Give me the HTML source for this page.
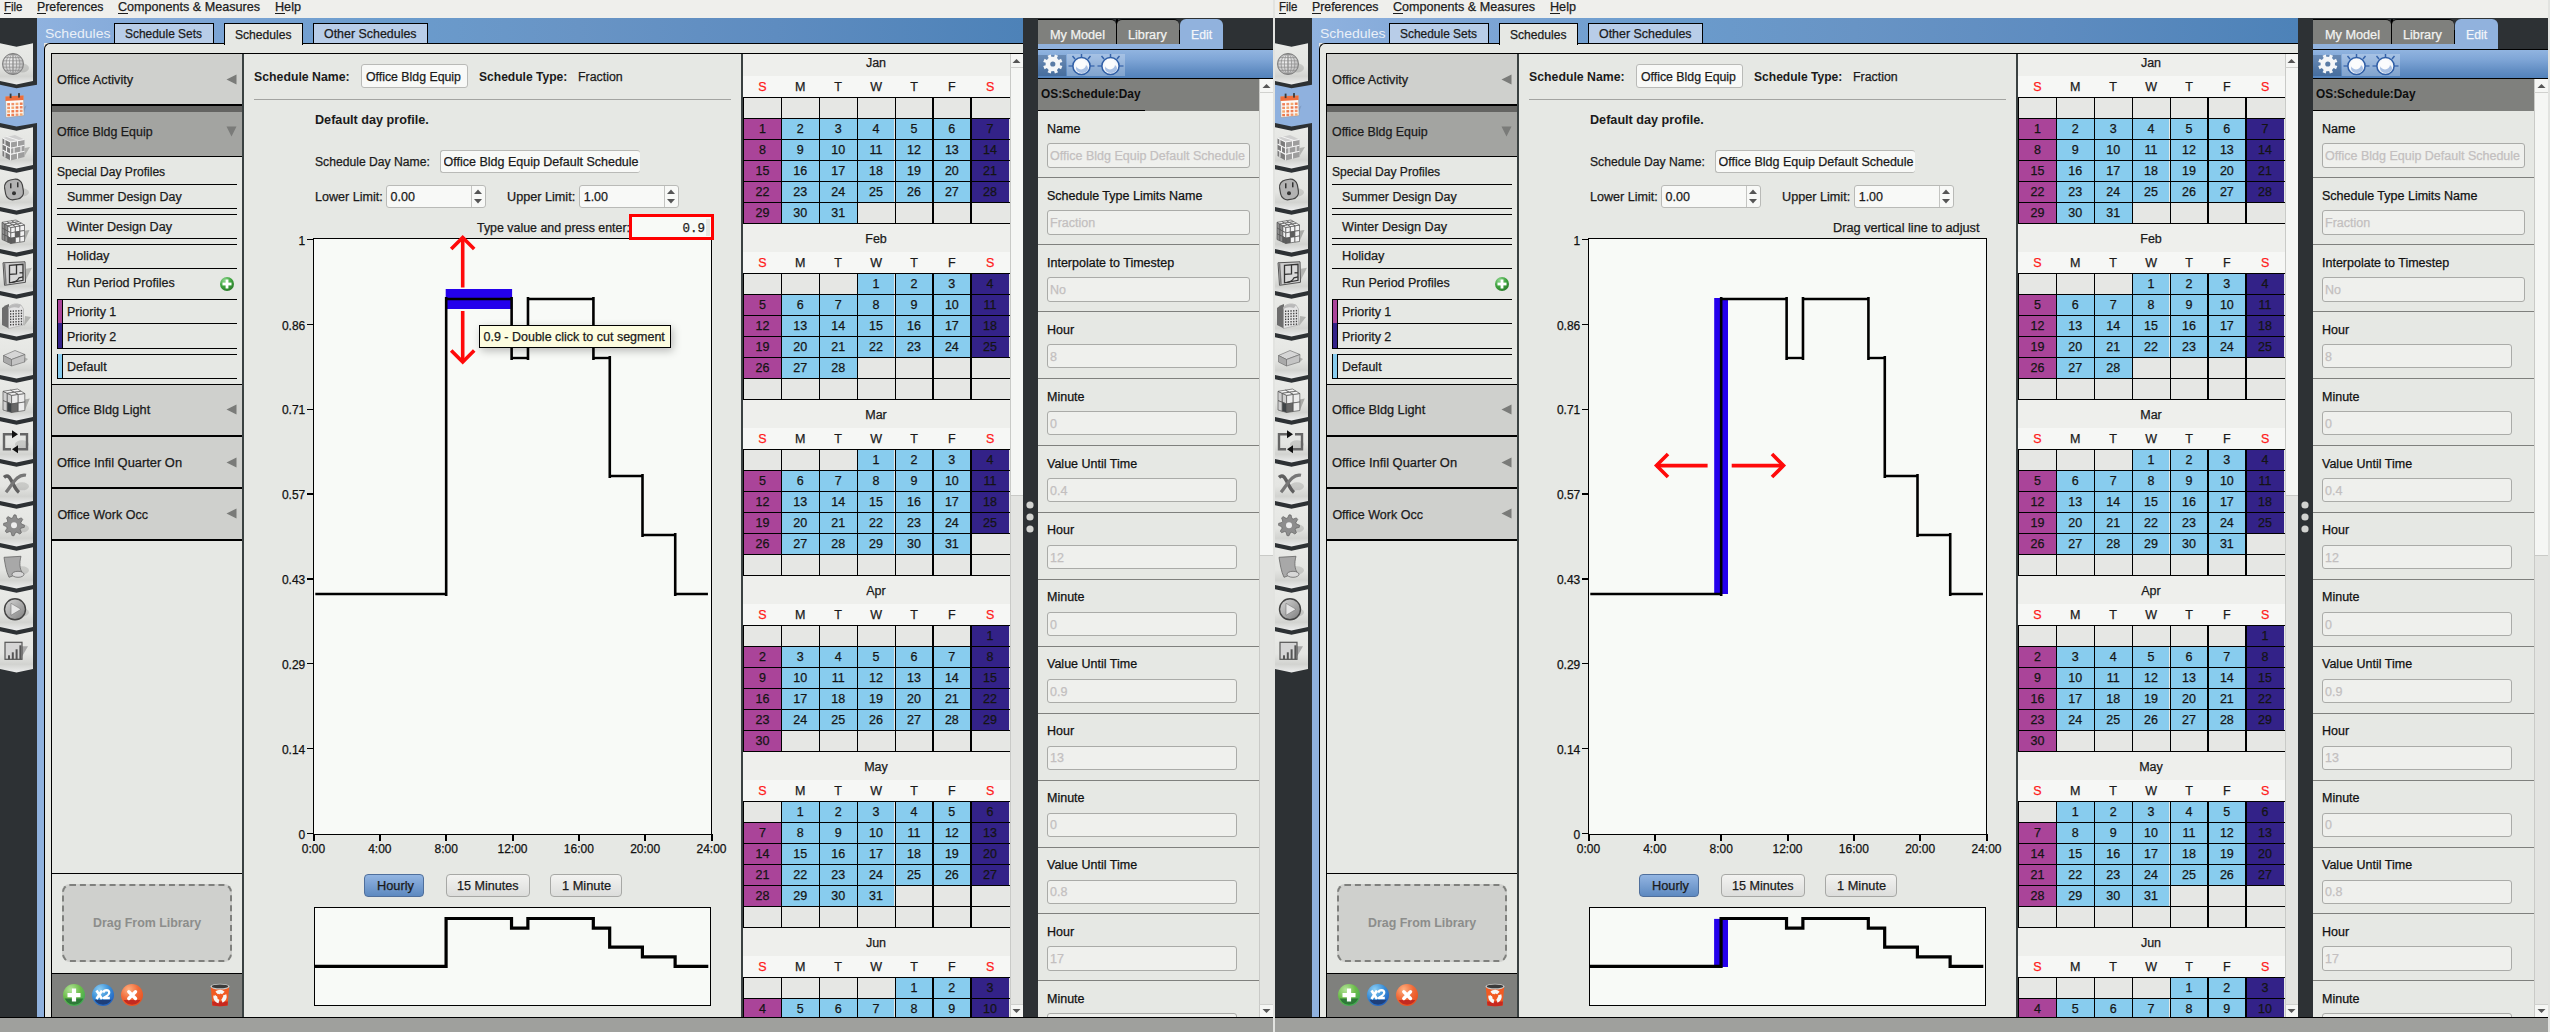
<!DOCTYPE html><html><head><meta charset="utf-8"><style>

html,body{margin:0;padding:0;width:2550px;height:1032px;overflow:hidden;background:#e6e7e4}
.shot{position:absolute;top:0;width:1275px;height:1032px;overflow:hidden}
.shot>div,.shot>svg{position:absolute}

</style></head><body>
<div class="shot" style="left:0px">
<div style="left:0px;top:0px;width:1273px;height:18px;background:#efefec;"></div>
<div style="left:3.50px;top:1.43px;font-family:'Liberation Sans', sans-serif;font-size:12.2px;line-height:12.2px;font-weight:normal;color:#1c1c1c;white-space:nowrap;-webkit-text-stroke:0.25px #1c1c1c;transform:scaleX(0.9391);transform-origin:0 0;">File</div>
<div style="left:3.5px;top:13px;width:7.543147208121827px;height:1px;background:#1c1c1c;"></div>
<div style="left:37.00px;top:1.43px;font-family:'Liberation Sans', sans-serif;font-size:12.2px;line-height:12.2px;font-weight:normal;color:#1c1c1c;white-space:nowrap;-webkit-text-stroke:0.25px #1c1c1c;transform:scaleX(1.0106);transform-origin:0 0;">Preferences</div>
<div style="left:37px;top:13px;width:8.686170212765958px;height:1px;background:#1c1c1c;"></div>
<div style="left:118.00px;top:1.43px;font-family:'Liberation Sans', sans-serif;font-size:12.2px;line-height:12.2px;font-weight:normal;color:#1c1c1c;white-space:nowrap;-webkit-text-stroke:0.25px #1c1c1c;transform:scaleX(1.0320);transform-origin:0 0;">Components &amp; Measures</div>
<div style="left:118px;top:13px;width:9.581395348837205px;height:1px;background:#1c1c1c;"></div>
<div style="left:275.00px;top:1.43px;font-family:'Liberation Sans', sans-serif;font-size:12.2px;line-height:12.2px;font-weight:normal;color:#1c1c1c;white-space:nowrap;-webkit-text-stroke:0.25px #1c1c1c;transform:scaleX(1.0359);transform-origin:0 0;">Help</div>
<div style="left:275px;top:13px;width:9.615537848605584px;height:1px;background:#1c1c1c;"></div>
<div style="left:0px;top:18px;width:37px;height:999px;background:#2d3134;"></div>
<svg style="position:absolute;left:0px;top:18px;" width="37" height="999" viewBox="0 0 37 999"><defs><linearGradient id="bn" x1="0" y1="0" x2="0" y2="1"><stop offset="0" stop-color="#e9eae7"/><stop offset="0.55" stop-color="#e4e5e2"/><stop offset="0.8" stop-color="#d2d3d0"/><stop offset="1" stop-color="#eceded"/></linearGradient><linearGradient id="gr" x1="0" y1="0" x2="1" y2="1"><stop offset="0" stop-color="#d9d9d9"/><stop offset="1" stop-color="#7d7d7d"/></linearGradient></defs><polygon points="0,25.30 16.50,28.80 33,25.30 33,63.00 16.50,66.50 0,63.00" fill="url(#bn)"/><ellipse cx="22" cy="50.0" rx="7" ry="4.5" fill="#000" opacity="0.13"/><defs><radialGradient id="gl" cx="0.4" cy="0.35" r="0.7"><stop offset="0" stop-color="#f2f2f2"/><stop offset="1" stop-color="#b9b9b9"/></radialGradient><clipPath id="gc"><circle cx="13" cy="46.0" r="10.6"/></clipPath></defs><circle cx="13" cy="46.0" r="10.6" fill="url(#gl)"/><g clip-path="url(#gc)" stroke="#8f8f8f" stroke-width="0.75" fill="none"><line x1="2" y1="36.4" x2="24" y2="36.4"/><line x1="2" y1="39.6" x2="24" y2="39.6"/><line x1="2" y1="42.8" x2="24" y2="42.8"/><line x1="2" y1="46.0" x2="24" y2="46.0"/><line x1="2" y1="49.2" x2="24" y2="49.2"/><line x1="2" y1="52.4" x2="24" y2="52.4"/><line x1="2" y1="55.6" x2="24" y2="55.6"/><ellipse cx="13" cy="46.0" rx="0.3" ry="10.6"/><ellipse cx="13" cy="46.0" rx="3.6" ry="10.6"/><ellipse cx="13" cy="46.0" rx="6.9" ry="10.6"/><ellipse cx="13" cy="46.0" rx="10.2" ry="10.6"/></g><circle cx="13" cy="46.0" r="10.6" fill="none" stroke="#7a7a7a" stroke-width="0.8"/><polygon points="0,66.80 16.5,70.30 37,66.80 37,105.00 16.5,108.50 0,105.00" fill="#8fb1de"/><polygon points="21.5,90.6 26.5,87.6 23.5,95.6" fill="#7f9cc4"/><polygon points="5.5,78.6 23.5,77.6 24.0,97.6 6.0,99.6" fill="#fbfbf8" stroke="#9a9a9a" stroke-width="0.6"/><polygon points="5.5,78.6 23.5,77.6 23.5,82.1 5.5,83.1" fill="#ee6d3c"/><rect x="7.2" y="85.1" width="2.8" height="2.4" fill="#ef7f55"/><rect x="11.4" y="84.9" width="2.8" height="2.4" fill="#f0936a"/><rect x="15.6" y="84.7" width="2.8" height="2.4" fill="#f4a870"/><rect x="19.8" y="84.5" width="2.8" height="2.4" fill="#eb7a4d"/><rect x="7.2" y="88.7" width="2.8" height="2.4" fill="#f0936a"/><rect x="11.4" y="88.5" width="2.8" height="2.4" fill="#f4a870"/><rect x="15.6" y="88.3" width="2.8" height="2.4" fill="#eb7a4d"/><rect x="19.8" y="88.1" width="2.8" height="2.4" fill="#ef7f55"/><rect x="7.2" y="92.3" width="2.8" height="2.4" fill="#f4a870"/><rect x="11.4" y="92.1" width="2.8" height="2.4" fill="#eb7a4d"/><rect x="15.6" y="91.9" width="2.8" height="2.4" fill="#ef7f55"/><rect x="19.8" y="91.7" width="2.8" height="2.4" fill="#f0936a"/><rect x="7.2" y="95.9" width="2.8" height="2.4" fill="#eb7a4d"/><rect x="11.4" y="95.7" width="2.8" height="2.4" fill="#ef7f55"/><rect x="15.6" y="95.5" width="2.8" height="2.4" fill="#f0936a"/><rect x="19.8" y="95.3" width="2.8" height="2.4" fill="#f4a870"/><rect x="9.7" y="75.6" width="1.8" height="4.5" fill="#3a3a3a"/><rect x="18.1" y="75.1" width="1.8" height="4.5" fill="#3a3a3a"/><polygon points="0,109.30 16.50,112.80 33,109.30 33,147.00 16.50,150.50 0,147.00" fill="url(#bn)"/><polygon points="24.5,130.0 30,129.0 24.5,138.0" fill="#b1b2af"/><polygon points="2.5,120.0 10.5,124.0 10.5,142.5 2.5,138.0" fill="#7b7b7b"/><polygon points="10.5,124.0 24.5,121.5 24.5,139.0 10.5,142.5" fill="#9d9d9d"/><polygon points="2.5,120.0 15,117.0 24.5,121.5 10.5,124.0" fill="#cfcfcf"/><polyline points="2.5,126.0 10.5,130.2 24.5,127.3" fill="none" stroke="#f4f4f4" stroke-width="1.1"/><polyline points="2.5,132.0 10.5,136.3 24.5,133.2" fill="none" stroke="#f4f4f4" stroke-width="1.1"/><line x1="17.5" y1="122.8" x2="17.5" y2="128.8" stroke="#f4f4f4" stroke-width="1.1"/><line x1="4.9" y1="121.2" x2="4.9" y2="127.2" stroke="#f4f4f4" stroke-width="1.1"/><line x1="14.0" y1="129.5" x2="14.0" y2="135.5" stroke="#f4f4f4" stroke-width="1.1"/><line x1="21.0" y1="128.0" x2="21.0" y2="134.0" stroke="#f4f4f4" stroke-width="1.1"/><line x1="6.5" y1="128.1" x2="6.5" y2="134.2" stroke="#f4f4f4" stroke-width="1.1"/><line x1="17.5" y1="134.8" x2="17.5" y2="140.8" stroke="#f4f4f4" stroke-width="1.1"/><line x1="4.9" y1="133.3" x2="4.9" y2="139.3" stroke="#f4f4f4" stroke-width="1.1"/><polyline points="2.5,120.0 10.5,124.0 24.5,121.5" fill="none" stroke="#f4f4f4" stroke-width="1.1"/><line x1="10.5" y1="124.0" x2="10.5" y2="142.5" stroke="#f4f4f4" stroke-width="1.1"/><line x1="6.5" y1="118.5" x2="19" y2="122.5" stroke="#f4f4f4" stroke-width="1"/><polygon points="0,151.30 16.50,154.80 33,151.30 33,189.00 16.50,192.50 0,189.00" fill="url(#bn)"/><ellipse cx="22" cy="174.3" rx="7" ry="4" fill="#000" opacity="0.12"/><rect x="5" y="161.3" width="18" height="20" rx="7" fill="#b3b3b3" stroke="#444" stroke-width="1.2" transform="rotate(-10 15 171.3)"/><rect x="10" y="165.3" width="1.5" height="5" fill="#333"/><rect x="17" y="164.3" width="1.5" height="5" fill="#333"/><circle cx="14" cy="175.3" r="2" fill="#333"/><polygon points="0,193.30 16.50,196.80 33,193.30 33,231.00 16.50,234.50 0,231.00" fill="url(#bn)"/><polygon points="24.5,212.8 29.5,211.9 24.5,223.5" fill="#a9aaa7"/><polygon points="2.00,204.30 4.93,206.03 4.93,211.63 2.00,210.03" fill="#8e8e8e" stroke="#555" stroke-width="0.7"/><polygon points="4.93,206.03 7.87,207.77 7.87,213.23 4.93,211.63" fill="#8e8e8e" stroke="#555" stroke-width="0.7"/><polygon points="7.87,207.77 10.80,209.50 10.80,214.83 7.87,213.23" fill="#f2f2f2" stroke="#555" stroke-width="0.7"/><polygon points="2.00,210.03 4.93,211.63 4.93,217.23 2.00,215.77" fill="#8e8e8e" stroke="#555" stroke-width="0.7"/><polygon points="4.93,211.63 7.87,213.23 7.87,218.70 4.93,217.23" fill="#8e8e8e" stroke="#555" stroke-width="0.7"/><polygon points="7.87,213.23 10.80,214.83 10.80,220.17 7.87,218.70" fill="#f2f2f2" stroke="#555" stroke-width="0.7"/><polygon points="2.00,215.77 4.93,217.23 4.93,222.83 2.00,221.50" fill="#8e8e8e" stroke="#555" stroke-width="0.7"/><polygon points="4.93,217.23 7.87,218.70 7.87,224.17 4.93,222.83" fill="#8e8e8e" stroke="#555" stroke-width="0.7"/><polygon points="7.87,218.70 10.80,220.17 10.80,225.50 7.87,224.17" fill="#5e5e5e" stroke="#555" stroke-width="0.7"/><polygon points="10.80,209.50 15.37,208.67 15.37,214.06 10.80,214.83" fill="#f2f2f2" stroke="#555" stroke-width="0.7"/><polygon points="15.37,208.67 19.93,207.83 19.93,213.28 15.37,214.06" fill="#f2f2f2" stroke="#555" stroke-width="0.7"/><polygon points="19.93,207.83 24.50,207.00 24.50,212.50 19.93,213.28" fill="#f2f2f2" stroke="#555" stroke-width="0.7"/><polygon points="10.80,214.83 15.37,214.06 15.37,219.44 10.80,220.17" fill="#f2f2f2" stroke="#555" stroke-width="0.7"/><polygon points="15.37,214.06 19.93,213.28 19.93,218.72 15.37,219.44" fill="#5e5e5e" stroke="#555" stroke-width="0.7"/><polygon points="19.93,213.28 24.50,212.50 24.50,218.00 19.93,218.72" fill="#f2f2f2" stroke="#555" stroke-width="0.7"/><polygon points="10.80,220.17 15.37,219.44 15.37,224.83 10.80,225.50" fill="#5e5e5e" stroke="#555" stroke-width="0.7"/><polygon points="15.37,219.44 19.93,218.72 19.93,224.17 15.37,224.83" fill="#f2f2f2" stroke="#555" stroke-width="0.7"/><polygon points="19.93,218.72 24.50,218.00 24.50,223.50 19.93,224.17" fill="#f2f2f2" stroke="#555" stroke-width="0.7"/><polygon points="16.00,202.00 18.83,203.67 14.20,204.46 11.33,202.77" fill="#f2f2f2" stroke="#555" stroke-width="0.7"/><polygon points="18.83,203.67 21.67,205.33 17.07,206.14 14.20,204.46" fill="#f2f2f2" stroke="#555" stroke-width="0.7"/><polygon points="21.67,205.33 24.50,207.00 19.93,207.83 17.07,206.14" fill="#f2f2f2" stroke="#555" stroke-width="0.7"/><polygon points="11.33,202.77 14.20,204.46 9.57,205.24 6.67,203.53" fill="#f2f2f2" stroke="#555" stroke-width="0.7"/><polygon points="14.20,204.46 17.07,206.14 12.47,206.96 9.57,205.24" fill="#f2f2f2" stroke="#555" stroke-width="0.7"/><polygon points="17.07,206.14 19.93,207.83 15.37,208.67 12.47,206.96" fill="#f2f2f2" stroke="#555" stroke-width="0.7"/><polygon points="6.67,203.53 9.57,205.24 4.93,206.03 2.00,204.30" fill="#f2f2f2" stroke="#555" stroke-width="0.7"/><polygon points="9.57,205.24 12.47,206.96 7.87,207.77 4.93,206.03" fill="#f2f2f2" stroke="#555" stroke-width="0.7"/><polygon points="12.47,206.96 15.37,208.67 10.80,209.50 7.87,207.77" fill="#f2f2f2" stroke="#555" stroke-width="0.7"/><polygon points="0,235.30 16.50,238.80 33,235.30 33,273.00 16.50,276.50 0,273.00" fill="url(#bn)"/><polygon points="26,250.8 32,249.8 26,261.8" fill="#b4b5b2"/><polygon points="3,244.8 25,243.8 25.5,264.3 4.5,267.3" fill="#cfcfcf" stroke="#555" stroke-width="1"/><polygon points="9.5,247.3 23,246.3 23,262.3 9.5,264.8" fill="#d9d9d9" stroke="#333" stroke-width="1.3"/><line x1="4.5" y1="245.3" x2="6" y2="266.8" stroke="#777" stroke-width="1.5"/><polyline points="9.5,256.3 16.5,255.8 16.5,246.8" fill="none" stroke="#333" stroke-width="1.3"/><polyline points="19.5,254.8 23,254.8" fill="none" stroke="#333" stroke-width="1.3"/><path d="M12,264.5 Q17,263.8 19,259.8 L23,258.8" fill="none" stroke="#333" stroke-width="1.2"/><polygon points="0,277.30 16.50,280.80 33,277.30 33,315.00 16.50,318.50 0,315.00" fill="url(#bn)"/><polygon points="25,298.0 31,299.0 24,308.0" fill="#b1b2af"/><path d="M2,290.0 Q5,287.0 9,286.0 L9,310.5 L2,307.0 Z" fill="#6d6d6d"/><path d="M8.5,289.0 Q14,284.0 21,287.0 L23.5,291.0 L23.5,307.0 L8.5,310.5 Z" fill="#e4e4e4" stroke="#9a9a9a" stroke-width="0.5"/><path d="M8.5,289.0 Q14,284.0 21,287.0 L19,290.0 Q13,288.0 8.5,291.0 Z" fill="#b9b9b9"/><rect x="10.0" y="292.5" width="1.3" height="1.5" fill="#444"/><rect x="12.7" y="292.4" width="1.3" height="1.5" fill="#444"/><rect x="15.4" y="292.2" width="1.3" height="1.5" fill="#444"/><rect x="18.1" y="292.1" width="1.3" height="1.5" fill="#444"/><rect x="20.8" y="291.9" width="1.3" height="1.5" fill="#444"/><rect x="10.0" y="295.2" width="1.3" height="1.5" fill="#444"/><rect x="12.7" y="295.1" width="1.3" height="1.5" fill="#444"/><rect x="15.4" y="294.9" width="1.3" height="1.5" fill="#444"/><rect x="18.1" y="294.8" width="1.3" height="1.5" fill="#444"/><rect x="20.8" y="294.6" width="1.3" height="1.5" fill="#444"/><rect x="10.0" y="297.9" width="1.3" height="1.5" fill="#444"/><rect x="12.7" y="297.8" width="1.3" height="1.5" fill="#444"/><rect x="15.4" y="297.6" width="1.3" height="1.5" fill="#444"/><rect x="18.1" y="297.4" width="1.3" height="1.5" fill="#444"/><rect x="20.8" y="297.3" width="1.3" height="1.5" fill="#444"/><rect x="10.0" y="300.6" width="1.3" height="1.5" fill="#444"/><rect x="12.7" y="300.5" width="1.3" height="1.5" fill="#444"/><rect x="15.4" y="300.3" width="1.3" height="1.5" fill="#444"/><rect x="18.1" y="300.2" width="1.3" height="1.5" fill="#444"/><rect x="20.8" y="300.0" width="1.3" height="1.5" fill="#444"/><rect x="10.0" y="303.3" width="1.3" height="1.5" fill="#444"/><rect x="12.7" y="303.2" width="1.3" height="1.5" fill="#444"/><rect x="15.4" y="303.0" width="1.3" height="1.5" fill="#444"/><rect x="18.1" y="302.9" width="1.3" height="1.5" fill="#444"/><rect x="20.8" y="302.7" width="1.3" height="1.5" fill="#444"/><rect x="10.0" y="306.0" width="1.3" height="1.5" fill="#444"/><rect x="12.7" y="305.9" width="1.3" height="1.5" fill="#444"/><rect x="15.4" y="305.7" width="1.3" height="1.5" fill="#444"/><rect x="18.1" y="305.6" width="1.3" height="1.5" fill="#444"/><rect x="20.8" y="305.4" width="1.3" height="1.5" fill="#444"/><polygon points="0,319.30 16.50,322.80 33,319.30 33,357.00 16.50,360.50 0,357.00" fill="url(#bn)"/><polygon points="24,339.0 28,341.0 24,345.0" fill="#b1b2af"/><polygon points="3.5,337.5 15,332.5 25,336.5 11.5,341.5" fill="#d6d6d6" stroke="#666" stroke-width="0.6"/><polygon points="3.5,337.5 11.5,341.5 11.5,348.0 3.5,344.0" fill="#a9a9a9" stroke="#666" stroke-width="0.6"/><polygon points="11.5,341.5 25,336.5 24.5,344.0 11.5,348.0" fill="#c4c4c4" stroke="#666" stroke-width="0.6"/><polygon points="0,361.30 16.50,364.80 33,361.30 33,399.00 16.50,402.50 0,399.00" fill="url(#bn)"/><polygon points="24.8,381.4 29.8,380.6 24.8,392.5" fill="#a9aaa7"/><polygon points="3.00,373.30 7.30,375.30 7.30,384.27 3.00,382.65" fill="#cfcfcf" stroke="#555" stroke-width="0.7"/><polygon points="7.30,375.30 11.60,377.30 11.60,385.90 7.30,384.27" fill="#cfcfcf" stroke="#555" stroke-width="0.7"/><polygon points="3.00,382.65 7.30,384.27 7.30,393.25 3.00,392.00" fill="#cfcfcf" stroke="#555" stroke-width="0.7"/><polygon points="7.30,384.27 11.60,385.90 11.60,394.50 7.30,393.25" fill="#3e4346" stroke="#555" stroke-width="0.7"/><polygon points="11.60,377.30 18.20,376.40 18.20,384.95 11.60,385.90" fill="#ececec" stroke="#555" stroke-width="0.7"/><polygon points="18.20,376.40 24.80,375.50 24.80,384.00 18.20,384.95" fill="#ececec" stroke="#555" stroke-width="0.7"/><polygon points="11.60,385.90 18.20,384.95 18.20,393.50 11.60,394.50" fill="#676767" stroke="#555" stroke-width="0.7"/><polygon points="18.20,384.95 24.80,384.00 24.80,392.50 18.20,393.50" fill="#ececec" stroke="#555" stroke-width="0.7"/><polygon points="17.50,371.00 21.15,373.25 14.22,374.27 10.25,372.15" fill="#f4f4f4" stroke="#555" stroke-width="0.7"/><polygon points="21.15,373.25 24.80,375.50 18.20,376.40 14.22,374.27" fill="#f4f4f4" stroke="#555" stroke-width="0.7"/><polygon points="10.25,372.15 14.22,374.27 7.30,375.30 3.00,373.30" fill="#f4f4f4" stroke="#555" stroke-width="0.7"/><polygon points="14.22,374.27 18.20,376.40 11.60,377.30 7.30,375.30" fill="#f4f4f4" stroke="#555" stroke-width="0.7"/><polygon points="0,403.30 16.50,406.80 33,403.30 33,441.00 16.50,444.50 0,441.00" fill="url(#bn)"/><ellipse cx="22" cy="426.3" rx="7" ry="4" fill="#000" opacity="0.12"/><polyline points="13,416.3 4,416.3 4,431.3 11,431.3" fill="none" stroke="#666" stroke-width="2.4"/><polyline points="18,431.3 27,431.3 27,416.3 20,416.3" fill="none" stroke="#666" stroke-width="2.4"/><polygon points="12,412.3 18,416.3 12,420.3" fill="#111"/><polygon points="18,427.3 12,431.3 18,435.3" fill="#111"/><polygon points="0,445.30 16.50,448.80 33,445.30 33,483.00 16.50,486.50 0,483.00" fill="url(#bn)"/><ellipse cx="22" cy="468.3" rx="7" ry="4" fill="#000" opacity="0.12"/><path d="M4,459.3 C11,453.3 12,469.3 19,474.3" fill="none" stroke="#5f5f5f" stroke-width="3.5"/><path d="M6,474.3 C12,467.3 17,455.3 26,457.3" fill="none" stroke="#777" stroke-width="3.2"/><polygon points="0,487.30 16.50,490.80 33,487.30 33,525.00 16.50,528.50 0,525.00" fill="url(#bn)"/><ellipse cx="22" cy="510.3" rx="7" ry="4" fill="#000" opacity="0.12"/><path d="M14.00,496.80 L16.05,497.00 L16.87,500.37 L18.17,501.06 L21.42,499.88 L22.73,501.47 L20.93,504.43 L21.36,505.84 L24.50,507.30 L24.30,509.35 L20.93,510.17 L20.24,511.47 L21.42,514.72 L19.83,516.03 L16.87,514.23 L15.46,514.66 L14.00,517.80 L11.95,517.60 L11.13,514.23 L9.83,513.54 L6.58,514.72 L5.27,513.13 L7.07,510.17 L6.64,508.76 L3.50,507.30 L3.70,505.25 L7.07,504.43 L7.76,503.13 L6.58,499.88 L8.17,498.57 L11.13,500.37 L12.54,499.94Z" fill="#8d8d8d" stroke="#555" stroke-width="0.6"/><circle cx="14" cy="507.3" r="3" fill="#eee"/><polygon points="0,529.30 16.50,532.80 33,529.30 33,567.00 16.50,570.50 0,567.00" fill="url(#bn)"/><ellipse cx="22" cy="552.3" rx="7" ry="4" fill="#000" opacity="0.12"/><path d="M4,539.3 L21,538.3 C19,545.3 20,551.3 22,554.3 L9,559.3 C6,553.3 5,545.3 4,539.3Z" fill="#a8a8a8" stroke="#666" stroke-width="0.8"/><ellipse cx="18" cy="556.3" rx="6" ry="3" fill="#d8d8d8" stroke="#666" stroke-width="0.8"/><polygon points="0,571.30 16.50,574.80 33,571.30 33,609.00 16.50,612.50 0,609.00" fill="url(#bn)"/><ellipse cx="22" cy="594.3" rx="7" ry="4" fill="#000" opacity="0.12"/><circle cx="15" cy="591.3" r="10.5" fill="url(#gr)" stroke="#444" stroke-width="1.4"/><polygon points="11,585.3 21,591.3 11,597.3" fill="#e6e6e6" stroke="#777" stroke-width="0.6"/><polygon points="0,613.30 16.50,616.80 33,613.30 33,651.00 16.50,654.50 0,651.00" fill="url(#bn)"/><polygon points="19,628.3 28,628.3 21,640.3" fill="#a8a8a8"/><rect x="5" y="624.3" width="17" height="17" fill="#d5d5d5" stroke="#555" stroke-width="1.2"/><rect x="8.0" y="637.3" width="2" height="4" fill="#555"/><rect x="11.8" y="634.3" width="2" height="7" fill="#555"/><rect x="15.6" y="631.3" width="2" height="10" fill="#555"/><rect x="19.4" y="627.3" width="2" height="14" fill="#555"/></svg>
<div style="left:37px;top:18px;width:986px;height:25px;background:linear-gradient(90deg,#8fb2df 0%,#7fa6d6 15%,#6b9ccd 35%,#6894c5 55%,#5e8cc0 75%,#4d82b8 100%);"></div>
<div style="left:37px;top:43px;width:7px;height:974px;background:#8fb1de;"></div>
<div style="left:44.50px;top:27.00px;font-family:'Liberation Sans', sans-serif;font-size:13.3px;line-height:13.3px;font-weight:normal;color:#eaf0f8;white-space:nowrap;-webkit-text-stroke:0px #eaf0f8;transform:scaleX(1.0548);transform-origin:0 0;">Schedules</div>
<div style="left:114px;top:23px;width:100px;height:21px;background:#b8cde8;border:1px solid #000;border-bottom:none;box-sizing:border-box"></div>
<div style="left:125.30px;top:27.88px;font-family:'Liberation Sans', sans-serif;font-size:12.5px;line-height:12.5px;font-weight:normal;color:#1a1a1a;white-space:nowrap;-webkit-text-stroke:0.25px #1a1a1a;transform:scaleX(0.9553);transform-origin:0 0;">Schedule Sets</div>
<div style="left:313px;top:23px;width:115px;height:21px;background:#b8cde8;border:1px solid #000;border-bottom:none;box-sizing:border-box"></div>
<div style="left:324.00px;top:27.88px;font-family:'Liberation Sans', sans-serif;font-size:12.5px;line-height:12.5px;font-weight:normal;color:#1a1a1a;white-space:nowrap;-webkit-text-stroke:0.25px #1a1a1a;transform:scaleX(0.9936);transform-origin:0 0;">Other Schedules</div>
<div style="left:44px;top:43px;width:979px;height:975px;background:#e6e8e4;border-left:1px solid #000;border-top:1px solid #000;border-top-left-radius:6px;box-sizing:border-box"></div>
<div style="left:224px;top:23px;width:79px;height:22px;background:#e6e8e4;border:1px solid #000;border-bottom:none;box-sizing:border-box"></div>
<div style="left:235.00px;top:29.18px;font-family:'Liberation Sans', sans-serif;font-size:12.5px;line-height:12.5px;font-weight:normal;color:#1a1a1a;white-space:nowrap;-webkit-text-stroke:0.25px #1a1a1a;transform:scaleX(0.9675);transform-origin:0 0;">Schedules</div>
<div style="left:51px;top:53px;width:972px;height:1px;background:#000;"></div>
<div style="left:51px;top:53px;width:1px;height:964px;background:#000;"></div>
<div style="left:242px;top:54px;width:2px;height:963px;background:#3a4141;"></div>
<div style="left:52px;top:54px;width:190px;height:50px;background:#cfd0cd;"></div>
<div style="left:52px;top:104px;width:190px;height:2px;background:#000;"></div>
<div style="left:57.40px;top:73.97px;font-family:'Liberation Sans', sans-serif;font-size:12.5px;line-height:12.5px;font-weight:normal;color:#1a1a1a;white-space:nowrap;-webkit-text-stroke:0.25px #1a1a1a;transform:scaleX(1.0187);transform-origin:0 0;">Office Activity</div>
<svg style="position:absolute;left:226px;top:73.5px;" width="11" height="11" viewBox="0 0 11 11"><polygon points="10.5,0.5 10.5,10.5 0.5,5.5" fill="#7a7b79"/></svg>
<div style="left:52px;top:106px;width:190px;height:6px;background:#646462;"></div>
<div style="left:52px;top:112px;width:190px;height:44px;background:#a3a4a1;"></div>
<div style="left:52px;top:156px;width:190px;height:1px;background:#000;"></div>
<div style="left:57.40px;top:126.17px;font-family:'Liberation Sans', sans-serif;font-size:12.5px;line-height:12.5px;font-weight:normal;color:#1a1a1a;white-space:nowrap;-webkit-text-stroke:0.25px #1a1a1a;transform:scaleX(0.9917);transform-origin:0 0;">Office Bldg Equip</div>
<svg style="position:absolute;left:226px;top:126px;" width="11" height="11" viewBox="0 0 11 11"><polygon points="0.5,0.5 10.5,0.5 5.5,10.5" fill="#7a7b79"/></svg>
<div style="left:57.40px;top:165.68px;font-family:'Liberation Sans', sans-serif;font-size:12.5px;line-height:12.5px;font-weight:normal;color:#1a1a1a;white-space:nowrap;-webkit-text-stroke:0.25px #1a1a1a;transform:scaleX(0.9669);transform-origin:0 0;">Special Day Profiles</div>
<div style="left:57px;top:184px;width:180px;height:1.1999999999999886px;background:#000;"></div>
<div style="left:57px;top:208px;width:180px;height:1.1999999999999886px;background:#000;"></div>
<div style="left:57px;top:214px;width:180px;height:1.1999999999999886px;background:#000;"></div>
<div style="left:57px;top:238px;width:180px;height:1.1999999999999886px;background:#000;"></div>
<div style="left:57px;top:244px;width:180px;height:1.1999999999999886px;background:#000;"></div>
<div style="left:57px;top:268px;width:180px;height:1.1999999999999886px;background:#000;"></div>
<div style="left:67.00px;top:191.18px;font-family:'Liberation Sans', sans-serif;font-size:12.5px;line-height:12.5px;font-weight:normal;color:#1a1a1a;white-space:nowrap;-webkit-text-stroke:0.25px #1a1a1a;transform:scaleX(0.9948);transform-origin:0 0;">Summer Design Day</div>
<div style="left:67.00px;top:220.58px;font-family:'Liberation Sans', sans-serif;font-size:12.5px;line-height:12.5px;font-weight:normal;color:#1a1a1a;white-space:nowrap;-webkit-text-stroke:0.25px #1a1a1a;transform:scaleX(1.0077);transform-origin:0 0;">Winter Design Day</div>
<div style="left:67.00px;top:250.38px;font-family:'Liberation Sans', sans-serif;font-size:12.5px;line-height:12.5px;font-weight:normal;color:#1a1a1a;white-space:nowrap;-webkit-text-stroke:0.25px #1a1a1a;transform:scaleX(1.0192);transform-origin:0 0;">Holiday</div>
<div style="left:67.00px;top:277.18px;font-family:'Liberation Sans', sans-serif;font-size:12.5px;line-height:12.5px;font-weight:normal;color:#1a1a1a;white-space:nowrap;-webkit-text-stroke:0.25px #1a1a1a;">Run Period Profiles</div>
<svg style="position:absolute;left:219px;top:276px;" width="16" height="16" viewBox="0 0 16 16"><defs><radialGradient id="g8fd88f" cx="0.35" cy="0.25" r="0.8"><stop offset="0" stop-color="#8fd88f"/><stop offset="0.55" stop-color="#3ea33e"/><stop offset="1" stop-color="#2a7a2a"/></radialGradient><clipPath id="cg8fd88f"><circle cx="8" cy="8" r="5.8"/></clipPath></defs><circle cx="8" cy="8" r="7" fill="url(#g8fd88f)"/><rect x="3.5" y="6.6" width="9" height="2.8" fill="#fff"/><rect x="6.6" y="3.5" width="2.8" height="9" fill="#fff"/></svg>
<div style="left:57px;top:299.1px;width:180px;height:1.1999999999999886px;background:#000;"></div>
<div style="left:57px;top:299.6px;width:1px;height:23.599999999999966px;background:#000;"></div>
<div style="left:58px;top:299.6px;width:4px;height:23.599999999999966px;background:#aa4499;"></div>
<div style="left:62px;top:299.6px;width:1px;height:23.599999999999966px;background:#000;"></div>
<div style="left:57px;top:322.7px;width:180px;height:1.1999999999999886px;background:#000;"></div>
<div style="left:67.00px;top:305.68px;font-family:'Liberation Sans', sans-serif;font-size:12.5px;line-height:12.5px;font-weight:normal;color:#1a1a1a;white-space:nowrap;-webkit-text-stroke:0.25px #1a1a1a;">Priority 1</div>
<div style="left:57px;top:323.2px;width:1px;height:25.100000000000023px;background:#000;"></div>
<div style="left:58px;top:323.2px;width:4px;height:25.100000000000023px;background:#332288;"></div>
<div style="left:62px;top:323.2px;width:1px;height:25.100000000000023px;background:#000;"></div>
<div style="left:57px;top:347.8px;width:180px;height:1.1999999999999886px;background:#000;"></div>
<div style="left:67.00px;top:331.18px;font-family:'Liberation Sans', sans-serif;font-size:12.5px;line-height:12.5px;font-weight:normal;color:#1a1a1a;white-space:nowrap;-webkit-text-stroke:0.25px #1a1a1a;">Priority 2</div>
<div style="left:57px;top:353.9px;width:180px;height:1.1999999999999886px;background:#000;"></div>
<div style="left:57px;top:354.4px;width:1px;height:23.80000000000001px;background:#000;"></div>
<div style="left:58px;top:354.4px;width:4px;height:23.80000000000001px;background:#88ccee;"></div>
<div style="left:62px;top:354.4px;width:1px;height:23.80000000000001px;background:#000;"></div>
<div style="left:57px;top:377.7px;width:180px;height:1.1999999999999886px;background:#000;"></div>
<div style="left:67.00px;top:361.18px;font-family:'Liberation Sans', sans-serif;font-size:12.5px;line-height:12.5px;font-weight:normal;color:#1a1a1a;white-space:nowrap;-webkit-text-stroke:0.25px #1a1a1a;">Default</div>
<div style="left:52px;top:383.5px;width:190px;height:1.5px;background:#000;"></div>
<div style="left:52px;top:385px;width:190px;height:50px;background:#cfd0cd;"></div>
<div style="left:52px;top:435px;width:190px;height:2px;background:#000;"></div>
<div style="left:57.40px;top:404.18px;font-family:'Liberation Sans', sans-serif;font-size:12.5px;line-height:12.5px;font-weight:normal;color:#1a1a1a;white-space:nowrap;-webkit-text-stroke:0.25px #1a1a1a;transform:scaleX(1.0186);transform-origin:0 0;">Office Bldg Light</div>
<svg style="position:absolute;left:226px;top:403.7px;" width="11" height="11" viewBox="0 0 11 11"><polygon points="10.5,0.5 10.5,10.5 0.5,5.5" fill="#7a7b79"/></svg>
<div style="left:52px;top:437px;width:190px;height:50px;background:#cfd0cd;"></div>
<div style="left:52px;top:487px;width:190px;height:2px;background:#000;"></div>
<div style="left:57.40px;top:456.98px;font-family:'Liberation Sans', sans-serif;font-size:12.5px;line-height:12.5px;font-weight:normal;color:#1a1a1a;white-space:nowrap;-webkit-text-stroke:0.25px #1a1a1a;transform:scaleX(1.0305);transform-origin:0 0;">Office Infil Quarter On</div>
<svg style="position:absolute;left:226px;top:456.5px;" width="11" height="11" viewBox="0 0 11 11"><polygon points="10.5,0.5 10.5,10.5 0.5,5.5" fill="#7a7b79"/></svg>
<div style="left:52px;top:489px;width:190px;height:50px;background:#cfd0cd;"></div>
<div style="left:52px;top:539px;width:190px;height:2px;background:#000;"></div>
<div style="left:57.40px;top:508.78px;font-family:'Liberation Sans', sans-serif;font-size:12.5px;line-height:12.5px;font-weight:normal;color:#1a1a1a;white-space:nowrap;-webkit-text-stroke:0.25px #1a1a1a;">Office Work Occ</div>
<svg style="position:absolute;left:226px;top:508.3px;" width="11" height="11" viewBox="0 0 11 11"><polygon points="10.5,0.5 10.5,10.5 0.5,5.5" fill="#7a7b79"/></svg>
<div style="left:52px;top:873px;width:190px;height:1px;background:#000;"></div>
<div style="left:62.3px;top:883.7px;width:169.5px;height:78.59999999999991px;background:#cfd0cd;border:2px dashed #7f807d;border-radius:8px;box-sizing:border-box"></div>
<div style="left:92.60px;top:916.57px;font-family:'Liberation Sans', sans-serif;font-size:12.5px;line-height:12.5px;font-weight:bold;color:#8c8d8b;white-space:nowrap;-webkit-text-stroke:0px #8c8d8b;transform:scaleX(0.9927);transform-origin:0 0;">Drag From Library</div>
<div style="left:52px;top:973px;width:190px;height:1px;background:#000;"></div>
<div style="left:52px;top:974px;width:190px;height:43px;background:#7f807d;"></div>
<svg style="position:absolute;left:62px;top:983px;" width="24" height="24" viewBox="0 0 24 24"><defs><radialGradient id="gb4e49a" cx="0.35" cy="0.25" r="0.8"><stop offset="0" stop-color="#b4e49a"/><stop offset="0.55" stop-color="#6cbc4a"/><stop offset="1" stop-color="#3faa55"/></radialGradient><clipPath id="cgb4e49a"><circle cx="12" cy="12" r="9.8"/></clipPath></defs><circle cx="12" cy="12" r="11" fill="url(#gb4e49a)"/><rect x="1" y="15.5" width="22" height="11" fill="#2e7a38" clip-path="url(#cgb4e49a)"/><rect x="5.5" y="10" width="13" height="4.2" fill="#fff"/><rect x="9.9" y="5.5" width="4.2" height="13" fill="#fff"/></svg>
<svg style="position:absolute;left:91px;top:983px;" width="24" height="24" viewBox="0 0 24 24"><defs><radialGradient id="g8fd0f4" cx="0.35" cy="0.25" r="0.8"><stop offset="0" stop-color="#8fd0f4"/><stop offset="0.55" stop-color="#3a8fd8"/><stop offset="1" stop-color="#1f5fc0"/></radialGradient><clipPath id="cg8fd0f4"><circle cx="12" cy="12" r="9.8"/></clipPath></defs><circle cx="12" cy="12" r="11" fill="url(#g8fd0f4)"/><rect x="1" y="16.8" width="22" height="11" fill="#1e3f7a" clip-path="url(#cg8fd0f4)"/><path d="M5.5,7.5 L11,16 M11,7.5 L5.5,16" stroke="#fff" stroke-width="2.6"/><path d="M12.3,9.6 Q13,7.2 15.5,7.2 Q18.3,7.3 18.2,9.8 Q18,11.8 15,13.5 L12.6,15 L18.8,15" fill="none" stroke="#fff" stroke-width="2.3" stroke-linejoin="round"/></svg>
<svg style="position:absolute;left:120px;top:983px;" width="24" height="24" viewBox="0 0 24 24"><defs><radialGradient id="gffb080" cx="0.35" cy="0.25" r="0.8"><stop offset="0" stop-color="#ffb080"/><stop offset="0.55" stop-color="#f06a38"/><stop offset="1" stop-color="#e8501e"/></radialGradient><clipPath id="cgffb080"><circle cx="12" cy="12" r="9.8"/></clipPath></defs><circle cx="12" cy="12" r="11" fill="url(#gffb080)"/><rect x="1" y="17" width="22" height="11" fill="#c42a20" clip-path="url(#cgffb080)"/><path d="M8.8,8.8 L15.5,15.5 M15.5,8.8 L8.8,15.5" stroke="#fff" stroke-width="3.4" stroke-linecap="round"/></svg>
<svg style="position:absolute;left:209px;top:983px;" width="22" height="24" viewBox="0 0 22 24"><defs><clipPath id="tbody"><path d="M1.8,4 L20.2,4 L18.6,22.5 Q11,24 3.4,22.5 Z"/></clipPath></defs><path d="M1.8,4 L20.2,4 L18.6,22.5 Q11,24 3.4,22.5 Z" fill="#f25a22"/><rect x="0" y="18.5" width="22" height="6" fill="#c8281e" clip-path="url(#tbody)"/><ellipse cx="11" cy="3.6" rx="9.6" ry="2.9" fill="#c9cac8"/><ellipse cx="11" cy="3.4" rx="8.2" ry="1.9" fill="#3a3a3a"/><g transform="rotate(-20 11 13.6)"><circle cx="11" cy="13.6" r="4.9" fill="none" stroke="#f6f6f6" stroke-width="3.6" stroke-dasharray="7.2 3.06"/></g><polygon points="8,8.5 12.5,7.8 10.5,11.5" fill="#f6f6f6"/><polygon points="16.5,13 15.5,17.8 12.8,15" fill="#f6f6f6"/><polygon points="5.5,16.5 5.8,11.8 8.8,14.3" fill="#f6f6f6"/></svg>
<div style="left:254.10px;top:71.08px;font-family:'Liberation Sans', sans-serif;font-size:12.5px;line-height:12.5px;font-weight:bold;color:#1a1a1a;white-space:nowrap;-webkit-text-stroke:0px #1a1a1a;transform:scaleX(0.9836);transform-origin:0 0;">Schedule Name:</div>
<div style="left:361.4px;top:64.4px;width:107.10000000000002px;height:24.0px;background:#f8f9f7;border:1px solid #b9bab7;border-radius:3px;box-sizing:border-box"></div>
<div style="left:365.50px;top:71.08px;font-family:'Liberation Sans', sans-serif;font-size:12.5px;line-height:12.5px;font-weight:normal;color:#1a1a1a;white-space:nowrap;-webkit-text-stroke:0.25px #1a1a1a;transform:scaleX(0.9855);transform-origin:0 0;">Office Bldg Equip</div>
<div style="left:479.00px;top:71.08px;font-family:'Liberation Sans', sans-serif;font-size:12.5px;line-height:12.5px;font-weight:bold;color:#1a1a1a;white-space:nowrap;-webkit-text-stroke:0px #1a1a1a;transform:scaleX(0.9661);transform-origin:0 0;">Schedule Type:</div>
<div style="left:578.30px;top:71.08px;font-family:'Liberation Sans', sans-serif;font-size:12.5px;line-height:12.5px;font-weight:normal;color:#1a1a1a;white-space:nowrap;-webkit-text-stroke:0.25px #1a1a1a;transform:scaleX(0.9889);transform-origin:0 0;">Fraction</div>
<div style="left:254px;top:99px;width:477px;height:1.2000000000000028px;background:#a3a4a1;"></div>
<div style="left:314.50px;top:114.17px;font-family:'Liberation Sans', sans-serif;font-size:12.5px;line-height:12.5px;font-weight:bold;color:#1a1a1a;white-space:nowrap;-webkit-text-stroke:0px #1a1a1a;transform:scaleX(1.0107);transform-origin:0 0;">Default day profile.</div>
<div style="left:314.50px;top:156.18px;font-family:'Liberation Sans', sans-serif;font-size:12.5px;line-height:12.5px;font-weight:normal;color:#1a1a1a;white-space:nowrap;-webkit-text-stroke:0.25px #1a1a1a;transform:scaleX(0.9721);transform-origin:0 0;">Schedule Day Name:</div>
<div style="left:440.4px;top:149.6px;width:199.30000000000007px;height:23.80000000000001px;background:#f8f9f7;border:1px solid #b9bab7;border-radius:3px;box-sizing:border-box;border-right:none"></div>
<div style="left:443.50px;top:156.18px;font-family:'Liberation Sans', sans-serif;font-size:12.5px;line-height:12.5px;font-weight:normal;color:#1a1a1a;white-space:nowrap;-webkit-text-stroke:0.25px #1a1a1a;overflow:hidden">Office Bldg Equip Default Schedule</div>
<div style="left:314.50px;top:191.48px;font-family:'Liberation Sans', sans-serif;font-size:12.5px;line-height:12.5px;font-weight:normal;color:#1a1a1a;white-space:nowrap;-webkit-text-stroke:0.25px #1a1a1a;transform:scaleX(1.0059);transform-origin:0 0;">Lower Limit:</div>
<div style="left:386px;top:185.3px;width:99.69999999999999px;height:22.899999999999977px;background:#f8f9f7;border:1px solid #b9bab7;border-radius:3px;box-sizing:border-box"></div>
<div style="left:471.3px;top:186.3px;width:1.0px;height:20.899999999999977px;background:#c4c5c2;"></div>
<div style="left:390.50px;top:191.48px;font-family:'Liberation Sans', sans-serif;font-size:12.5px;line-height:12.5px;font-weight:normal;color:#1a1a1a;white-space:nowrap;-webkit-text-stroke:0.25px #1a1a1a;">0.00</div>
<svg style="position:absolute;left:472.5px;top:188.3px;" width="10" height="17" viewBox="0 0 10 17"><polygon points="1,6 9,6 5,1.5" fill="#555"/><polygon points="1,11 9,11 5,15.5" fill="#555"/></svg>
<div style="left:506.80px;top:191.48px;font-family:'Liberation Sans', sans-serif;font-size:12.5px;line-height:12.5px;font-weight:normal;color:#1a1a1a;white-space:nowrap;-webkit-text-stroke:0.25px #1a1a1a;transform:scaleX(1.0119);transform-origin:0 0;">Upper Limit:</div>
<div style="left:579.2px;top:185.3px;width:99.39999999999998px;height:22.899999999999977px;background:#f8f9f7;border:1px solid #b9bab7;border-radius:3px;box-sizing:border-box"></div>
<div style="left:664.4px;top:186.3px;width:1.0px;height:20.899999999999977px;background:#c4c5c2;"></div>
<div style="left:583.70px;top:191.48px;font-family:'Liberation Sans', sans-serif;font-size:12.5px;line-height:12.5px;font-weight:normal;color:#1a1a1a;white-space:nowrap;-webkit-text-stroke:0.25px #1a1a1a;">1.00</div>
<svg style="position:absolute;left:665.5px;top:188.3px;" width="10" height="17" viewBox="0 0 10 17"><polygon points="1,6 9,6 5,1.5" fill="#555"/><polygon points="1,11 9,11 5,15.5" fill="#555"/></svg>
<div style="left:313px;top:238px;width:399px;height:596.5px;background:#f8faf7;border:1.5px solid #000;border-right-width:1.3px;box-sizing:border-box"></div>
<div style="left:307px;top:832.9px;width:6px;height:1.2000000000000455px;background:#000;"></div>
<div style="left:298.60px;top:828.70px;font-family:'Liberation Sans', sans-serif;font-size:12px;line-height:12px;font-weight:normal;color:#111;white-space:nowrap;-webkit-text-stroke:0.25px #111;">0</div>
<div style="left:307px;top:748.0428571428571px;width:6px;height:1.2000000000000455px;background:#000;"></div>
<div style="left:281.90px;top:743.84px;font-family:'Liberation Sans', sans-serif;font-size:12px;line-height:12px;font-weight:normal;color:#111;white-space:nowrap;-webkit-text-stroke:0.25px #111;">0.14</div>
<div style="left:307px;top:663.1857142857143px;width:6px;height:1.2000000000000455px;background:#000;"></div>
<div style="left:281.90px;top:658.99px;font-family:'Liberation Sans', sans-serif;font-size:12px;line-height:12px;font-weight:normal;color:#111;white-space:nowrap;-webkit-text-stroke:0.25px #111;">0.29</div>
<div style="left:307px;top:578.3285714285714px;width:6px;height:1.2000000000000455px;background:#000;"></div>
<div style="left:281.90px;top:574.13px;font-family:'Liberation Sans', sans-serif;font-size:12px;line-height:12px;font-weight:normal;color:#111;white-space:nowrap;-webkit-text-stroke:0.25px #111;">0.43</div>
<div style="left:307px;top:493.4714285714286px;width:6px;height:1.2000000000000455px;background:#000;"></div>
<div style="left:281.90px;top:489.27px;font-family:'Liberation Sans', sans-serif;font-size:12px;line-height:12px;font-weight:normal;color:#111;white-space:nowrap;-webkit-text-stroke:0.25px #111;">0.57</div>
<div style="left:307px;top:408.6142857142857px;width:6px;height:1.2000000000000455px;background:#000;"></div>
<div style="left:281.90px;top:404.41px;font-family:'Liberation Sans', sans-serif;font-size:12px;line-height:12px;font-weight:normal;color:#111;white-space:nowrap;-webkit-text-stroke:0.25px #111;">0.71</div>
<div style="left:307px;top:323.75714285714287px;width:6px;height:1.2000000000000455px;background:#000;"></div>
<div style="left:281.90px;top:319.56px;font-family:'Liberation Sans', sans-serif;font-size:12px;line-height:12px;font-weight:normal;color:#111;white-space:nowrap;-webkit-text-stroke:0.25px #111;">0.86</div>
<div style="left:307px;top:238.9px;width:6px;height:1.1999999999999886px;background:#000;"></div>
<div style="left:298.60px;top:234.70px;font-family:'Liberation Sans', sans-serif;font-size:12px;line-height:12px;font-weight:normal;color:#111;white-space:nowrap;-webkit-text-stroke:0.25px #111;">1</div>
<div style="left:312.5px;top:834px;width:2.0px;height:6.5px;background:#000;"></div>
<div style="left:301.80px;top:843.30px;font-family:'Liberation Sans', sans-serif;font-size:12px;line-height:12px;font-weight:normal;color:#111;white-space:nowrap;-webkit-text-stroke:0.25px #111;">0:00</div>
<div style="left:378.8333333333333px;top:834px;width:2.0px;height:6.5px;background:#000;"></div>
<div style="left:368.13px;top:843.30px;font-family:'Liberation Sans', sans-serif;font-size:12px;line-height:12px;font-weight:normal;color:#111;white-space:nowrap;-webkit-text-stroke:0.25px #111;">4:00</div>
<div style="left:445.16666666666663px;top:834px;width:2.0px;height:6.5px;background:#000;"></div>
<div style="left:434.47px;top:843.30px;font-family:'Liberation Sans', sans-serif;font-size:12px;line-height:12px;font-weight:normal;color:#111;white-space:nowrap;-webkit-text-stroke:0.25px #111;">8:00</div>
<div style="left:511.5px;top:834px;width:2.0px;height:6.5px;background:#000;"></div>
<div style="left:497.50px;top:843.30px;font-family:'Liberation Sans', sans-serif;font-size:12px;line-height:12px;font-weight:normal;color:#111;white-space:nowrap;-webkit-text-stroke:0.25px #111;">12:00</div>
<div style="left:577.8333333333333px;top:834px;width:2.0px;height:6.5px;background:#000;"></div>
<div style="left:563.83px;top:843.30px;font-family:'Liberation Sans', sans-serif;font-size:12px;line-height:12px;font-weight:normal;color:#111;white-space:nowrap;-webkit-text-stroke:0.25px #111;">16:00</div>
<div style="left:644.1666666666667px;top:834px;width:2.0px;height:6.5px;background:#000;"></div>
<div style="left:630.17px;top:843.30px;font-family:'Liberation Sans', sans-serif;font-size:12px;line-height:12px;font-weight:normal;color:#111;white-space:nowrap;-webkit-text-stroke:0.25px #111;">20:00</div>
<div style="left:710.5px;top:834px;width:2.0px;height:6.5px;background:#000;"></div>
<div style="left:696.50px;top:843.30px;font-family:'Liberation Sans', sans-serif;font-size:12px;line-height:12px;font-weight:normal;color:#111;white-space:nowrap;-webkit-text-stroke:0.25px #111;">24:00</div>
<svg style="position:absolute;left:313px;top:238px;overflow:visible" width="400" height="597" viewBox="0 0 400 597"><rect x="132.70" y="51.00" width="66.40" height="20" fill="#2400ec"/><line x1="2.30" y1="356.00" x2="133.18" y2="356.00" stroke="#000" stroke-width="2.4"/><line x1="133.18" y1="61.00" x2="198.62" y2="61.00" stroke="#000" stroke-width="2.4"/><line x1="198.62" y1="120.00" x2="214.98" y2="120.00" stroke="#000" stroke-width="2.4"/><line x1="214.98" y1="61.00" x2="280.42" y2="61.00" stroke="#000" stroke-width="2.4"/><line x1="280.42" y1="120.00" x2="296.78" y2="120.00" stroke="#000" stroke-width="2.4"/><line x1="296.78" y1="238.00" x2="329.50" y2="238.00" stroke="#000" stroke-width="2.4"/><line x1="329.50" y1="297.00" x2="362.22" y2="297.00" stroke="#000" stroke-width="2.4"/><line x1="362.22" y1="356.00" x2="394.94" y2="356.00" stroke="#000" stroke-width="2.4"/><line x1="133.18" y1="59.00" x2="133.18" y2="358.00" stroke="#000" stroke-width="2.6"/><line x1="198.62" y1="59.00" x2="198.62" y2="122.00" stroke="#000" stroke-width="2.6"/><line x1="214.98" y1="59.00" x2="214.98" y2="122.00" stroke="#000" stroke-width="2.6"/><line x1="280.42" y1="59.00" x2="280.42" y2="122.00" stroke="#000" stroke-width="2.6"/><line x1="296.78" y1="118.00" x2="296.78" y2="240.00" stroke="#000" stroke-width="2.6"/><line x1="329.50" y1="236.00" x2="329.50" y2="299.00" stroke="#000" stroke-width="2.6"/><line x1="362.22" y1="295.00" x2="362.22" y2="358.00" stroke="#000" stroke-width="2.6"/><line x1="149.7" y1="-1" x2="149.7" y2="49.5" stroke="#ff0a0a" stroke-width="3.6"/><polyline points="138.2,11 149.7,-0.5 161.2,11" fill="none" stroke="#ff0a0a" stroke-width="3.6"/><line x1="149.7" y1="73" x2="149.7" y2="124" stroke="#ff0a0a" stroke-width="3.6"/><polyline points="138.2,112.5 149.7,124 161.2,112.5" fill="none" stroke="#ff0a0a" stroke-width="3.6"/></svg>
<div style="left:476.60px;top:221.58px;font-family:'Liberation Sans', sans-serif;font-size:12.5px;line-height:12.5px;font-weight:normal;color:#1a1a1a;white-space:nowrap;-webkit-text-stroke:0.25px #1a1a1a;transform:scaleX(0.9916);transform-origin:0 0;">Type value and press enter:</div>
<div style="left:629px;top:213.8px;width:84.79999999999995px;height:26.599999999999994px;background:#f8faf7;border:3.5px solid #ff0000;box-sizing:border-box"></div>
<div style="left:706px;top:219px;width:3.7999999999999545px;height:17px;background:#e6e8e4;"></div>
<div style="left:682.50px;top:222.98px;font-family:'Liberation Mono', monospace;font-size:12.5px;line-height:12.5px;font-weight:normal;color:#222;white-space:nowrap;-webkit-text-stroke:0.25px #222;">0.9</div>
<div style="left:479px;top:325.2px;width:191.79999999999995px;height:22.5px;background:#fdfde0;border:1px solid #000;box-sizing:border-box;box-shadow:2px 3px 8px rgba(0,0,0,0.25)"></div>
<div style="left:483.50px;top:330.78px;font-family:'Liberation Sans', sans-serif;font-size:12.5px;line-height:12.5px;font-weight:normal;color:#1a1a1a;white-space:nowrap;-webkit-text-stroke:0.25px #1a1a1a;">0.9 - Double click to cut segment</div>
<div style="left:364.4px;top:873.5px;width:60.10000000000002px;height:23.0px;background:linear-gradient(#93b5e2,#5d89c0);border:1px solid #4f6f9c;border-radius:4px;box-sizing:border-box"></div>
<div style="left:376.50px;top:879.67px;font-family:'Liberation Sans', sans-serif;font-size:12.5px;line-height:12.5px;font-weight:normal;color:#1a1a1a;white-space:nowrap;-webkit-text-stroke:0.25px #1a1a1a;transform:scaleX(1.0221);transform-origin:0 0;">Hourly</div>
<div style="left:445.5px;top:873.5px;width:84.10000000000002px;height:23.0px;background:linear-gradient(#f3f3f1,#dcdddb);border:1px solid #a7a8a5;border-radius:4px;box-sizing:border-box"></div>
<div style="left:456.50px;top:879.67px;font-family:'Liberation Sans', sans-serif;font-size:12.5px;line-height:12.5px;font-weight:normal;color:#1a1a1a;white-space:nowrap;-webkit-text-stroke:0.25px #1a1a1a;transform:scaleX(1.0065);transform-origin:0 0;">15 Minutes</div>
<div style="left:550.2px;top:873.5px;width:71.39999999999998px;height:23.0px;background:linear-gradient(#f3f3f1,#dcdddb);border:1px solid #a7a8a5;border-radius:4px;box-sizing:border-box"></div>
<div style="left:561.80px;top:879.67px;font-family:'Liberation Sans', sans-serif;font-size:12.5px;line-height:12.5px;font-weight:normal;color:#1a1a1a;white-space:nowrap;-webkit-text-stroke:0.25px #1a1a1a;transform:scaleX(1.0230);transform-origin:0 0;">1 Minute</div>
<div style="left:314px;top:907.3px;width:396.5px;height:98.40000000000009px;background:#f8faf7;border:1.3px solid #000;box-sizing:border-box"></div>
<svg style="position:absolute;left:314px;top:907px;" width="397" height="99" viewBox="0 0 397 99"><polyline points="0.50,59.38 132.08,59.38 132.08,11.48 197.52,11.48 197.52,21.06 213.88,21.06 213.88,11.48 279.32,11.48 279.32,21.06 295.68,21.06 295.68,40.22 328.40,40.22 328.40,49.80 361.12,49.80 361.12,59.38 394.30,59.38" fill="none" stroke="#000" stroke-width="3.2" stroke-linejoin="miter"/></svg>
<div style="left:741px;top:54px;width:2px;height:963px;background:#3a4141;"></div>
<div style="left:743px;top:54px;width:266.5px;height:22px;background:#eeefec;"></div>
<div style="left:865.90px;top:57.08px;font-family:'Liberation Sans', sans-serif;font-size:12.5px;line-height:12.5px;font-weight:normal;color:#1a1a1a;white-space:nowrap;-webkit-text-stroke:0.25px #1a1a1a;">Jan</div>
<div style="left:743px;top:76px;width:266.5px;height:21px;background:#f6f7f5;"></div>
<div style="left:758.25px;top:80.67px;font-family:'Liberation Sans', sans-serif;font-size:12.5px;line-height:12.5px;font-weight:normal;color:#ff1a1a;white-space:nowrap;-webkit-text-stroke:0.25px #ff1a1a;">S</div>
<div style="left:795.05px;top:80.67px;font-family:'Liberation Sans', sans-serif;font-size:12.5px;line-height:12.5px;font-weight:normal;color:#1a1a1a;white-space:nowrap;-webkit-text-stroke:0.25px #1a1a1a;">M</div>
<div style="left:834.35px;top:80.67px;font-family:'Liberation Sans', sans-serif;font-size:12.5px;line-height:12.5px;font-weight:normal;color:#1a1a1a;white-space:nowrap;-webkit-text-stroke:0.25px #1a1a1a;">T</div>
<div style="left:870.15px;top:80.67px;font-family:'Liberation Sans', sans-serif;font-size:12.5px;line-height:12.5px;font-weight:normal;color:#1a1a1a;white-space:nowrap;-webkit-text-stroke:0.25px #1a1a1a;">W</div>
<div style="left:910.15px;top:80.67px;font-family:'Liberation Sans', sans-serif;font-size:12.5px;line-height:12.5px;font-weight:normal;color:#1a1a1a;white-space:nowrap;-webkit-text-stroke:0.25px #1a1a1a;">T</div>
<div style="left:948.05px;top:80.67px;font-family:'Liberation Sans', sans-serif;font-size:12.5px;line-height:12.5px;font-weight:normal;color:#1a1a1a;white-space:nowrap;-webkit-text-stroke:0.25px #1a1a1a;">F</div>
<div style="left:985.90px;top:80.67px;font-family:'Liberation Sans', sans-serif;font-size:12.5px;line-height:12.5px;font-weight:normal;color:#ff1a1a;white-space:nowrap;-webkit-text-stroke:0.25px #ff1a1a;">S</div>
<div style="left:743px;top:97px;width:266.5px;height:1px;background:#000;"></div>
<div style="left:744.0px;top:98px;width:36.799999999999955px;height:20px;background:#e6e7e4;"></div>
<div style="left:781.8px;top:98px;width:36.90000000000009px;height:20px;background:#e6e7e4;"></div>
<div style="left:819.7px;top:98px;width:36.89999999999998px;height:20px;background:#e6e7e4;"></div>
<div style="left:857.6px;top:98px;width:36.89999999999998px;height:20px;background:#e6e7e4;"></div>
<div style="left:895.5px;top:98px;width:36.89999999999998px;height:20px;background:#e6e7e4;"></div>
<div style="left:933.4px;top:98px;width:36.89999999999998px;height:20px;background:#e6e7e4;"></div>
<div style="left:971.3px;top:98px;width:38.0px;height:20px;background:#e6e7e4;"></div>
<div style="left:743px;top:118px;width:266.5px;height:1px;background:#000;"></div>
<div style="left:744.0px;top:119px;width:36.799999999999955px;height:20px;background:#aa4499;"></div>
<div style="left:758.90px;top:123.48px;font-family:'Liberation Sans', sans-serif;font-size:12.5px;line-height:12.5px;font-weight:normal;color:#141414;white-space:nowrap;-webkit-text-stroke:0.25px #141414;">1</div>
<div style="left:781.8px;top:119px;width:36.90000000000009px;height:20px;background:#88ccee;"></div>
<div style="left:796.75px;top:123.48px;font-family:'Liberation Sans', sans-serif;font-size:12.5px;line-height:12.5px;font-weight:normal;color:#141414;white-space:nowrap;-webkit-text-stroke:0.25px #141414;">2</div>
<div style="left:819.7px;top:119px;width:36.89999999999998px;height:20px;background:#88ccee;"></div>
<div style="left:834.65px;top:123.48px;font-family:'Liberation Sans', sans-serif;font-size:12.5px;line-height:12.5px;font-weight:normal;color:#141414;white-space:nowrap;-webkit-text-stroke:0.25px #141414;">3</div>
<div style="left:857.6px;top:119px;width:36.89999999999998px;height:20px;background:#88ccee;"></div>
<div style="left:872.55px;top:123.48px;font-family:'Liberation Sans', sans-serif;font-size:12.5px;line-height:12.5px;font-weight:normal;color:#141414;white-space:nowrap;-webkit-text-stroke:0.25px #141414;">4</div>
<div style="left:895.5px;top:119px;width:36.89999999999998px;height:20px;background:#88ccee;"></div>
<div style="left:910.45px;top:123.48px;font-family:'Liberation Sans', sans-serif;font-size:12.5px;line-height:12.5px;font-weight:normal;color:#141414;white-space:nowrap;-webkit-text-stroke:0.25px #141414;">5</div>
<div style="left:933.4px;top:119px;width:36.89999999999998px;height:20px;background:#88ccee;"></div>
<div style="left:948.35px;top:123.48px;font-family:'Liberation Sans', sans-serif;font-size:12.5px;line-height:12.5px;font-weight:normal;color:#141414;white-space:nowrap;-webkit-text-stroke:0.25px #141414;">6</div>
<div style="left:971.3px;top:119px;width:38.0px;height:20px;background:#332288;"></div>
<div style="left:986.55px;top:123.48px;font-family:'Liberation Sans', sans-serif;font-size:12.5px;line-height:12.5px;font-weight:normal;color:#141414;white-space:nowrap;-webkit-text-stroke:0.25px #141414;">7</div>
<div style="left:743px;top:139px;width:266.5px;height:1px;background:#000;"></div>
<div style="left:744.0px;top:140px;width:36.799999999999955px;height:20px;background:#aa4499;"></div>
<div style="left:758.90px;top:144.48px;font-family:'Liberation Sans', sans-serif;font-size:12.5px;line-height:12.5px;font-weight:normal;color:#141414;white-space:nowrap;-webkit-text-stroke:0.25px #141414;">8</div>
<div style="left:781.8px;top:140px;width:36.90000000000009px;height:20px;background:#88ccee;"></div>
<div style="left:796.75px;top:144.48px;font-family:'Liberation Sans', sans-serif;font-size:12.5px;line-height:12.5px;font-weight:normal;color:#141414;white-space:nowrap;-webkit-text-stroke:0.25px #141414;">9</div>
<div style="left:819.7px;top:140px;width:36.89999999999998px;height:20px;background:#88ccee;"></div>
<div style="left:831.20px;top:144.48px;font-family:'Liberation Sans', sans-serif;font-size:12.5px;line-height:12.5px;font-weight:normal;color:#141414;white-space:nowrap;-webkit-text-stroke:0.25px #141414;">10</div>
<div style="left:857.6px;top:140px;width:36.89999999999998px;height:20px;background:#88ccee;"></div>
<div style="left:869.55px;top:144.48px;font-family:'Liberation Sans', sans-serif;font-size:12.5px;line-height:12.5px;font-weight:normal;color:#141414;white-space:nowrap;-webkit-text-stroke:0.25px #141414;">11</div>
<div style="left:895.5px;top:140px;width:36.89999999999998px;height:20px;background:#88ccee;"></div>
<div style="left:907.00px;top:144.48px;font-family:'Liberation Sans', sans-serif;font-size:12.5px;line-height:12.5px;font-weight:normal;color:#141414;white-space:nowrap;-webkit-text-stroke:0.25px #141414;">12</div>
<div style="left:933.4px;top:140px;width:36.89999999999998px;height:20px;background:#88ccee;"></div>
<div style="left:944.90px;top:144.48px;font-family:'Liberation Sans', sans-serif;font-size:12.5px;line-height:12.5px;font-weight:normal;color:#141414;white-space:nowrap;-webkit-text-stroke:0.25px #141414;">13</div>
<div style="left:971.3px;top:140px;width:38.0px;height:20px;background:#332288;"></div>
<div style="left:983.10px;top:144.48px;font-family:'Liberation Sans', sans-serif;font-size:12.5px;line-height:12.5px;font-weight:normal;color:#141414;white-space:nowrap;-webkit-text-stroke:0.25px #141414;">14</div>
<div style="left:743px;top:160px;width:266.5px;height:1px;background:#000;"></div>
<div style="left:744.0px;top:161px;width:36.799999999999955px;height:20px;background:#aa4499;"></div>
<div style="left:755.45px;top:165.48px;font-family:'Liberation Sans', sans-serif;font-size:12.5px;line-height:12.5px;font-weight:normal;color:#141414;white-space:nowrap;-webkit-text-stroke:0.25px #141414;">15</div>
<div style="left:781.8px;top:161px;width:36.90000000000009px;height:20px;background:#88ccee;"></div>
<div style="left:793.30px;top:165.48px;font-family:'Liberation Sans', sans-serif;font-size:12.5px;line-height:12.5px;font-weight:normal;color:#141414;white-space:nowrap;-webkit-text-stroke:0.25px #141414;">16</div>
<div style="left:819.7px;top:161px;width:36.89999999999998px;height:20px;background:#88ccee;"></div>
<div style="left:831.20px;top:165.48px;font-family:'Liberation Sans', sans-serif;font-size:12.5px;line-height:12.5px;font-weight:normal;color:#141414;white-space:nowrap;-webkit-text-stroke:0.25px #141414;">17</div>
<div style="left:857.6px;top:161px;width:36.89999999999998px;height:20px;background:#88ccee;"></div>
<div style="left:869.10px;top:165.48px;font-family:'Liberation Sans', sans-serif;font-size:12.5px;line-height:12.5px;font-weight:normal;color:#141414;white-space:nowrap;-webkit-text-stroke:0.25px #141414;">18</div>
<div style="left:895.5px;top:161px;width:36.89999999999998px;height:20px;background:#88ccee;"></div>
<div style="left:907.00px;top:165.48px;font-family:'Liberation Sans', sans-serif;font-size:12.5px;line-height:12.5px;font-weight:normal;color:#141414;white-space:nowrap;-webkit-text-stroke:0.25px #141414;">19</div>
<div style="left:933.4px;top:161px;width:36.89999999999998px;height:20px;background:#88ccee;"></div>
<div style="left:944.90px;top:165.48px;font-family:'Liberation Sans', sans-serif;font-size:12.5px;line-height:12.5px;font-weight:normal;color:#141414;white-space:nowrap;-webkit-text-stroke:0.25px #141414;">20</div>
<div style="left:971.3px;top:161px;width:38.0px;height:20px;background:#332288;"></div>
<div style="left:983.10px;top:165.48px;font-family:'Liberation Sans', sans-serif;font-size:12.5px;line-height:12.5px;font-weight:normal;color:#141414;white-space:nowrap;-webkit-text-stroke:0.25px #141414;">21</div>
<div style="left:743px;top:181px;width:266.5px;height:1px;background:#000;"></div>
<div style="left:744.0px;top:182px;width:36.799999999999955px;height:20px;background:#aa4499;"></div>
<div style="left:755.45px;top:186.48px;font-family:'Liberation Sans', sans-serif;font-size:12.5px;line-height:12.5px;font-weight:normal;color:#141414;white-space:nowrap;-webkit-text-stroke:0.25px #141414;">22</div>
<div style="left:781.8px;top:182px;width:36.90000000000009px;height:20px;background:#88ccee;"></div>
<div style="left:793.30px;top:186.48px;font-family:'Liberation Sans', sans-serif;font-size:12.5px;line-height:12.5px;font-weight:normal;color:#141414;white-space:nowrap;-webkit-text-stroke:0.25px #141414;">23</div>
<div style="left:819.7px;top:182px;width:36.89999999999998px;height:20px;background:#88ccee;"></div>
<div style="left:831.20px;top:186.48px;font-family:'Liberation Sans', sans-serif;font-size:12.5px;line-height:12.5px;font-weight:normal;color:#141414;white-space:nowrap;-webkit-text-stroke:0.25px #141414;">24</div>
<div style="left:857.6px;top:182px;width:36.89999999999998px;height:20px;background:#88ccee;"></div>
<div style="left:869.10px;top:186.48px;font-family:'Liberation Sans', sans-serif;font-size:12.5px;line-height:12.5px;font-weight:normal;color:#141414;white-space:nowrap;-webkit-text-stroke:0.25px #141414;">25</div>
<div style="left:895.5px;top:182px;width:36.89999999999998px;height:20px;background:#88ccee;"></div>
<div style="left:907.00px;top:186.48px;font-family:'Liberation Sans', sans-serif;font-size:12.5px;line-height:12.5px;font-weight:normal;color:#141414;white-space:nowrap;-webkit-text-stroke:0.25px #141414;">26</div>
<div style="left:933.4px;top:182px;width:36.89999999999998px;height:20px;background:#88ccee;"></div>
<div style="left:944.90px;top:186.48px;font-family:'Liberation Sans', sans-serif;font-size:12.5px;line-height:12.5px;font-weight:normal;color:#141414;white-space:nowrap;-webkit-text-stroke:0.25px #141414;">27</div>
<div style="left:971.3px;top:182px;width:38.0px;height:20px;background:#332288;"></div>
<div style="left:983.10px;top:186.48px;font-family:'Liberation Sans', sans-serif;font-size:12.5px;line-height:12.5px;font-weight:normal;color:#141414;white-space:nowrap;-webkit-text-stroke:0.25px #141414;">28</div>
<div style="left:743px;top:202px;width:266.5px;height:1px;background:#000;"></div>
<div style="left:744.0px;top:203px;width:36.799999999999955px;height:20px;background:#aa4499;"></div>
<div style="left:755.45px;top:207.48px;font-family:'Liberation Sans', sans-serif;font-size:12.5px;line-height:12.5px;font-weight:normal;color:#141414;white-space:nowrap;-webkit-text-stroke:0.25px #141414;">29</div>
<div style="left:781.8px;top:203px;width:36.90000000000009px;height:20px;background:#88ccee;"></div>
<div style="left:793.30px;top:207.48px;font-family:'Liberation Sans', sans-serif;font-size:12.5px;line-height:12.5px;font-weight:normal;color:#141414;white-space:nowrap;-webkit-text-stroke:0.25px #141414;">30</div>
<div style="left:819.7px;top:203px;width:36.89999999999998px;height:20px;background:#88ccee;"></div>
<div style="left:831.20px;top:207.48px;font-family:'Liberation Sans', sans-serif;font-size:12.5px;line-height:12.5px;font-weight:normal;color:#141414;white-space:nowrap;-webkit-text-stroke:0.25px #141414;">31</div>
<div style="left:857.6px;top:203px;width:36.89999999999998px;height:20px;background:#e6e7e4;"></div>
<div style="left:895.5px;top:203px;width:36.89999999999998px;height:20px;background:#e6e7e4;"></div>
<div style="left:933.4px;top:203px;width:36.89999999999998px;height:20px;background:#e6e7e4;"></div>
<div style="left:971.3px;top:203px;width:38.0px;height:20px;background:#e6e7e4;"></div>
<div style="left:743px;top:223px;width:266.5px;height:1px;background:#000;"></div>
<div style="left:780.8px;top:98px;width:1.2999999999999545px;height:126px;background:#000;"></div>
<div style="left:818.7px;top:98px;width:1.2999999999999545px;height:126px;background:#000;"></div>
<div style="left:856.6px;top:98px;width:1.2999999999999545px;height:126px;background:#000;"></div>
<div style="left:894.5px;top:98px;width:1.2999999999999545px;height:126px;background:#000;"></div>
<div style="left:932.4px;top:98px;width:1.2999999999999545px;height:126px;background:#000;"></div>
<div style="left:970.3px;top:98px;width:1.2999999999999545px;height:126px;background:#000;"></div>
<div style="left:743px;top:98px;width:1.2000000000000455px;height:126px;background:#000;"></div>
<div style="left:743px;top:224px;width:266.5px;height:28px;background:#eeefec;"></div>
<div style="left:865.25px;top:233.08px;font-family:'Liberation Sans', sans-serif;font-size:12.5px;line-height:12.5px;font-weight:normal;color:#1a1a1a;white-space:nowrap;-webkit-text-stroke:0.25px #1a1a1a;">Feb</div>
<div style="left:743px;top:252px;width:266.5px;height:21px;background:#f6f7f5;"></div>
<div style="left:758.25px;top:256.68px;font-family:'Liberation Sans', sans-serif;font-size:12.5px;line-height:12.5px;font-weight:normal;color:#ff1a1a;white-space:nowrap;-webkit-text-stroke:0.25px #ff1a1a;">S</div>
<div style="left:795.05px;top:256.68px;font-family:'Liberation Sans', sans-serif;font-size:12.5px;line-height:12.5px;font-weight:normal;color:#1a1a1a;white-space:nowrap;-webkit-text-stroke:0.25px #1a1a1a;">M</div>
<div style="left:834.35px;top:256.68px;font-family:'Liberation Sans', sans-serif;font-size:12.5px;line-height:12.5px;font-weight:normal;color:#1a1a1a;white-space:nowrap;-webkit-text-stroke:0.25px #1a1a1a;">T</div>
<div style="left:870.15px;top:256.68px;font-family:'Liberation Sans', sans-serif;font-size:12.5px;line-height:12.5px;font-weight:normal;color:#1a1a1a;white-space:nowrap;-webkit-text-stroke:0.25px #1a1a1a;">W</div>
<div style="left:910.15px;top:256.68px;font-family:'Liberation Sans', sans-serif;font-size:12.5px;line-height:12.5px;font-weight:normal;color:#1a1a1a;white-space:nowrap;-webkit-text-stroke:0.25px #1a1a1a;">T</div>
<div style="left:948.05px;top:256.68px;font-family:'Liberation Sans', sans-serif;font-size:12.5px;line-height:12.5px;font-weight:normal;color:#1a1a1a;white-space:nowrap;-webkit-text-stroke:0.25px #1a1a1a;">F</div>
<div style="left:985.90px;top:256.68px;font-family:'Liberation Sans', sans-serif;font-size:12.5px;line-height:12.5px;font-weight:normal;color:#ff1a1a;white-space:nowrap;-webkit-text-stroke:0.25px #ff1a1a;">S</div>
<div style="left:743px;top:273px;width:266.5px;height:1px;background:#000;"></div>
<div style="left:744.0px;top:274px;width:36.799999999999955px;height:20px;background:#e6e7e4;"></div>
<div style="left:781.8px;top:274px;width:36.90000000000009px;height:20px;background:#e6e7e4;"></div>
<div style="left:819.7px;top:274px;width:36.89999999999998px;height:20px;background:#e6e7e4;"></div>
<div style="left:857.6px;top:274px;width:36.89999999999998px;height:20px;background:#88ccee;"></div>
<div style="left:872.55px;top:278.48px;font-family:'Liberation Sans', sans-serif;font-size:12.5px;line-height:12.5px;font-weight:normal;color:#141414;white-space:nowrap;-webkit-text-stroke:0.25px #141414;">1</div>
<div style="left:895.5px;top:274px;width:36.89999999999998px;height:20px;background:#88ccee;"></div>
<div style="left:910.45px;top:278.48px;font-family:'Liberation Sans', sans-serif;font-size:12.5px;line-height:12.5px;font-weight:normal;color:#141414;white-space:nowrap;-webkit-text-stroke:0.25px #141414;">2</div>
<div style="left:933.4px;top:274px;width:36.89999999999998px;height:20px;background:#88ccee;"></div>
<div style="left:948.35px;top:278.48px;font-family:'Liberation Sans', sans-serif;font-size:12.5px;line-height:12.5px;font-weight:normal;color:#141414;white-space:nowrap;-webkit-text-stroke:0.25px #141414;">3</div>
<div style="left:971.3px;top:274px;width:38.0px;height:20px;background:#332288;"></div>
<div style="left:986.55px;top:278.48px;font-family:'Liberation Sans', sans-serif;font-size:12.5px;line-height:12.5px;font-weight:normal;color:#141414;white-space:nowrap;-webkit-text-stroke:0.25px #141414;">4</div>
<div style="left:743px;top:294px;width:266.5px;height:1px;background:#000;"></div>
<div style="left:744.0px;top:295px;width:36.799999999999955px;height:20px;background:#aa4499;"></div>
<div style="left:758.90px;top:299.48px;font-family:'Liberation Sans', sans-serif;font-size:12.5px;line-height:12.5px;font-weight:normal;color:#141414;white-space:nowrap;-webkit-text-stroke:0.25px #141414;">5</div>
<div style="left:781.8px;top:295px;width:36.90000000000009px;height:20px;background:#88ccee;"></div>
<div style="left:796.75px;top:299.48px;font-family:'Liberation Sans', sans-serif;font-size:12.5px;line-height:12.5px;font-weight:normal;color:#141414;white-space:nowrap;-webkit-text-stroke:0.25px #141414;">6</div>
<div style="left:819.7px;top:295px;width:36.89999999999998px;height:20px;background:#88ccee;"></div>
<div style="left:834.65px;top:299.48px;font-family:'Liberation Sans', sans-serif;font-size:12.5px;line-height:12.5px;font-weight:normal;color:#141414;white-space:nowrap;-webkit-text-stroke:0.25px #141414;">7</div>
<div style="left:857.6px;top:295px;width:36.89999999999998px;height:20px;background:#88ccee;"></div>
<div style="left:872.55px;top:299.48px;font-family:'Liberation Sans', sans-serif;font-size:12.5px;line-height:12.5px;font-weight:normal;color:#141414;white-space:nowrap;-webkit-text-stroke:0.25px #141414;">8</div>
<div style="left:895.5px;top:295px;width:36.89999999999998px;height:20px;background:#88ccee;"></div>
<div style="left:910.45px;top:299.48px;font-family:'Liberation Sans', sans-serif;font-size:12.5px;line-height:12.5px;font-weight:normal;color:#141414;white-space:nowrap;-webkit-text-stroke:0.25px #141414;">9</div>
<div style="left:933.4px;top:295px;width:36.89999999999998px;height:20px;background:#88ccee;"></div>
<div style="left:944.90px;top:299.48px;font-family:'Liberation Sans', sans-serif;font-size:12.5px;line-height:12.5px;font-weight:normal;color:#141414;white-space:nowrap;-webkit-text-stroke:0.25px #141414;">10</div>
<div style="left:971.3px;top:295px;width:38.0px;height:20px;background:#332288;"></div>
<div style="left:983.55px;top:299.48px;font-family:'Liberation Sans', sans-serif;font-size:12.5px;line-height:12.5px;font-weight:normal;color:#141414;white-space:nowrap;-webkit-text-stroke:0.25px #141414;">11</div>
<div style="left:743px;top:315px;width:266.5px;height:1px;background:#000;"></div>
<div style="left:744.0px;top:316px;width:36.799999999999955px;height:20px;background:#aa4499;"></div>
<div style="left:755.45px;top:320.48px;font-family:'Liberation Sans', sans-serif;font-size:12.5px;line-height:12.5px;font-weight:normal;color:#141414;white-space:nowrap;-webkit-text-stroke:0.25px #141414;">12</div>
<div style="left:781.8px;top:316px;width:36.90000000000009px;height:20px;background:#88ccee;"></div>
<div style="left:793.30px;top:320.48px;font-family:'Liberation Sans', sans-serif;font-size:12.5px;line-height:12.5px;font-weight:normal;color:#141414;white-space:nowrap;-webkit-text-stroke:0.25px #141414;">13</div>
<div style="left:819.7px;top:316px;width:36.89999999999998px;height:20px;background:#88ccee;"></div>
<div style="left:831.20px;top:320.48px;font-family:'Liberation Sans', sans-serif;font-size:12.5px;line-height:12.5px;font-weight:normal;color:#141414;white-space:nowrap;-webkit-text-stroke:0.25px #141414;">14</div>
<div style="left:857.6px;top:316px;width:36.89999999999998px;height:20px;background:#88ccee;"></div>
<div style="left:869.10px;top:320.48px;font-family:'Liberation Sans', sans-serif;font-size:12.5px;line-height:12.5px;font-weight:normal;color:#141414;white-space:nowrap;-webkit-text-stroke:0.25px #141414;">15</div>
<div style="left:895.5px;top:316px;width:36.89999999999998px;height:20px;background:#88ccee;"></div>
<div style="left:907.00px;top:320.48px;font-family:'Liberation Sans', sans-serif;font-size:12.5px;line-height:12.5px;font-weight:normal;color:#141414;white-space:nowrap;-webkit-text-stroke:0.25px #141414;">16</div>
<div style="left:933.4px;top:316px;width:36.89999999999998px;height:20px;background:#88ccee;"></div>
<div style="left:944.90px;top:320.48px;font-family:'Liberation Sans', sans-serif;font-size:12.5px;line-height:12.5px;font-weight:normal;color:#141414;white-space:nowrap;-webkit-text-stroke:0.25px #141414;">17</div>
<div style="left:971.3px;top:316px;width:38.0px;height:20px;background:#332288;"></div>
<div style="left:983.10px;top:320.48px;font-family:'Liberation Sans', sans-serif;font-size:12.5px;line-height:12.5px;font-weight:normal;color:#141414;white-space:nowrap;-webkit-text-stroke:0.25px #141414;">18</div>
<div style="left:743px;top:336px;width:266.5px;height:1px;background:#000;"></div>
<div style="left:744.0px;top:337px;width:36.799999999999955px;height:20px;background:#aa4499;"></div>
<div style="left:755.45px;top:341.48px;font-family:'Liberation Sans', sans-serif;font-size:12.5px;line-height:12.5px;font-weight:normal;color:#141414;white-space:nowrap;-webkit-text-stroke:0.25px #141414;">19</div>
<div style="left:781.8px;top:337px;width:36.90000000000009px;height:20px;background:#88ccee;"></div>
<div style="left:793.30px;top:341.48px;font-family:'Liberation Sans', sans-serif;font-size:12.5px;line-height:12.5px;font-weight:normal;color:#141414;white-space:nowrap;-webkit-text-stroke:0.25px #141414;">20</div>
<div style="left:819.7px;top:337px;width:36.89999999999998px;height:20px;background:#88ccee;"></div>
<div style="left:831.20px;top:341.48px;font-family:'Liberation Sans', sans-serif;font-size:12.5px;line-height:12.5px;font-weight:normal;color:#141414;white-space:nowrap;-webkit-text-stroke:0.25px #141414;">21</div>
<div style="left:857.6px;top:337px;width:36.89999999999998px;height:20px;background:#88ccee;"></div>
<div style="left:869.10px;top:341.48px;font-family:'Liberation Sans', sans-serif;font-size:12.5px;line-height:12.5px;font-weight:normal;color:#141414;white-space:nowrap;-webkit-text-stroke:0.25px #141414;">22</div>
<div style="left:895.5px;top:337px;width:36.89999999999998px;height:20px;background:#88ccee;"></div>
<div style="left:907.00px;top:341.48px;font-family:'Liberation Sans', sans-serif;font-size:12.5px;line-height:12.5px;font-weight:normal;color:#141414;white-space:nowrap;-webkit-text-stroke:0.25px #141414;">23</div>
<div style="left:933.4px;top:337px;width:36.89999999999998px;height:20px;background:#88ccee;"></div>
<div style="left:944.90px;top:341.48px;font-family:'Liberation Sans', sans-serif;font-size:12.5px;line-height:12.5px;font-weight:normal;color:#141414;white-space:nowrap;-webkit-text-stroke:0.25px #141414;">24</div>
<div style="left:971.3px;top:337px;width:38.0px;height:20px;background:#332288;"></div>
<div style="left:983.10px;top:341.48px;font-family:'Liberation Sans', sans-serif;font-size:12.5px;line-height:12.5px;font-weight:normal;color:#141414;white-space:nowrap;-webkit-text-stroke:0.25px #141414;">25</div>
<div style="left:743px;top:357px;width:266.5px;height:1px;background:#000;"></div>
<div style="left:744.0px;top:358px;width:36.799999999999955px;height:20px;background:#aa4499;"></div>
<div style="left:755.45px;top:362.48px;font-family:'Liberation Sans', sans-serif;font-size:12.5px;line-height:12.5px;font-weight:normal;color:#141414;white-space:nowrap;-webkit-text-stroke:0.25px #141414;">26</div>
<div style="left:781.8px;top:358px;width:36.90000000000009px;height:20px;background:#88ccee;"></div>
<div style="left:793.30px;top:362.48px;font-family:'Liberation Sans', sans-serif;font-size:12.5px;line-height:12.5px;font-weight:normal;color:#141414;white-space:nowrap;-webkit-text-stroke:0.25px #141414;">27</div>
<div style="left:819.7px;top:358px;width:36.89999999999998px;height:20px;background:#88ccee;"></div>
<div style="left:831.20px;top:362.48px;font-family:'Liberation Sans', sans-serif;font-size:12.5px;line-height:12.5px;font-weight:normal;color:#141414;white-space:nowrap;-webkit-text-stroke:0.25px #141414;">28</div>
<div style="left:857.6px;top:358px;width:36.89999999999998px;height:20px;background:#e6e7e4;"></div>
<div style="left:895.5px;top:358px;width:36.89999999999998px;height:20px;background:#e6e7e4;"></div>
<div style="left:933.4px;top:358px;width:36.89999999999998px;height:20px;background:#e6e7e4;"></div>
<div style="left:971.3px;top:358px;width:38.0px;height:20px;background:#e6e7e4;"></div>
<div style="left:743px;top:378px;width:266.5px;height:1px;background:#000;"></div>
<div style="left:744.0px;top:379px;width:36.799999999999955px;height:20px;background:#e6e7e4;"></div>
<div style="left:781.8px;top:379px;width:36.90000000000009px;height:20px;background:#e6e7e4;"></div>
<div style="left:819.7px;top:379px;width:36.89999999999998px;height:20px;background:#e6e7e4;"></div>
<div style="left:857.6px;top:379px;width:36.89999999999998px;height:20px;background:#e6e7e4;"></div>
<div style="left:895.5px;top:379px;width:36.89999999999998px;height:20px;background:#e6e7e4;"></div>
<div style="left:933.4px;top:379px;width:36.89999999999998px;height:20px;background:#e6e7e4;"></div>
<div style="left:971.3px;top:379px;width:38.0px;height:20px;background:#e6e7e4;"></div>
<div style="left:743px;top:399px;width:266.5px;height:1px;background:#000;"></div>
<div style="left:780.8px;top:274px;width:1.2999999999999545px;height:126px;background:#000;"></div>
<div style="left:818.7px;top:274px;width:1.2999999999999545px;height:126px;background:#000;"></div>
<div style="left:856.6px;top:274px;width:1.2999999999999545px;height:126px;background:#000;"></div>
<div style="left:894.5px;top:274px;width:1.2999999999999545px;height:126px;background:#000;"></div>
<div style="left:932.4px;top:274px;width:1.2999999999999545px;height:126px;background:#000;"></div>
<div style="left:970.3px;top:274px;width:1.2999999999999545px;height:126px;background:#000;"></div>
<div style="left:743px;top:274px;width:1.2000000000000455px;height:126px;background:#000;"></div>
<div style="left:743px;top:400px;width:266.5px;height:28px;background:#eeefec;"></div>
<div style="left:865.25px;top:409.07px;font-family:'Liberation Sans', sans-serif;font-size:12.5px;line-height:12.5px;font-weight:normal;color:#1a1a1a;white-space:nowrap;-webkit-text-stroke:0.25px #1a1a1a;">Mar</div>
<div style="left:743px;top:428px;width:266.5px;height:21px;background:#f6f7f5;"></div>
<div style="left:758.25px;top:432.68px;font-family:'Liberation Sans', sans-serif;font-size:12.5px;line-height:12.5px;font-weight:normal;color:#ff1a1a;white-space:nowrap;-webkit-text-stroke:0.25px #ff1a1a;">S</div>
<div style="left:795.05px;top:432.68px;font-family:'Liberation Sans', sans-serif;font-size:12.5px;line-height:12.5px;font-weight:normal;color:#1a1a1a;white-space:nowrap;-webkit-text-stroke:0.25px #1a1a1a;">M</div>
<div style="left:834.35px;top:432.68px;font-family:'Liberation Sans', sans-serif;font-size:12.5px;line-height:12.5px;font-weight:normal;color:#1a1a1a;white-space:nowrap;-webkit-text-stroke:0.25px #1a1a1a;">T</div>
<div style="left:870.15px;top:432.68px;font-family:'Liberation Sans', sans-serif;font-size:12.5px;line-height:12.5px;font-weight:normal;color:#1a1a1a;white-space:nowrap;-webkit-text-stroke:0.25px #1a1a1a;">W</div>
<div style="left:910.15px;top:432.68px;font-family:'Liberation Sans', sans-serif;font-size:12.5px;line-height:12.5px;font-weight:normal;color:#1a1a1a;white-space:nowrap;-webkit-text-stroke:0.25px #1a1a1a;">T</div>
<div style="left:948.05px;top:432.68px;font-family:'Liberation Sans', sans-serif;font-size:12.5px;line-height:12.5px;font-weight:normal;color:#1a1a1a;white-space:nowrap;-webkit-text-stroke:0.25px #1a1a1a;">F</div>
<div style="left:985.90px;top:432.68px;font-family:'Liberation Sans', sans-serif;font-size:12.5px;line-height:12.5px;font-weight:normal;color:#ff1a1a;white-space:nowrap;-webkit-text-stroke:0.25px #ff1a1a;">S</div>
<div style="left:743px;top:449px;width:266.5px;height:1px;background:#000;"></div>
<div style="left:744.0px;top:450px;width:36.799999999999955px;height:20px;background:#e6e7e4;"></div>
<div style="left:781.8px;top:450px;width:36.90000000000009px;height:20px;background:#e6e7e4;"></div>
<div style="left:819.7px;top:450px;width:36.89999999999998px;height:20px;background:#e6e7e4;"></div>
<div style="left:857.6px;top:450px;width:36.89999999999998px;height:20px;background:#88ccee;"></div>
<div style="left:872.55px;top:454.48px;font-family:'Liberation Sans', sans-serif;font-size:12.5px;line-height:12.5px;font-weight:normal;color:#141414;white-space:nowrap;-webkit-text-stroke:0.25px #141414;">1</div>
<div style="left:895.5px;top:450px;width:36.89999999999998px;height:20px;background:#88ccee;"></div>
<div style="left:910.45px;top:454.48px;font-family:'Liberation Sans', sans-serif;font-size:12.5px;line-height:12.5px;font-weight:normal;color:#141414;white-space:nowrap;-webkit-text-stroke:0.25px #141414;">2</div>
<div style="left:933.4px;top:450px;width:36.89999999999998px;height:20px;background:#88ccee;"></div>
<div style="left:948.35px;top:454.48px;font-family:'Liberation Sans', sans-serif;font-size:12.5px;line-height:12.5px;font-weight:normal;color:#141414;white-space:nowrap;-webkit-text-stroke:0.25px #141414;">3</div>
<div style="left:971.3px;top:450px;width:38.0px;height:20px;background:#332288;"></div>
<div style="left:986.55px;top:454.48px;font-family:'Liberation Sans', sans-serif;font-size:12.5px;line-height:12.5px;font-weight:normal;color:#141414;white-space:nowrap;-webkit-text-stroke:0.25px #141414;">4</div>
<div style="left:743px;top:470px;width:266.5px;height:1px;background:#000;"></div>
<div style="left:744.0px;top:471px;width:36.799999999999955px;height:20px;background:#aa4499;"></div>
<div style="left:758.90px;top:475.48px;font-family:'Liberation Sans', sans-serif;font-size:12.5px;line-height:12.5px;font-weight:normal;color:#141414;white-space:nowrap;-webkit-text-stroke:0.25px #141414;">5</div>
<div style="left:781.8px;top:471px;width:36.90000000000009px;height:20px;background:#88ccee;"></div>
<div style="left:796.75px;top:475.48px;font-family:'Liberation Sans', sans-serif;font-size:12.5px;line-height:12.5px;font-weight:normal;color:#141414;white-space:nowrap;-webkit-text-stroke:0.25px #141414;">6</div>
<div style="left:819.7px;top:471px;width:36.89999999999998px;height:20px;background:#88ccee;"></div>
<div style="left:834.65px;top:475.48px;font-family:'Liberation Sans', sans-serif;font-size:12.5px;line-height:12.5px;font-weight:normal;color:#141414;white-space:nowrap;-webkit-text-stroke:0.25px #141414;">7</div>
<div style="left:857.6px;top:471px;width:36.89999999999998px;height:20px;background:#88ccee;"></div>
<div style="left:872.55px;top:475.48px;font-family:'Liberation Sans', sans-serif;font-size:12.5px;line-height:12.5px;font-weight:normal;color:#141414;white-space:nowrap;-webkit-text-stroke:0.25px #141414;">8</div>
<div style="left:895.5px;top:471px;width:36.89999999999998px;height:20px;background:#88ccee;"></div>
<div style="left:910.45px;top:475.48px;font-family:'Liberation Sans', sans-serif;font-size:12.5px;line-height:12.5px;font-weight:normal;color:#141414;white-space:nowrap;-webkit-text-stroke:0.25px #141414;">9</div>
<div style="left:933.4px;top:471px;width:36.89999999999998px;height:20px;background:#88ccee;"></div>
<div style="left:944.90px;top:475.48px;font-family:'Liberation Sans', sans-serif;font-size:12.5px;line-height:12.5px;font-weight:normal;color:#141414;white-space:nowrap;-webkit-text-stroke:0.25px #141414;">10</div>
<div style="left:971.3px;top:471px;width:38.0px;height:20px;background:#332288;"></div>
<div style="left:983.55px;top:475.48px;font-family:'Liberation Sans', sans-serif;font-size:12.5px;line-height:12.5px;font-weight:normal;color:#141414;white-space:nowrap;-webkit-text-stroke:0.25px #141414;">11</div>
<div style="left:743px;top:491px;width:266.5px;height:1px;background:#000;"></div>
<div style="left:744.0px;top:492px;width:36.799999999999955px;height:20px;background:#aa4499;"></div>
<div style="left:755.45px;top:496.48px;font-family:'Liberation Sans', sans-serif;font-size:12.5px;line-height:12.5px;font-weight:normal;color:#141414;white-space:nowrap;-webkit-text-stroke:0.25px #141414;">12</div>
<div style="left:781.8px;top:492px;width:36.90000000000009px;height:20px;background:#88ccee;"></div>
<div style="left:793.30px;top:496.48px;font-family:'Liberation Sans', sans-serif;font-size:12.5px;line-height:12.5px;font-weight:normal;color:#141414;white-space:nowrap;-webkit-text-stroke:0.25px #141414;">13</div>
<div style="left:819.7px;top:492px;width:36.89999999999998px;height:20px;background:#88ccee;"></div>
<div style="left:831.20px;top:496.48px;font-family:'Liberation Sans', sans-serif;font-size:12.5px;line-height:12.5px;font-weight:normal;color:#141414;white-space:nowrap;-webkit-text-stroke:0.25px #141414;">14</div>
<div style="left:857.6px;top:492px;width:36.89999999999998px;height:20px;background:#88ccee;"></div>
<div style="left:869.10px;top:496.48px;font-family:'Liberation Sans', sans-serif;font-size:12.5px;line-height:12.5px;font-weight:normal;color:#141414;white-space:nowrap;-webkit-text-stroke:0.25px #141414;">15</div>
<div style="left:895.5px;top:492px;width:36.89999999999998px;height:20px;background:#88ccee;"></div>
<div style="left:907.00px;top:496.48px;font-family:'Liberation Sans', sans-serif;font-size:12.5px;line-height:12.5px;font-weight:normal;color:#141414;white-space:nowrap;-webkit-text-stroke:0.25px #141414;">16</div>
<div style="left:933.4px;top:492px;width:36.89999999999998px;height:20px;background:#88ccee;"></div>
<div style="left:944.90px;top:496.48px;font-family:'Liberation Sans', sans-serif;font-size:12.5px;line-height:12.5px;font-weight:normal;color:#141414;white-space:nowrap;-webkit-text-stroke:0.25px #141414;">17</div>
<div style="left:971.3px;top:492px;width:38.0px;height:20px;background:#332288;"></div>
<div style="left:983.10px;top:496.48px;font-family:'Liberation Sans', sans-serif;font-size:12.5px;line-height:12.5px;font-weight:normal;color:#141414;white-space:nowrap;-webkit-text-stroke:0.25px #141414;">18</div>
<div style="left:743px;top:512px;width:266.5px;height:1px;background:#000;"></div>
<div style="left:744.0px;top:513px;width:36.799999999999955px;height:20px;background:#aa4499;"></div>
<div style="left:755.45px;top:517.47px;font-family:'Liberation Sans', sans-serif;font-size:12.5px;line-height:12.5px;font-weight:normal;color:#141414;white-space:nowrap;-webkit-text-stroke:0.25px #141414;">19</div>
<div style="left:781.8px;top:513px;width:36.90000000000009px;height:20px;background:#88ccee;"></div>
<div style="left:793.30px;top:517.47px;font-family:'Liberation Sans', sans-serif;font-size:12.5px;line-height:12.5px;font-weight:normal;color:#141414;white-space:nowrap;-webkit-text-stroke:0.25px #141414;">20</div>
<div style="left:819.7px;top:513px;width:36.89999999999998px;height:20px;background:#88ccee;"></div>
<div style="left:831.20px;top:517.47px;font-family:'Liberation Sans', sans-serif;font-size:12.5px;line-height:12.5px;font-weight:normal;color:#141414;white-space:nowrap;-webkit-text-stroke:0.25px #141414;">21</div>
<div style="left:857.6px;top:513px;width:36.89999999999998px;height:20px;background:#88ccee;"></div>
<div style="left:869.10px;top:517.47px;font-family:'Liberation Sans', sans-serif;font-size:12.5px;line-height:12.5px;font-weight:normal;color:#141414;white-space:nowrap;-webkit-text-stroke:0.25px #141414;">22</div>
<div style="left:895.5px;top:513px;width:36.89999999999998px;height:20px;background:#88ccee;"></div>
<div style="left:907.00px;top:517.47px;font-family:'Liberation Sans', sans-serif;font-size:12.5px;line-height:12.5px;font-weight:normal;color:#141414;white-space:nowrap;-webkit-text-stroke:0.25px #141414;">23</div>
<div style="left:933.4px;top:513px;width:36.89999999999998px;height:20px;background:#88ccee;"></div>
<div style="left:944.90px;top:517.47px;font-family:'Liberation Sans', sans-serif;font-size:12.5px;line-height:12.5px;font-weight:normal;color:#141414;white-space:nowrap;-webkit-text-stroke:0.25px #141414;">24</div>
<div style="left:971.3px;top:513px;width:38.0px;height:20px;background:#332288;"></div>
<div style="left:983.10px;top:517.47px;font-family:'Liberation Sans', sans-serif;font-size:12.5px;line-height:12.5px;font-weight:normal;color:#141414;white-space:nowrap;-webkit-text-stroke:0.25px #141414;">25</div>
<div style="left:743px;top:533px;width:266.5px;height:1px;background:#000;"></div>
<div style="left:744.0px;top:534px;width:36.799999999999955px;height:20px;background:#aa4499;"></div>
<div style="left:755.45px;top:538.47px;font-family:'Liberation Sans', sans-serif;font-size:12.5px;line-height:12.5px;font-weight:normal;color:#141414;white-space:nowrap;-webkit-text-stroke:0.25px #141414;">26</div>
<div style="left:781.8px;top:534px;width:36.90000000000009px;height:20px;background:#88ccee;"></div>
<div style="left:793.30px;top:538.47px;font-family:'Liberation Sans', sans-serif;font-size:12.5px;line-height:12.5px;font-weight:normal;color:#141414;white-space:nowrap;-webkit-text-stroke:0.25px #141414;">27</div>
<div style="left:819.7px;top:534px;width:36.89999999999998px;height:20px;background:#88ccee;"></div>
<div style="left:831.20px;top:538.47px;font-family:'Liberation Sans', sans-serif;font-size:12.5px;line-height:12.5px;font-weight:normal;color:#141414;white-space:nowrap;-webkit-text-stroke:0.25px #141414;">28</div>
<div style="left:857.6px;top:534px;width:36.89999999999998px;height:20px;background:#88ccee;"></div>
<div style="left:869.10px;top:538.47px;font-family:'Liberation Sans', sans-serif;font-size:12.5px;line-height:12.5px;font-weight:normal;color:#141414;white-space:nowrap;-webkit-text-stroke:0.25px #141414;">29</div>
<div style="left:895.5px;top:534px;width:36.89999999999998px;height:20px;background:#88ccee;"></div>
<div style="left:907.00px;top:538.47px;font-family:'Liberation Sans', sans-serif;font-size:12.5px;line-height:12.5px;font-weight:normal;color:#141414;white-space:nowrap;-webkit-text-stroke:0.25px #141414;">30</div>
<div style="left:933.4px;top:534px;width:36.89999999999998px;height:20px;background:#88ccee;"></div>
<div style="left:944.90px;top:538.47px;font-family:'Liberation Sans', sans-serif;font-size:12.5px;line-height:12.5px;font-weight:normal;color:#141414;white-space:nowrap;-webkit-text-stroke:0.25px #141414;">31</div>
<div style="left:971.3px;top:534px;width:38.0px;height:20px;background:#e6e7e4;"></div>
<div style="left:743px;top:554px;width:266.5px;height:1px;background:#000;"></div>
<div style="left:744.0px;top:555px;width:36.799999999999955px;height:20px;background:#e6e7e4;"></div>
<div style="left:781.8px;top:555px;width:36.90000000000009px;height:20px;background:#e6e7e4;"></div>
<div style="left:819.7px;top:555px;width:36.89999999999998px;height:20px;background:#e6e7e4;"></div>
<div style="left:857.6px;top:555px;width:36.89999999999998px;height:20px;background:#e6e7e4;"></div>
<div style="left:895.5px;top:555px;width:36.89999999999998px;height:20px;background:#e6e7e4;"></div>
<div style="left:933.4px;top:555px;width:36.89999999999998px;height:20px;background:#e6e7e4;"></div>
<div style="left:971.3px;top:555px;width:38.0px;height:20px;background:#e6e7e4;"></div>
<div style="left:743px;top:575px;width:266.5px;height:1px;background:#000;"></div>
<div style="left:780.8px;top:450px;width:1.2999999999999545px;height:126px;background:#000;"></div>
<div style="left:818.7px;top:450px;width:1.2999999999999545px;height:126px;background:#000;"></div>
<div style="left:856.6px;top:450px;width:1.2999999999999545px;height:126px;background:#000;"></div>
<div style="left:894.5px;top:450px;width:1.2999999999999545px;height:126px;background:#000;"></div>
<div style="left:932.4px;top:450px;width:1.2999999999999545px;height:126px;background:#000;"></div>
<div style="left:970.3px;top:450px;width:1.2999999999999545px;height:126px;background:#000;"></div>
<div style="left:743px;top:450px;width:1.2000000000000455px;height:126px;background:#000;"></div>
<div style="left:743px;top:576px;width:266.5px;height:28px;background:#eeefec;"></div>
<div style="left:866.25px;top:585.07px;font-family:'Liberation Sans', sans-serif;font-size:12.5px;line-height:12.5px;font-weight:normal;color:#1a1a1a;white-space:nowrap;-webkit-text-stroke:0.25px #1a1a1a;">Apr</div>
<div style="left:743px;top:604px;width:266.5px;height:21px;background:#f6f7f5;"></div>
<div style="left:758.25px;top:608.67px;font-family:'Liberation Sans', sans-serif;font-size:12.5px;line-height:12.5px;font-weight:normal;color:#ff1a1a;white-space:nowrap;-webkit-text-stroke:0.25px #ff1a1a;">S</div>
<div style="left:795.05px;top:608.67px;font-family:'Liberation Sans', sans-serif;font-size:12.5px;line-height:12.5px;font-weight:normal;color:#1a1a1a;white-space:nowrap;-webkit-text-stroke:0.25px #1a1a1a;">M</div>
<div style="left:834.35px;top:608.67px;font-family:'Liberation Sans', sans-serif;font-size:12.5px;line-height:12.5px;font-weight:normal;color:#1a1a1a;white-space:nowrap;-webkit-text-stroke:0.25px #1a1a1a;">T</div>
<div style="left:870.15px;top:608.67px;font-family:'Liberation Sans', sans-serif;font-size:12.5px;line-height:12.5px;font-weight:normal;color:#1a1a1a;white-space:nowrap;-webkit-text-stroke:0.25px #1a1a1a;">W</div>
<div style="left:910.15px;top:608.67px;font-family:'Liberation Sans', sans-serif;font-size:12.5px;line-height:12.5px;font-weight:normal;color:#1a1a1a;white-space:nowrap;-webkit-text-stroke:0.25px #1a1a1a;">T</div>
<div style="left:948.05px;top:608.67px;font-family:'Liberation Sans', sans-serif;font-size:12.5px;line-height:12.5px;font-weight:normal;color:#1a1a1a;white-space:nowrap;-webkit-text-stroke:0.25px #1a1a1a;">F</div>
<div style="left:985.90px;top:608.67px;font-family:'Liberation Sans', sans-serif;font-size:12.5px;line-height:12.5px;font-weight:normal;color:#ff1a1a;white-space:nowrap;-webkit-text-stroke:0.25px #ff1a1a;">S</div>
<div style="left:743px;top:625px;width:266.5px;height:1px;background:#000;"></div>
<div style="left:744.0px;top:626px;width:36.799999999999955px;height:20px;background:#e6e7e4;"></div>
<div style="left:781.8px;top:626px;width:36.90000000000009px;height:20px;background:#e6e7e4;"></div>
<div style="left:819.7px;top:626px;width:36.89999999999998px;height:20px;background:#e6e7e4;"></div>
<div style="left:857.6px;top:626px;width:36.89999999999998px;height:20px;background:#e6e7e4;"></div>
<div style="left:895.5px;top:626px;width:36.89999999999998px;height:20px;background:#e6e7e4;"></div>
<div style="left:933.4px;top:626px;width:36.89999999999998px;height:20px;background:#e6e7e4;"></div>
<div style="left:971.3px;top:626px;width:38.0px;height:20px;background:#332288;"></div>
<div style="left:986.55px;top:630.47px;font-family:'Liberation Sans', sans-serif;font-size:12.5px;line-height:12.5px;font-weight:normal;color:#141414;white-space:nowrap;-webkit-text-stroke:0.25px #141414;">1</div>
<div style="left:743px;top:646px;width:266.5px;height:1px;background:#000;"></div>
<div style="left:744.0px;top:647px;width:36.799999999999955px;height:20px;background:#aa4499;"></div>
<div style="left:758.90px;top:651.47px;font-family:'Liberation Sans', sans-serif;font-size:12.5px;line-height:12.5px;font-weight:normal;color:#141414;white-space:nowrap;-webkit-text-stroke:0.25px #141414;">2</div>
<div style="left:781.8px;top:647px;width:36.90000000000009px;height:20px;background:#88ccee;"></div>
<div style="left:796.75px;top:651.47px;font-family:'Liberation Sans', sans-serif;font-size:12.5px;line-height:12.5px;font-weight:normal;color:#141414;white-space:nowrap;-webkit-text-stroke:0.25px #141414;">3</div>
<div style="left:819.7px;top:647px;width:36.89999999999998px;height:20px;background:#88ccee;"></div>
<div style="left:834.65px;top:651.47px;font-family:'Liberation Sans', sans-serif;font-size:12.5px;line-height:12.5px;font-weight:normal;color:#141414;white-space:nowrap;-webkit-text-stroke:0.25px #141414;">4</div>
<div style="left:857.6px;top:647px;width:36.89999999999998px;height:20px;background:#88ccee;"></div>
<div style="left:872.55px;top:651.47px;font-family:'Liberation Sans', sans-serif;font-size:12.5px;line-height:12.5px;font-weight:normal;color:#141414;white-space:nowrap;-webkit-text-stroke:0.25px #141414;">5</div>
<div style="left:895.5px;top:647px;width:36.89999999999998px;height:20px;background:#88ccee;"></div>
<div style="left:910.45px;top:651.47px;font-family:'Liberation Sans', sans-serif;font-size:12.5px;line-height:12.5px;font-weight:normal;color:#141414;white-space:nowrap;-webkit-text-stroke:0.25px #141414;">6</div>
<div style="left:933.4px;top:647px;width:36.89999999999998px;height:20px;background:#88ccee;"></div>
<div style="left:948.35px;top:651.47px;font-family:'Liberation Sans', sans-serif;font-size:12.5px;line-height:12.5px;font-weight:normal;color:#141414;white-space:nowrap;-webkit-text-stroke:0.25px #141414;">7</div>
<div style="left:971.3px;top:647px;width:38.0px;height:20px;background:#332288;"></div>
<div style="left:986.55px;top:651.47px;font-family:'Liberation Sans', sans-serif;font-size:12.5px;line-height:12.5px;font-weight:normal;color:#141414;white-space:nowrap;-webkit-text-stroke:0.25px #141414;">8</div>
<div style="left:743px;top:667px;width:266.5px;height:1px;background:#000;"></div>
<div style="left:744.0px;top:668px;width:36.799999999999955px;height:20px;background:#aa4499;"></div>
<div style="left:758.90px;top:672.47px;font-family:'Liberation Sans', sans-serif;font-size:12.5px;line-height:12.5px;font-weight:normal;color:#141414;white-space:nowrap;-webkit-text-stroke:0.25px #141414;">9</div>
<div style="left:781.8px;top:668px;width:36.90000000000009px;height:20px;background:#88ccee;"></div>
<div style="left:793.30px;top:672.47px;font-family:'Liberation Sans', sans-serif;font-size:12.5px;line-height:12.5px;font-weight:normal;color:#141414;white-space:nowrap;-webkit-text-stroke:0.25px #141414;">10</div>
<div style="left:819.7px;top:668px;width:36.89999999999998px;height:20px;background:#88ccee;"></div>
<div style="left:831.65px;top:672.47px;font-family:'Liberation Sans', sans-serif;font-size:12.5px;line-height:12.5px;font-weight:normal;color:#141414;white-space:nowrap;-webkit-text-stroke:0.25px #141414;">11</div>
<div style="left:857.6px;top:668px;width:36.89999999999998px;height:20px;background:#88ccee;"></div>
<div style="left:869.10px;top:672.47px;font-family:'Liberation Sans', sans-serif;font-size:12.5px;line-height:12.5px;font-weight:normal;color:#141414;white-space:nowrap;-webkit-text-stroke:0.25px #141414;">12</div>
<div style="left:895.5px;top:668px;width:36.89999999999998px;height:20px;background:#88ccee;"></div>
<div style="left:907.00px;top:672.47px;font-family:'Liberation Sans', sans-serif;font-size:12.5px;line-height:12.5px;font-weight:normal;color:#141414;white-space:nowrap;-webkit-text-stroke:0.25px #141414;">13</div>
<div style="left:933.4px;top:668px;width:36.89999999999998px;height:20px;background:#88ccee;"></div>
<div style="left:944.90px;top:672.47px;font-family:'Liberation Sans', sans-serif;font-size:12.5px;line-height:12.5px;font-weight:normal;color:#141414;white-space:nowrap;-webkit-text-stroke:0.25px #141414;">14</div>
<div style="left:971.3px;top:668px;width:38.0px;height:20px;background:#332288;"></div>
<div style="left:983.10px;top:672.47px;font-family:'Liberation Sans', sans-serif;font-size:12.5px;line-height:12.5px;font-weight:normal;color:#141414;white-space:nowrap;-webkit-text-stroke:0.25px #141414;">15</div>
<div style="left:743px;top:688px;width:266.5px;height:1px;background:#000;"></div>
<div style="left:744.0px;top:689px;width:36.799999999999955px;height:20px;background:#aa4499;"></div>
<div style="left:755.45px;top:693.47px;font-family:'Liberation Sans', sans-serif;font-size:12.5px;line-height:12.5px;font-weight:normal;color:#141414;white-space:nowrap;-webkit-text-stroke:0.25px #141414;">16</div>
<div style="left:781.8px;top:689px;width:36.90000000000009px;height:20px;background:#88ccee;"></div>
<div style="left:793.30px;top:693.47px;font-family:'Liberation Sans', sans-serif;font-size:12.5px;line-height:12.5px;font-weight:normal;color:#141414;white-space:nowrap;-webkit-text-stroke:0.25px #141414;">17</div>
<div style="left:819.7px;top:689px;width:36.89999999999998px;height:20px;background:#88ccee;"></div>
<div style="left:831.20px;top:693.47px;font-family:'Liberation Sans', sans-serif;font-size:12.5px;line-height:12.5px;font-weight:normal;color:#141414;white-space:nowrap;-webkit-text-stroke:0.25px #141414;">18</div>
<div style="left:857.6px;top:689px;width:36.89999999999998px;height:20px;background:#88ccee;"></div>
<div style="left:869.10px;top:693.47px;font-family:'Liberation Sans', sans-serif;font-size:12.5px;line-height:12.5px;font-weight:normal;color:#141414;white-space:nowrap;-webkit-text-stroke:0.25px #141414;">19</div>
<div style="left:895.5px;top:689px;width:36.89999999999998px;height:20px;background:#88ccee;"></div>
<div style="left:907.00px;top:693.47px;font-family:'Liberation Sans', sans-serif;font-size:12.5px;line-height:12.5px;font-weight:normal;color:#141414;white-space:nowrap;-webkit-text-stroke:0.25px #141414;">20</div>
<div style="left:933.4px;top:689px;width:36.89999999999998px;height:20px;background:#88ccee;"></div>
<div style="left:944.90px;top:693.47px;font-family:'Liberation Sans', sans-serif;font-size:12.5px;line-height:12.5px;font-weight:normal;color:#141414;white-space:nowrap;-webkit-text-stroke:0.25px #141414;">21</div>
<div style="left:971.3px;top:689px;width:38.0px;height:20px;background:#332288;"></div>
<div style="left:983.10px;top:693.47px;font-family:'Liberation Sans', sans-serif;font-size:12.5px;line-height:12.5px;font-weight:normal;color:#141414;white-space:nowrap;-webkit-text-stroke:0.25px #141414;">22</div>
<div style="left:743px;top:709px;width:266.5px;height:1px;background:#000;"></div>
<div style="left:744.0px;top:710px;width:36.799999999999955px;height:20px;background:#aa4499;"></div>
<div style="left:755.45px;top:714.47px;font-family:'Liberation Sans', sans-serif;font-size:12.5px;line-height:12.5px;font-weight:normal;color:#141414;white-space:nowrap;-webkit-text-stroke:0.25px #141414;">23</div>
<div style="left:781.8px;top:710px;width:36.90000000000009px;height:20px;background:#88ccee;"></div>
<div style="left:793.30px;top:714.47px;font-family:'Liberation Sans', sans-serif;font-size:12.5px;line-height:12.5px;font-weight:normal;color:#141414;white-space:nowrap;-webkit-text-stroke:0.25px #141414;">24</div>
<div style="left:819.7px;top:710px;width:36.89999999999998px;height:20px;background:#88ccee;"></div>
<div style="left:831.20px;top:714.47px;font-family:'Liberation Sans', sans-serif;font-size:12.5px;line-height:12.5px;font-weight:normal;color:#141414;white-space:nowrap;-webkit-text-stroke:0.25px #141414;">25</div>
<div style="left:857.6px;top:710px;width:36.89999999999998px;height:20px;background:#88ccee;"></div>
<div style="left:869.10px;top:714.47px;font-family:'Liberation Sans', sans-serif;font-size:12.5px;line-height:12.5px;font-weight:normal;color:#141414;white-space:nowrap;-webkit-text-stroke:0.25px #141414;">26</div>
<div style="left:895.5px;top:710px;width:36.89999999999998px;height:20px;background:#88ccee;"></div>
<div style="left:907.00px;top:714.47px;font-family:'Liberation Sans', sans-serif;font-size:12.5px;line-height:12.5px;font-weight:normal;color:#141414;white-space:nowrap;-webkit-text-stroke:0.25px #141414;">27</div>
<div style="left:933.4px;top:710px;width:36.89999999999998px;height:20px;background:#88ccee;"></div>
<div style="left:944.90px;top:714.47px;font-family:'Liberation Sans', sans-serif;font-size:12.5px;line-height:12.5px;font-weight:normal;color:#141414;white-space:nowrap;-webkit-text-stroke:0.25px #141414;">28</div>
<div style="left:971.3px;top:710px;width:38.0px;height:20px;background:#332288;"></div>
<div style="left:983.10px;top:714.47px;font-family:'Liberation Sans', sans-serif;font-size:12.5px;line-height:12.5px;font-weight:normal;color:#141414;white-space:nowrap;-webkit-text-stroke:0.25px #141414;">29</div>
<div style="left:743px;top:730px;width:266.5px;height:1px;background:#000;"></div>
<div style="left:744.0px;top:731px;width:36.799999999999955px;height:20px;background:#aa4499;"></div>
<div style="left:755.45px;top:735.47px;font-family:'Liberation Sans', sans-serif;font-size:12.5px;line-height:12.5px;font-weight:normal;color:#141414;white-space:nowrap;-webkit-text-stroke:0.25px #141414;">30</div>
<div style="left:781.8px;top:731px;width:36.90000000000009px;height:20px;background:#e6e7e4;"></div>
<div style="left:819.7px;top:731px;width:36.89999999999998px;height:20px;background:#e6e7e4;"></div>
<div style="left:857.6px;top:731px;width:36.89999999999998px;height:20px;background:#e6e7e4;"></div>
<div style="left:895.5px;top:731px;width:36.89999999999998px;height:20px;background:#e6e7e4;"></div>
<div style="left:933.4px;top:731px;width:36.89999999999998px;height:20px;background:#e6e7e4;"></div>
<div style="left:971.3px;top:731px;width:38.0px;height:20px;background:#e6e7e4;"></div>
<div style="left:743px;top:751px;width:266.5px;height:1px;background:#000;"></div>
<div style="left:780.8px;top:626px;width:1.2999999999999545px;height:126px;background:#000;"></div>
<div style="left:818.7px;top:626px;width:1.2999999999999545px;height:126px;background:#000;"></div>
<div style="left:856.6px;top:626px;width:1.2999999999999545px;height:126px;background:#000;"></div>
<div style="left:894.5px;top:626px;width:1.2999999999999545px;height:126px;background:#000;"></div>
<div style="left:932.4px;top:626px;width:1.2999999999999545px;height:126px;background:#000;"></div>
<div style="left:970.3px;top:626px;width:1.2999999999999545px;height:126px;background:#000;"></div>
<div style="left:743px;top:626px;width:1.2000000000000455px;height:126px;background:#000;"></div>
<div style="left:743px;top:752px;width:266.5px;height:28px;background:#eeefec;"></div>
<div style="left:864.15px;top:761.07px;font-family:'Liberation Sans', sans-serif;font-size:12.5px;line-height:12.5px;font-weight:normal;color:#1a1a1a;white-space:nowrap;-webkit-text-stroke:0.25px #1a1a1a;">May</div>
<div style="left:743px;top:780px;width:266.5px;height:21px;background:#f6f7f5;"></div>
<div style="left:758.25px;top:784.67px;font-family:'Liberation Sans', sans-serif;font-size:12.5px;line-height:12.5px;font-weight:normal;color:#ff1a1a;white-space:nowrap;-webkit-text-stroke:0.25px #ff1a1a;">S</div>
<div style="left:795.05px;top:784.67px;font-family:'Liberation Sans', sans-serif;font-size:12.5px;line-height:12.5px;font-weight:normal;color:#1a1a1a;white-space:nowrap;-webkit-text-stroke:0.25px #1a1a1a;">M</div>
<div style="left:834.35px;top:784.67px;font-family:'Liberation Sans', sans-serif;font-size:12.5px;line-height:12.5px;font-weight:normal;color:#1a1a1a;white-space:nowrap;-webkit-text-stroke:0.25px #1a1a1a;">T</div>
<div style="left:870.15px;top:784.67px;font-family:'Liberation Sans', sans-serif;font-size:12.5px;line-height:12.5px;font-weight:normal;color:#1a1a1a;white-space:nowrap;-webkit-text-stroke:0.25px #1a1a1a;">W</div>
<div style="left:910.15px;top:784.67px;font-family:'Liberation Sans', sans-serif;font-size:12.5px;line-height:12.5px;font-weight:normal;color:#1a1a1a;white-space:nowrap;-webkit-text-stroke:0.25px #1a1a1a;">T</div>
<div style="left:948.05px;top:784.67px;font-family:'Liberation Sans', sans-serif;font-size:12.5px;line-height:12.5px;font-weight:normal;color:#1a1a1a;white-space:nowrap;-webkit-text-stroke:0.25px #1a1a1a;">F</div>
<div style="left:985.90px;top:784.67px;font-family:'Liberation Sans', sans-serif;font-size:12.5px;line-height:12.5px;font-weight:normal;color:#ff1a1a;white-space:nowrap;-webkit-text-stroke:0.25px #ff1a1a;">S</div>
<div style="left:743px;top:801px;width:266.5px;height:1px;background:#000;"></div>
<div style="left:744.0px;top:802px;width:36.799999999999955px;height:20px;background:#e6e7e4;"></div>
<div style="left:781.8px;top:802px;width:36.90000000000009px;height:20px;background:#88ccee;"></div>
<div style="left:796.75px;top:806.47px;font-family:'Liberation Sans', sans-serif;font-size:12.5px;line-height:12.5px;font-weight:normal;color:#141414;white-space:nowrap;-webkit-text-stroke:0.25px #141414;">1</div>
<div style="left:819.7px;top:802px;width:36.89999999999998px;height:20px;background:#88ccee;"></div>
<div style="left:834.65px;top:806.47px;font-family:'Liberation Sans', sans-serif;font-size:12.5px;line-height:12.5px;font-weight:normal;color:#141414;white-space:nowrap;-webkit-text-stroke:0.25px #141414;">2</div>
<div style="left:857.6px;top:802px;width:36.89999999999998px;height:20px;background:#88ccee;"></div>
<div style="left:872.55px;top:806.47px;font-family:'Liberation Sans', sans-serif;font-size:12.5px;line-height:12.5px;font-weight:normal;color:#141414;white-space:nowrap;-webkit-text-stroke:0.25px #141414;">3</div>
<div style="left:895.5px;top:802px;width:36.89999999999998px;height:20px;background:#88ccee;"></div>
<div style="left:910.45px;top:806.47px;font-family:'Liberation Sans', sans-serif;font-size:12.5px;line-height:12.5px;font-weight:normal;color:#141414;white-space:nowrap;-webkit-text-stroke:0.25px #141414;">4</div>
<div style="left:933.4px;top:802px;width:36.89999999999998px;height:20px;background:#88ccee;"></div>
<div style="left:948.35px;top:806.47px;font-family:'Liberation Sans', sans-serif;font-size:12.5px;line-height:12.5px;font-weight:normal;color:#141414;white-space:nowrap;-webkit-text-stroke:0.25px #141414;">5</div>
<div style="left:971.3px;top:802px;width:38.0px;height:20px;background:#332288;"></div>
<div style="left:986.55px;top:806.47px;font-family:'Liberation Sans', sans-serif;font-size:12.5px;line-height:12.5px;font-weight:normal;color:#141414;white-space:nowrap;-webkit-text-stroke:0.25px #141414;">6</div>
<div style="left:743px;top:822px;width:266.5px;height:1px;background:#000;"></div>
<div style="left:744.0px;top:823px;width:36.799999999999955px;height:20px;background:#aa4499;"></div>
<div style="left:758.90px;top:827.47px;font-family:'Liberation Sans', sans-serif;font-size:12.5px;line-height:12.5px;font-weight:normal;color:#141414;white-space:nowrap;-webkit-text-stroke:0.25px #141414;">7</div>
<div style="left:781.8px;top:823px;width:36.90000000000009px;height:20px;background:#88ccee;"></div>
<div style="left:796.75px;top:827.47px;font-family:'Liberation Sans', sans-serif;font-size:12.5px;line-height:12.5px;font-weight:normal;color:#141414;white-space:nowrap;-webkit-text-stroke:0.25px #141414;">8</div>
<div style="left:819.7px;top:823px;width:36.89999999999998px;height:20px;background:#88ccee;"></div>
<div style="left:834.65px;top:827.47px;font-family:'Liberation Sans', sans-serif;font-size:12.5px;line-height:12.5px;font-weight:normal;color:#141414;white-space:nowrap;-webkit-text-stroke:0.25px #141414;">9</div>
<div style="left:857.6px;top:823px;width:36.89999999999998px;height:20px;background:#88ccee;"></div>
<div style="left:869.10px;top:827.47px;font-family:'Liberation Sans', sans-serif;font-size:12.5px;line-height:12.5px;font-weight:normal;color:#141414;white-space:nowrap;-webkit-text-stroke:0.25px #141414;">10</div>
<div style="left:895.5px;top:823px;width:36.89999999999998px;height:20px;background:#88ccee;"></div>
<div style="left:907.45px;top:827.47px;font-family:'Liberation Sans', sans-serif;font-size:12.5px;line-height:12.5px;font-weight:normal;color:#141414;white-space:nowrap;-webkit-text-stroke:0.25px #141414;">11</div>
<div style="left:933.4px;top:823px;width:36.89999999999998px;height:20px;background:#88ccee;"></div>
<div style="left:944.90px;top:827.47px;font-family:'Liberation Sans', sans-serif;font-size:12.5px;line-height:12.5px;font-weight:normal;color:#141414;white-space:nowrap;-webkit-text-stroke:0.25px #141414;">12</div>
<div style="left:971.3px;top:823px;width:38.0px;height:20px;background:#332288;"></div>
<div style="left:983.10px;top:827.47px;font-family:'Liberation Sans', sans-serif;font-size:12.5px;line-height:12.5px;font-weight:normal;color:#141414;white-space:nowrap;-webkit-text-stroke:0.25px #141414;">13</div>
<div style="left:743px;top:843px;width:266.5px;height:1px;background:#000;"></div>
<div style="left:744.0px;top:844px;width:36.799999999999955px;height:20px;background:#aa4499;"></div>
<div style="left:755.45px;top:848.47px;font-family:'Liberation Sans', sans-serif;font-size:12.5px;line-height:12.5px;font-weight:normal;color:#141414;white-space:nowrap;-webkit-text-stroke:0.25px #141414;">14</div>
<div style="left:781.8px;top:844px;width:36.90000000000009px;height:20px;background:#88ccee;"></div>
<div style="left:793.30px;top:848.47px;font-family:'Liberation Sans', sans-serif;font-size:12.5px;line-height:12.5px;font-weight:normal;color:#141414;white-space:nowrap;-webkit-text-stroke:0.25px #141414;">15</div>
<div style="left:819.7px;top:844px;width:36.89999999999998px;height:20px;background:#88ccee;"></div>
<div style="left:831.20px;top:848.47px;font-family:'Liberation Sans', sans-serif;font-size:12.5px;line-height:12.5px;font-weight:normal;color:#141414;white-space:nowrap;-webkit-text-stroke:0.25px #141414;">16</div>
<div style="left:857.6px;top:844px;width:36.89999999999998px;height:20px;background:#88ccee;"></div>
<div style="left:869.10px;top:848.47px;font-family:'Liberation Sans', sans-serif;font-size:12.5px;line-height:12.5px;font-weight:normal;color:#141414;white-space:nowrap;-webkit-text-stroke:0.25px #141414;">17</div>
<div style="left:895.5px;top:844px;width:36.89999999999998px;height:20px;background:#88ccee;"></div>
<div style="left:907.00px;top:848.47px;font-family:'Liberation Sans', sans-serif;font-size:12.5px;line-height:12.5px;font-weight:normal;color:#141414;white-space:nowrap;-webkit-text-stroke:0.25px #141414;">18</div>
<div style="left:933.4px;top:844px;width:36.89999999999998px;height:20px;background:#88ccee;"></div>
<div style="left:944.90px;top:848.47px;font-family:'Liberation Sans', sans-serif;font-size:12.5px;line-height:12.5px;font-weight:normal;color:#141414;white-space:nowrap;-webkit-text-stroke:0.25px #141414;">19</div>
<div style="left:971.3px;top:844px;width:38.0px;height:20px;background:#332288;"></div>
<div style="left:983.10px;top:848.47px;font-family:'Liberation Sans', sans-serif;font-size:12.5px;line-height:12.5px;font-weight:normal;color:#141414;white-space:nowrap;-webkit-text-stroke:0.25px #141414;">20</div>
<div style="left:743px;top:864px;width:266.5px;height:1px;background:#000;"></div>
<div style="left:744.0px;top:865px;width:36.799999999999955px;height:20px;background:#aa4499;"></div>
<div style="left:755.45px;top:869.47px;font-family:'Liberation Sans', sans-serif;font-size:12.5px;line-height:12.5px;font-weight:normal;color:#141414;white-space:nowrap;-webkit-text-stroke:0.25px #141414;">21</div>
<div style="left:781.8px;top:865px;width:36.90000000000009px;height:20px;background:#88ccee;"></div>
<div style="left:793.30px;top:869.47px;font-family:'Liberation Sans', sans-serif;font-size:12.5px;line-height:12.5px;font-weight:normal;color:#141414;white-space:nowrap;-webkit-text-stroke:0.25px #141414;">22</div>
<div style="left:819.7px;top:865px;width:36.89999999999998px;height:20px;background:#88ccee;"></div>
<div style="left:831.20px;top:869.47px;font-family:'Liberation Sans', sans-serif;font-size:12.5px;line-height:12.5px;font-weight:normal;color:#141414;white-space:nowrap;-webkit-text-stroke:0.25px #141414;">23</div>
<div style="left:857.6px;top:865px;width:36.89999999999998px;height:20px;background:#88ccee;"></div>
<div style="left:869.10px;top:869.47px;font-family:'Liberation Sans', sans-serif;font-size:12.5px;line-height:12.5px;font-weight:normal;color:#141414;white-space:nowrap;-webkit-text-stroke:0.25px #141414;">24</div>
<div style="left:895.5px;top:865px;width:36.89999999999998px;height:20px;background:#88ccee;"></div>
<div style="left:907.00px;top:869.47px;font-family:'Liberation Sans', sans-serif;font-size:12.5px;line-height:12.5px;font-weight:normal;color:#141414;white-space:nowrap;-webkit-text-stroke:0.25px #141414;">25</div>
<div style="left:933.4px;top:865px;width:36.89999999999998px;height:20px;background:#88ccee;"></div>
<div style="left:944.90px;top:869.47px;font-family:'Liberation Sans', sans-serif;font-size:12.5px;line-height:12.5px;font-weight:normal;color:#141414;white-space:nowrap;-webkit-text-stroke:0.25px #141414;">26</div>
<div style="left:971.3px;top:865px;width:38.0px;height:20px;background:#332288;"></div>
<div style="left:983.10px;top:869.47px;font-family:'Liberation Sans', sans-serif;font-size:12.5px;line-height:12.5px;font-weight:normal;color:#141414;white-space:nowrap;-webkit-text-stroke:0.25px #141414;">27</div>
<div style="left:743px;top:885px;width:266.5px;height:1px;background:#000;"></div>
<div style="left:744.0px;top:886px;width:36.799999999999955px;height:20px;background:#aa4499;"></div>
<div style="left:755.45px;top:890.47px;font-family:'Liberation Sans', sans-serif;font-size:12.5px;line-height:12.5px;font-weight:normal;color:#141414;white-space:nowrap;-webkit-text-stroke:0.25px #141414;">28</div>
<div style="left:781.8px;top:886px;width:36.90000000000009px;height:20px;background:#88ccee;"></div>
<div style="left:793.30px;top:890.47px;font-family:'Liberation Sans', sans-serif;font-size:12.5px;line-height:12.5px;font-weight:normal;color:#141414;white-space:nowrap;-webkit-text-stroke:0.25px #141414;">29</div>
<div style="left:819.7px;top:886px;width:36.89999999999998px;height:20px;background:#88ccee;"></div>
<div style="left:831.20px;top:890.47px;font-family:'Liberation Sans', sans-serif;font-size:12.5px;line-height:12.5px;font-weight:normal;color:#141414;white-space:nowrap;-webkit-text-stroke:0.25px #141414;">30</div>
<div style="left:857.6px;top:886px;width:36.89999999999998px;height:20px;background:#88ccee;"></div>
<div style="left:869.10px;top:890.47px;font-family:'Liberation Sans', sans-serif;font-size:12.5px;line-height:12.5px;font-weight:normal;color:#141414;white-space:nowrap;-webkit-text-stroke:0.25px #141414;">31</div>
<div style="left:895.5px;top:886px;width:36.89999999999998px;height:20px;background:#e6e7e4;"></div>
<div style="left:933.4px;top:886px;width:36.89999999999998px;height:20px;background:#e6e7e4;"></div>
<div style="left:971.3px;top:886px;width:38.0px;height:20px;background:#e6e7e4;"></div>
<div style="left:743px;top:906px;width:266.5px;height:1px;background:#000;"></div>
<div style="left:744.0px;top:907px;width:36.799999999999955px;height:20px;background:#e6e7e4;"></div>
<div style="left:781.8px;top:907px;width:36.90000000000009px;height:20px;background:#e6e7e4;"></div>
<div style="left:819.7px;top:907px;width:36.89999999999998px;height:20px;background:#e6e7e4;"></div>
<div style="left:857.6px;top:907px;width:36.89999999999998px;height:20px;background:#e6e7e4;"></div>
<div style="left:895.5px;top:907px;width:36.89999999999998px;height:20px;background:#e6e7e4;"></div>
<div style="left:933.4px;top:907px;width:36.89999999999998px;height:20px;background:#e6e7e4;"></div>
<div style="left:971.3px;top:907px;width:38.0px;height:20px;background:#e6e7e4;"></div>
<div style="left:743px;top:927px;width:266.5px;height:1px;background:#000;"></div>
<div style="left:780.8px;top:802px;width:1.2999999999999545px;height:126px;background:#000;"></div>
<div style="left:818.7px;top:802px;width:1.2999999999999545px;height:126px;background:#000;"></div>
<div style="left:856.6px;top:802px;width:1.2999999999999545px;height:126px;background:#000;"></div>
<div style="left:894.5px;top:802px;width:1.2999999999999545px;height:126px;background:#000;"></div>
<div style="left:932.4px;top:802px;width:1.2999999999999545px;height:126px;background:#000;"></div>
<div style="left:970.3px;top:802px;width:1.2999999999999545px;height:126px;background:#000;"></div>
<div style="left:743px;top:802px;width:1.2000000000000455px;height:126px;background:#000;"></div>
<div style="left:743px;top:928px;width:266.5px;height:28px;background:#eeefec;"></div>
<div style="left:865.90px;top:937.07px;font-family:'Liberation Sans', sans-serif;font-size:12.5px;line-height:12.5px;font-weight:normal;color:#1a1a1a;white-space:nowrap;-webkit-text-stroke:0.25px #1a1a1a;">Jun</div>
<div style="left:743px;top:956px;width:266.5px;height:21px;background:#f6f7f5;"></div>
<div style="left:758.25px;top:960.67px;font-family:'Liberation Sans', sans-serif;font-size:12.5px;line-height:12.5px;font-weight:normal;color:#ff1a1a;white-space:nowrap;-webkit-text-stroke:0.25px #ff1a1a;">S</div>
<div style="left:795.05px;top:960.67px;font-family:'Liberation Sans', sans-serif;font-size:12.5px;line-height:12.5px;font-weight:normal;color:#1a1a1a;white-space:nowrap;-webkit-text-stroke:0.25px #1a1a1a;">M</div>
<div style="left:834.35px;top:960.67px;font-family:'Liberation Sans', sans-serif;font-size:12.5px;line-height:12.5px;font-weight:normal;color:#1a1a1a;white-space:nowrap;-webkit-text-stroke:0.25px #1a1a1a;">T</div>
<div style="left:870.15px;top:960.67px;font-family:'Liberation Sans', sans-serif;font-size:12.5px;line-height:12.5px;font-weight:normal;color:#1a1a1a;white-space:nowrap;-webkit-text-stroke:0.25px #1a1a1a;">W</div>
<div style="left:910.15px;top:960.67px;font-family:'Liberation Sans', sans-serif;font-size:12.5px;line-height:12.5px;font-weight:normal;color:#1a1a1a;white-space:nowrap;-webkit-text-stroke:0.25px #1a1a1a;">T</div>
<div style="left:948.05px;top:960.67px;font-family:'Liberation Sans', sans-serif;font-size:12.5px;line-height:12.5px;font-weight:normal;color:#1a1a1a;white-space:nowrap;-webkit-text-stroke:0.25px #1a1a1a;">F</div>
<div style="left:985.90px;top:960.67px;font-family:'Liberation Sans', sans-serif;font-size:12.5px;line-height:12.5px;font-weight:normal;color:#ff1a1a;white-space:nowrap;-webkit-text-stroke:0.25px #ff1a1a;">S</div>
<div style="left:743px;top:977px;width:266.5px;height:1px;background:#000;"></div>
<div style="left:744.0px;top:978px;width:36.799999999999955px;height:20px;background:#e6e7e4;"></div>
<div style="left:781.8px;top:978px;width:36.90000000000009px;height:20px;background:#e6e7e4;"></div>
<div style="left:819.7px;top:978px;width:36.89999999999998px;height:20px;background:#e6e7e4;"></div>
<div style="left:857.6px;top:978px;width:36.89999999999998px;height:20px;background:#e6e7e4;"></div>
<div style="left:895.5px;top:978px;width:36.89999999999998px;height:20px;background:#88ccee;"></div>
<div style="left:910.45px;top:982.47px;font-family:'Liberation Sans', sans-serif;font-size:12.5px;line-height:12.5px;font-weight:normal;color:#141414;white-space:nowrap;-webkit-text-stroke:0.25px #141414;">1</div>
<div style="left:933.4px;top:978px;width:36.89999999999998px;height:20px;background:#88ccee;"></div>
<div style="left:948.35px;top:982.47px;font-family:'Liberation Sans', sans-serif;font-size:12.5px;line-height:12.5px;font-weight:normal;color:#141414;white-space:nowrap;-webkit-text-stroke:0.25px #141414;">2</div>
<div style="left:971.3px;top:978px;width:38.0px;height:20px;background:#332288;"></div>
<div style="left:986.55px;top:982.47px;font-family:'Liberation Sans', sans-serif;font-size:12.5px;line-height:12.5px;font-weight:normal;color:#141414;white-space:nowrap;-webkit-text-stroke:0.25px #141414;">3</div>
<div style="left:743px;top:998px;width:266.5px;height:1px;background:#000;"></div>
<div style="left:744.0px;top:999px;width:36.799999999999955px;height:18px;background:#aa4499;"></div>
<div style="left:758.90px;top:1003.47px;font-family:'Liberation Sans', sans-serif;font-size:12.5px;line-height:12.5px;font-weight:normal;color:#141414;white-space:nowrap;-webkit-text-stroke:0.25px #141414;">4</div>
<div style="left:781.8px;top:999px;width:36.90000000000009px;height:18px;background:#88ccee;"></div>
<div style="left:796.75px;top:1003.47px;font-family:'Liberation Sans', sans-serif;font-size:12.5px;line-height:12.5px;font-weight:normal;color:#141414;white-space:nowrap;-webkit-text-stroke:0.25px #141414;">5</div>
<div style="left:819.7px;top:999px;width:36.89999999999998px;height:18px;background:#88ccee;"></div>
<div style="left:834.65px;top:1003.47px;font-family:'Liberation Sans', sans-serif;font-size:12.5px;line-height:12.5px;font-weight:normal;color:#141414;white-space:nowrap;-webkit-text-stroke:0.25px #141414;">6</div>
<div style="left:857.6px;top:999px;width:36.89999999999998px;height:18px;background:#88ccee;"></div>
<div style="left:872.55px;top:1003.47px;font-family:'Liberation Sans', sans-serif;font-size:12.5px;line-height:12.5px;font-weight:normal;color:#141414;white-space:nowrap;-webkit-text-stroke:0.25px #141414;">7</div>
<div style="left:895.5px;top:999px;width:36.89999999999998px;height:18px;background:#88ccee;"></div>
<div style="left:910.45px;top:1003.47px;font-family:'Liberation Sans', sans-serif;font-size:12.5px;line-height:12.5px;font-weight:normal;color:#141414;white-space:nowrap;-webkit-text-stroke:0.25px #141414;">8</div>
<div style="left:933.4px;top:999px;width:36.89999999999998px;height:18px;background:#88ccee;"></div>
<div style="left:948.35px;top:1003.47px;font-family:'Liberation Sans', sans-serif;font-size:12.5px;line-height:12.5px;font-weight:normal;color:#141414;white-space:nowrap;-webkit-text-stroke:0.25px #141414;">9</div>
<div style="left:971.3px;top:999px;width:38.0px;height:18px;background:#332288;"></div>
<div style="left:983.10px;top:1003.47px;font-family:'Liberation Sans', sans-serif;font-size:12.5px;line-height:12.5px;font-weight:normal;color:#141414;white-space:nowrap;-webkit-text-stroke:0.25px #141414;">10</div>
<div style="left:743px;top:1019px;width:266.5px;height:1px;background:#000;"></div>
<div style="left:780.8px;top:978px;width:1.2999999999999545px;height:39px;background:#000;"></div>
<div style="left:818.7px;top:978px;width:1.2999999999999545px;height:39px;background:#000;"></div>
<div style="left:856.6px;top:978px;width:1.2999999999999545px;height:39px;background:#000;"></div>
<div style="left:894.5px;top:978px;width:1.2999999999999545px;height:39px;background:#000;"></div>
<div style="left:932.4px;top:978px;width:1.2999999999999545px;height:39px;background:#000;"></div>
<div style="left:970.3px;top:978px;width:1.2999999999999545px;height:39px;background:#000;"></div>
<div style="left:743px;top:978px;width:1.2000000000000455px;height:39px;background:#000;"></div>
<div style="left:1009.5px;top:54px;width:13.5px;height:963px;background:#e3e4e1;border-left:1px solid #c9cac7;box-sizing:border-box"></div>
<div style="left:1009.5px;top:67px;width:13.5px;height:428.5px;background:#f5f6f4;border-left:1px solid #c9cac7;border-bottom:1px solid #c9cac7;box-sizing:border-box"></div>
<div style="left:1009.5px;top:54px;width:13.5px;height:13.5px;background:#f5f6f4;border-left:1px solid #c9cac7;border-bottom:1px solid #d0d1ce;box-sizing:border-box"></div>
<svg style="position:absolute;left:1011px;top:56px;" width="11" height="9" viewBox="0 0 11 9"><polygon points="1.5,7 9.5,7 5.5,3" fill="#555"/></svg>
<div style="left:1009.5px;top:1003.5px;width:13.5px;height:13.5px;background:#f5f6f4;border-left:1px solid #c9cac7;border-top:1px solid #d0d1ce;box-sizing:border-box"></div>
<svg style="position:absolute;left:1011px;top:1006px;" width="11" height="9" viewBox="0 0 11 9"><polygon points="1.5,3 9.5,3 5.5,7" fill="#555"/></svg>
<div style="left:1023px;top:18px;width:250px;height:999px;background:#2d3134;"></div>
<svg style="position:absolute;left:1026px;top:500.7px;" width="8" height="8" viewBox="0 0 8 8"><circle cx="4" cy="4" r="3.6" fill="#d2d3d0"/></svg>
<svg style="position:absolute;left:1026px;top:512.8px;" width="8" height="8" viewBox="0 0 8 8"><circle cx="4" cy="4" r="3.6" fill="#d2d3d0"/></svg>
<svg style="position:absolute;left:1026px;top:524.8px;" width="8" height="8" viewBox="0 0 8 8"><circle cx="4" cy="4" r="3.6" fill="#d2d3d0"/></svg>
<div style="left:1038px;top:19px;width:78px;height:26px;background:#7f807d;border-top:1.2px solid #000;border-top-right-radius:5px;box-sizing:border-box"></div>
<div style="left:1049.60px;top:28.97px;font-family:'Liberation Sans', sans-serif;font-size:12.5px;line-height:12.5px;font-weight:normal;color:#f2f2f0;white-space:nowrap;-webkit-text-stroke:0.25px #f2f2f0;transform:scaleX(1.0148);transform-origin:0 0;">My Model</div>
<div style="left:1116px;top:19px;width:1.5px;height:25px;background:#000;"></div>
<div style="left:1117.3px;top:19px;width:61.700000000000045px;height:26px;background:#7f807d;border-top:1.2px solid #000;border-top-left-radius:5px;border-top-right-radius:5px;box-sizing:border-box"></div>
<div style="left:1128.30px;top:28.97px;font-family:'Liberation Sans', sans-serif;font-size:12.5px;line-height:12.5px;font-weight:normal;color:#f2f2f0;white-space:nowrap;-webkit-text-stroke:0.25px #f2f2f0;transform:scaleX(1.0131);transform-origin:0 0;">Library</div>
<div style="left:1178.5px;top:30px;width:1.5px;height:15px;background:#000;"></div>
<div style="left:1180px;top:19px;width:43.09999999999991px;height:30px;background:#91b2dd;border-top-left-radius:6px;border-top-right-radius:6px"></div>
<div style="left:1191.30px;top:28.97px;font-family:'Liberation Sans', sans-serif;font-size:12.5px;line-height:12.5px;font-weight:normal;color:#f4f6fa;white-space:nowrap;-webkit-text-stroke:0.25px #f4f6fa;transform:scaleX(0.9767);transform-origin:0 0;">Edit</div>
<div style="left:1038px;top:44px;width:185.0999999999999px;height:5px;background:#91b2dd;"></div>
<div style="left:1038px;top:49px;width:235px;height:1px;background:#000;"></div>
<div style="left:1038px;top:50px;width:235px;height:28px;background:linear-gradient(#91b4e0 0%,#7ea5d6 35%,#6590c5 70%,#5282bb 100%);"></div>
<div style="left:1038px;top:55px;width:28.299999999999955px;height:21px;background:rgba(30,50,80,0.28);"></div>
<div style="left:1066.8px;top:54px;width:57.799999999999955px;height:22px;background:rgba(255,255,255,0.25);"></div>
<svg style="position:absolute;left:1038px;top:50px;" width="90" height="28" viewBox="0 0 90 28"><path d="M14.80,6.80 L16.07,6.91 L16.90,4.43 L20.08,5.75 L18.92,8.09 L19.89,8.91 L20.71,9.88 L23.05,8.72 L24.37,11.90 L21.89,12.73 L22.00,14.00 L21.89,15.27 L24.37,16.10 L23.05,19.28 L20.71,18.12 L19.89,19.09 L18.92,19.91 L20.08,22.25 L16.90,23.57 L16.07,21.09 L14.80,21.20 L13.53,21.09 L12.70,23.57 L9.52,22.25 L10.68,19.91 L9.71,19.09 L8.89,18.12 L6.55,19.28 L5.23,16.10 L7.71,15.27 L7.60,14.00 L7.71,12.73 L5.23,11.90 L6.55,8.72 L8.89,9.88 L9.71,8.91 L10.68,8.09 L9.52,5.75 L12.70,4.43 L13.53,6.91Z" fill="#f4f6f8"/><circle cx="14.8" cy="14" r="2.6" fill="#5a7ca6"/><line x1="30.5" y1="16" x2="56.5" y2="16" stroke="#3a66ac" stroke-width="1.3"/><circle cx="43.5" cy="16" r="8.6" fill="#f6f8fb" stroke="#2f5ea6" stroke-width="1.5"/><ellipse cx="44.0" cy="18.5" rx="6" ry="4.5" fill="#a7bfe3"/><circle cx="43.0" cy="14.5" r="5" fill="#fbfcfd"/><line x1="43.5" y1="4" x2="43.5" y2="7.5" stroke="#3562a8" stroke-width="1.5"/><line x1="34.5" y1="6" x2="37.0" y2="9" stroke="#3562a8" stroke-width="1.4"/><line x1="52.5" y1="6" x2="50.0" y2="9" stroke="#3562a8" stroke-width="1.4"/><line x1="59.5" y1="16" x2="85.5" y2="16" stroke="#3a66ac" stroke-width="1.3"/><circle cx="72.5" cy="16" r="8.6" fill="#f6f8fb" stroke="#2f5ea6" stroke-width="1.5"/><ellipse cx="73.0" cy="18.5" rx="6" ry="4.5" fill="#a7bfe3"/><circle cx="72.0" cy="14.5" r="5" fill="#fbfcfd"/><line x1="72.5" y1="4" x2="72.5" y2="7.5" stroke="#3562a8" stroke-width="1.5"/><line x1="63.5" y1="6" x2="66.0" y2="9" stroke="#3562a8" stroke-width="1.4"/><line x1="81.5" y1="6" x2="79.0" y2="9" stroke="#3562a8" stroke-width="1.4"/></svg>
<div style="left:1038px;top:78px;width:235px;height:1px;background:#000;"></div>
<div style="left:1038px;top:79px;width:221px;height:31.5px;background:#7f807d;"></div>
<div style="left:1041.30px;top:88.47px;font-family:'Liberation Sans', sans-serif;font-size:12.5px;line-height:12.5px;font-weight:bold;color:#0d0d0d;white-space:nowrap;-webkit-text-stroke:0px #0d0d0d;transform:scaleX(0.9485);transform-origin:0 0;">OS:Schedule:Day</div>
<div style="left:1038px;top:110.5px;width:221px;height:906.5px;background:#e6e8e4;"></div>
<div style="left:1038px;top:110px;width:107px;height:1px;background:#000;"></div>
<div style="left:1047.00px;top:122.98px;font-family:'Liberation Sans', sans-serif;font-size:12.5px;line-height:12.5px;font-weight:normal;color:#111;white-space:nowrap;-webkit-text-stroke:0.25px #111;">Name</div>
<div style="left:1047px;top:143.4px;width:202.79999999999995px;height:24.30000000000001px;background:#eff0ed;border:1px solid #aaaba8;border-radius:3px;box-sizing:border-box"></div>
<div style="left:1050.00px;top:150.18px;font-family:'Liberation Sans', sans-serif;font-size:12.5px;line-height:12.5px;font-weight:normal;color:#c3bfbf;white-space:nowrap;-webkit-text-stroke:0.25px #c3bfbf;">Office Bldg Equip Default Schedule</div>
<div style="left:1038px;top:177px;width:221px;height:1px;background:#7f807d;"></div>
<div style="left:1047.00px;top:189.90px;font-family:'Liberation Sans', sans-serif;font-size:12.5px;line-height:12.5px;font-weight:normal;color:#111;white-space:nowrap;-webkit-text-stroke:0.25px #111;">Schedule Type Limits Name</div>
<div style="left:1047px;top:210.32000000000002px;width:202.79999999999995px;height:24.30000000000001px;background:#eff0ed;border:1px solid #aaaba8;border-radius:3px;box-sizing:border-box"></div>
<div style="left:1050.00px;top:217.10px;font-family:'Liberation Sans', sans-serif;font-size:12.5px;line-height:12.5px;font-weight:normal;color:#c3bfbf;white-space:nowrap;-webkit-text-stroke:0.25px #c3bfbf;">Fraction</div>
<div style="left:1038px;top:244px;width:221px;height:1px;background:#7f807d;"></div>
<div style="left:1047.00px;top:256.81px;font-family:'Liberation Sans', sans-serif;font-size:12.5px;line-height:12.5px;font-weight:normal;color:#111;white-space:nowrap;-webkit-text-stroke:0.25px #111;">Interpolate to Timestep</div>
<div style="left:1047px;top:277.24px;width:202.79999999999995px;height:24.299999999999955px;background:#eff0ed;border:1px solid #aaaba8;border-radius:3px;box-sizing:border-box"></div>
<div style="left:1050.00px;top:284.01px;font-family:'Liberation Sans', sans-serif;font-size:12.5px;line-height:12.5px;font-weight:normal;color:#c3bfbf;white-space:nowrap;-webkit-text-stroke:0.25px #c3bfbf;">No</div>
<div style="left:1038px;top:311px;width:221px;height:1px;background:#7f807d;"></div>
<div style="left:1047.00px;top:323.74px;font-family:'Liberation Sans', sans-serif;font-size:12.5px;line-height:12.5px;font-weight:normal;color:#111;white-space:nowrap;-webkit-text-stroke:0.25px #111;">Hour</div>
<div style="left:1047px;top:344.16px;width:189.5999999999999px;height:24.299999999999955px;background:#eff0ed;border:1px solid #aaaba8;border-radius:3px;box-sizing:border-box"></div>
<div style="left:1050.00px;top:350.94px;font-family:'Liberation Sans', sans-serif;font-size:12.5px;line-height:12.5px;font-weight:normal;color:#c3bfbf;white-space:nowrap;-webkit-text-stroke:0.25px #c3bfbf;">8</div>
<div style="left:1038px;top:378px;width:221px;height:1px;background:#7f807d;"></div>
<div style="left:1047.00px;top:390.66px;font-family:'Liberation Sans', sans-serif;font-size:12.5px;line-height:12.5px;font-weight:normal;color:#111;white-space:nowrap;-webkit-text-stroke:0.25px #111;">Minute</div>
<div style="left:1047px;top:411.08000000000004px;width:189.5999999999999px;height:24.299999999999955px;background:#eff0ed;border:1px solid #aaaba8;border-radius:3px;box-sizing:border-box"></div>
<div style="left:1050.00px;top:417.86px;font-family:'Liberation Sans', sans-serif;font-size:12.5px;line-height:12.5px;font-weight:normal;color:#c3bfbf;white-space:nowrap;-webkit-text-stroke:0.25px #c3bfbf;">0</div>
<div style="left:1038px;top:445px;width:221px;height:1px;background:#7f807d;"></div>
<div style="left:1047.00px;top:457.58px;font-family:'Liberation Sans', sans-serif;font-size:12.5px;line-height:12.5px;font-weight:normal;color:#111;white-space:nowrap;-webkit-text-stroke:0.25px #111;">Value Until Time</div>
<div style="left:1047px;top:478.0000000000001px;width:189.5999999999999px;height:24.299999999999955px;background:#eff0ed;border:1px solid #aaaba8;border-radius:3px;box-sizing:border-box"></div>
<div style="left:1050.00px;top:484.78px;font-family:'Liberation Sans', sans-serif;font-size:12.5px;line-height:12.5px;font-weight:normal;color:#c3bfbf;white-space:nowrap;-webkit-text-stroke:0.25px #c3bfbf;">0.4</div>
<div style="left:1038px;top:512px;width:221px;height:1px;background:#7f807d;"></div>
<div style="left:1047.00px;top:524.49px;font-family:'Liberation Sans', sans-serif;font-size:12.5px;line-height:12.5px;font-weight:normal;color:#111;white-space:nowrap;-webkit-text-stroke:0.25px #111;">Hour</div>
<div style="left:1047px;top:544.92px;width:189.5999999999999px;height:24.299999999999955px;background:#eff0ed;border:1px solid #aaaba8;border-radius:3px;box-sizing:border-box"></div>
<div style="left:1050.00px;top:551.69px;font-family:'Liberation Sans', sans-serif;font-size:12.5px;line-height:12.5px;font-weight:normal;color:#c3bfbf;white-space:nowrap;-webkit-text-stroke:0.25px #c3bfbf;">12</div>
<div style="left:1038px;top:579px;width:221px;height:1px;background:#7f807d;"></div>
<div style="left:1047.00px;top:591.41px;font-family:'Liberation Sans', sans-serif;font-size:12.5px;line-height:12.5px;font-weight:normal;color:#111;white-space:nowrap;-webkit-text-stroke:0.25px #111;">Minute</div>
<div style="left:1047px;top:611.84px;width:189.5999999999999px;height:24.299999999999955px;background:#eff0ed;border:1px solid #aaaba8;border-radius:3px;box-sizing:border-box"></div>
<div style="left:1050.00px;top:618.62px;font-family:'Liberation Sans', sans-serif;font-size:12.5px;line-height:12.5px;font-weight:normal;color:#c3bfbf;white-space:nowrap;-webkit-text-stroke:0.25px #c3bfbf;">0</div>
<div style="left:1038px;top:646px;width:221px;height:1px;background:#7f807d;"></div>
<div style="left:1047.00px;top:658.34px;font-family:'Liberation Sans', sans-serif;font-size:12.5px;line-height:12.5px;font-weight:normal;color:#111;white-space:nowrap;-webkit-text-stroke:0.25px #111;">Value Until Time</div>
<div style="left:1047px;top:678.7600000000001px;width:189.5999999999999px;height:24.299999999999955px;background:#eff0ed;border:1px solid #aaaba8;border-radius:3px;box-sizing:border-box"></div>
<div style="left:1050.00px;top:685.54px;font-family:'Liberation Sans', sans-serif;font-size:12.5px;line-height:12.5px;font-weight:normal;color:#c3bfbf;white-space:nowrap;-webkit-text-stroke:0.25px #c3bfbf;">0.9</div>
<div style="left:1038px;top:713px;width:221px;height:1px;background:#7f807d;"></div>
<div style="left:1047.00px;top:725.25px;font-family:'Liberation Sans', sans-serif;font-size:12.5px;line-height:12.5px;font-weight:normal;color:#111;white-space:nowrap;-webkit-text-stroke:0.25px #111;">Hour</div>
<div style="left:1047px;top:745.68px;width:189.5999999999999px;height:24.299999999999955px;background:#eff0ed;border:1px solid #aaaba8;border-radius:3px;box-sizing:border-box"></div>
<div style="left:1050.00px;top:752.45px;font-family:'Liberation Sans', sans-serif;font-size:12.5px;line-height:12.5px;font-weight:normal;color:#c3bfbf;white-space:nowrap;-webkit-text-stroke:0.25px #c3bfbf;">13</div>
<div style="left:1038px;top:780px;width:221px;height:1px;background:#7f807d;"></div>
<div style="left:1047.00px;top:792.17px;font-family:'Liberation Sans', sans-serif;font-size:12.5px;line-height:12.5px;font-weight:normal;color:#111;white-space:nowrap;-webkit-text-stroke:0.25px #111;">Minute</div>
<div style="left:1047px;top:812.6px;width:189.5999999999999px;height:24.299999999999955px;background:#eff0ed;border:1px solid #aaaba8;border-radius:3px;box-sizing:border-box"></div>
<div style="left:1050.00px;top:819.38px;font-family:'Liberation Sans', sans-serif;font-size:12.5px;line-height:12.5px;font-weight:normal;color:#c3bfbf;white-space:nowrap;-webkit-text-stroke:0.25px #c3bfbf;">0</div>
<div style="left:1038px;top:847px;width:221px;height:1px;background:#7f807d;"></div>
<div style="left:1047.00px;top:859.10px;font-family:'Liberation Sans', sans-serif;font-size:12.5px;line-height:12.5px;font-weight:normal;color:#111;white-space:nowrap;-webkit-text-stroke:0.25px #111;">Value Until Time</div>
<div style="left:1047px;top:879.5200000000001px;width:189.5999999999999px;height:24.299999999999955px;background:#eff0ed;border:1px solid #aaaba8;border-radius:3px;box-sizing:border-box"></div>
<div style="left:1050.00px;top:886.30px;font-family:'Liberation Sans', sans-serif;font-size:12.5px;line-height:12.5px;font-weight:normal;color:#c3bfbf;white-space:nowrap;-webkit-text-stroke:0.25px #c3bfbf;">0.8</div>
<div style="left:1038px;top:913px;width:221px;height:1px;background:#7f807d;"></div>
<div style="left:1047.00px;top:926.01px;font-family:'Liberation Sans', sans-serif;font-size:12.5px;line-height:12.5px;font-weight:normal;color:#111;white-space:nowrap;-webkit-text-stroke:0.25px #111;">Hour</div>
<div style="left:1047px;top:946.4399999999999px;width:189.5999999999999px;height:24.299999999999955px;background:#eff0ed;border:1px solid #aaaba8;border-radius:3px;box-sizing:border-box"></div>
<div style="left:1050.00px;top:953.21px;font-family:'Liberation Sans', sans-serif;font-size:12.5px;line-height:12.5px;font-weight:normal;color:#c3bfbf;white-space:nowrap;-webkit-text-stroke:0.25px #c3bfbf;">17</div>
<div style="left:1038px;top:980px;width:221px;height:1px;background:#7f807d;"></div>
<div style="left:1047.00px;top:992.93px;font-family:'Liberation Sans', sans-serif;font-size:12.5px;line-height:12.5px;font-weight:normal;color:#111;white-space:nowrap;-webkit-text-stroke:0.25px #111;">Minute</div>
<div style="left:1047px;top:1013.36px;width:189.5999999999999px;height:24.300000000000068px;background:#eff0ed;border:1px solid #aaaba8;border-radius:3px;box-sizing:border-box"></div>
<div style="left:1038px;top:1047px;width:221px;height:1px;background:#7f807d;"></div>
<div style="left:1259px;top:79px;width:14.200000000000045px;height:938px;background:#e3e4e1;border-left:1px solid #c9cac7;box-sizing:border-box"></div>
<div style="left:1259px;top:92.5px;width:14.200000000000045px;height:463.5px;background:#f5f6f4;border-left:1px solid #c9cac7;border-bottom:1px solid #c9cac7;box-sizing:border-box"></div>
<div style="left:1259px;top:79px;width:14.200000000000045px;height:13.5px;background:#f5f6f4;border-left:1px solid #c9cac7;border-bottom:1px solid #d0d1ce;box-sizing:border-box"></div>
<svg style="position:absolute;left:1261px;top:81px;" width="11" height="9" viewBox="0 0 11 9"><polygon points="1.5,7 9.5,7 5.5,3" fill="#555"/></svg>
<div style="left:1259px;top:1003.5px;width:14.200000000000045px;height:13.5px;background:#f5f6f4;border-left:1px solid #c9cac7;border-top:1px solid #d0d1ce;box-sizing:border-box"></div>
<svg style="position:absolute;left:1261px;top:1006px;" width="11" height="9" viewBox="0 0 11 9"><polygon points="1.5,3 9.5,3 5.5,7" fill="#555"/></svg>
<div style="left:0px;top:1017px;width:1273.2px;height:1.2000000000000455px;background:#000;"></div>
<div style="left:0px;top:1018.2px;width:1273.2px;height:13.799999999999955px;background:#9fa09d;"></div>
<div style="left:1273.2px;top:0px;width:1.7999999999999545px;height:1032px;background:#e2e3e0;"></div>
</div>
<div class="shot" style="left:1275px">
<div style="left:0px;top:0px;width:1273px;height:18px;background:#efefec;"></div>
<div style="left:3.50px;top:1.43px;font-family:'Liberation Sans', sans-serif;font-size:12.2px;line-height:12.2px;font-weight:normal;color:#1c1c1c;white-space:nowrap;-webkit-text-stroke:0.25px #1c1c1c;transform:scaleX(0.9391);transform-origin:0 0;">File</div>
<div style="left:3.5px;top:13px;width:7.543147208121827px;height:1px;background:#1c1c1c;"></div>
<div style="left:37.00px;top:1.43px;font-family:'Liberation Sans', sans-serif;font-size:12.2px;line-height:12.2px;font-weight:normal;color:#1c1c1c;white-space:nowrap;-webkit-text-stroke:0.25px #1c1c1c;transform:scaleX(1.0106);transform-origin:0 0;">Preferences</div>
<div style="left:37px;top:13px;width:8.686170212765958px;height:1px;background:#1c1c1c;"></div>
<div style="left:118.00px;top:1.43px;font-family:'Liberation Sans', sans-serif;font-size:12.2px;line-height:12.2px;font-weight:normal;color:#1c1c1c;white-space:nowrap;-webkit-text-stroke:0.25px #1c1c1c;transform:scaleX(1.0320);transform-origin:0 0;">Components &amp; Measures</div>
<div style="left:118px;top:13px;width:9.581395348837205px;height:1px;background:#1c1c1c;"></div>
<div style="left:275.00px;top:1.43px;font-family:'Liberation Sans', sans-serif;font-size:12.2px;line-height:12.2px;font-weight:normal;color:#1c1c1c;white-space:nowrap;-webkit-text-stroke:0.25px #1c1c1c;transform:scaleX(1.0359);transform-origin:0 0;">Help</div>
<div style="left:275px;top:13px;width:9.615537848605584px;height:1px;background:#1c1c1c;"></div>
<div style="left:0px;top:18px;width:37px;height:999px;background:#2d3134;"></div>
<svg style="position:absolute;left:0px;top:18px;" width="37" height="999" viewBox="0 0 37 999"><defs><linearGradient id="bn" x1="0" y1="0" x2="0" y2="1"><stop offset="0" stop-color="#e9eae7"/><stop offset="0.55" stop-color="#e4e5e2"/><stop offset="0.8" stop-color="#d2d3d0"/><stop offset="1" stop-color="#eceded"/></linearGradient><linearGradient id="gr" x1="0" y1="0" x2="1" y2="1"><stop offset="0" stop-color="#d9d9d9"/><stop offset="1" stop-color="#7d7d7d"/></linearGradient></defs><polygon points="0,25.30 16.50,28.80 33,25.30 33,63.00 16.50,66.50 0,63.00" fill="url(#bn)"/><ellipse cx="22" cy="50.0" rx="7" ry="4.5" fill="#000" opacity="0.13"/><defs><radialGradient id="gl" cx="0.4" cy="0.35" r="0.7"><stop offset="0" stop-color="#f2f2f2"/><stop offset="1" stop-color="#b9b9b9"/></radialGradient><clipPath id="gc"><circle cx="13" cy="46.0" r="10.6"/></clipPath></defs><circle cx="13" cy="46.0" r="10.6" fill="url(#gl)"/><g clip-path="url(#gc)" stroke="#8f8f8f" stroke-width="0.75" fill="none"><line x1="2" y1="36.4" x2="24" y2="36.4"/><line x1="2" y1="39.6" x2="24" y2="39.6"/><line x1="2" y1="42.8" x2="24" y2="42.8"/><line x1="2" y1="46.0" x2="24" y2="46.0"/><line x1="2" y1="49.2" x2="24" y2="49.2"/><line x1="2" y1="52.4" x2="24" y2="52.4"/><line x1="2" y1="55.6" x2="24" y2="55.6"/><ellipse cx="13" cy="46.0" rx="0.3" ry="10.6"/><ellipse cx="13" cy="46.0" rx="3.6" ry="10.6"/><ellipse cx="13" cy="46.0" rx="6.9" ry="10.6"/><ellipse cx="13" cy="46.0" rx="10.2" ry="10.6"/></g><circle cx="13" cy="46.0" r="10.6" fill="none" stroke="#7a7a7a" stroke-width="0.8"/><polygon points="0,66.80 16.5,70.30 37,66.80 37,105.00 16.5,108.50 0,105.00" fill="#8fb1de"/><polygon points="21.5,90.6 26.5,87.6 23.5,95.6" fill="#7f9cc4"/><polygon points="5.5,78.6 23.5,77.6 24.0,97.6 6.0,99.6" fill="#fbfbf8" stroke="#9a9a9a" stroke-width="0.6"/><polygon points="5.5,78.6 23.5,77.6 23.5,82.1 5.5,83.1" fill="#ee6d3c"/><rect x="7.2" y="85.1" width="2.8" height="2.4" fill="#ef7f55"/><rect x="11.4" y="84.9" width="2.8" height="2.4" fill="#f0936a"/><rect x="15.6" y="84.7" width="2.8" height="2.4" fill="#f4a870"/><rect x="19.8" y="84.5" width="2.8" height="2.4" fill="#eb7a4d"/><rect x="7.2" y="88.7" width="2.8" height="2.4" fill="#f0936a"/><rect x="11.4" y="88.5" width="2.8" height="2.4" fill="#f4a870"/><rect x="15.6" y="88.3" width="2.8" height="2.4" fill="#eb7a4d"/><rect x="19.8" y="88.1" width="2.8" height="2.4" fill="#ef7f55"/><rect x="7.2" y="92.3" width="2.8" height="2.4" fill="#f4a870"/><rect x="11.4" y="92.1" width="2.8" height="2.4" fill="#eb7a4d"/><rect x="15.6" y="91.9" width="2.8" height="2.4" fill="#ef7f55"/><rect x="19.8" y="91.7" width="2.8" height="2.4" fill="#f0936a"/><rect x="7.2" y="95.9" width="2.8" height="2.4" fill="#eb7a4d"/><rect x="11.4" y="95.7" width="2.8" height="2.4" fill="#ef7f55"/><rect x="15.6" y="95.5" width="2.8" height="2.4" fill="#f0936a"/><rect x="19.8" y="95.3" width="2.8" height="2.4" fill="#f4a870"/><rect x="9.7" y="75.6" width="1.8" height="4.5" fill="#3a3a3a"/><rect x="18.1" y="75.1" width="1.8" height="4.5" fill="#3a3a3a"/><polygon points="0,109.30 16.50,112.80 33,109.30 33,147.00 16.50,150.50 0,147.00" fill="url(#bn)"/><polygon points="24.5,130.0 30,129.0 24.5,138.0" fill="#b1b2af"/><polygon points="2.5,120.0 10.5,124.0 10.5,142.5 2.5,138.0" fill="#7b7b7b"/><polygon points="10.5,124.0 24.5,121.5 24.5,139.0 10.5,142.5" fill="#9d9d9d"/><polygon points="2.5,120.0 15,117.0 24.5,121.5 10.5,124.0" fill="#cfcfcf"/><polyline points="2.5,126.0 10.5,130.2 24.5,127.3" fill="none" stroke="#f4f4f4" stroke-width="1.1"/><polyline points="2.5,132.0 10.5,136.3 24.5,133.2" fill="none" stroke="#f4f4f4" stroke-width="1.1"/><line x1="17.5" y1="122.8" x2="17.5" y2="128.8" stroke="#f4f4f4" stroke-width="1.1"/><line x1="4.9" y1="121.2" x2="4.9" y2="127.2" stroke="#f4f4f4" stroke-width="1.1"/><line x1="14.0" y1="129.5" x2="14.0" y2="135.5" stroke="#f4f4f4" stroke-width="1.1"/><line x1="21.0" y1="128.0" x2="21.0" y2="134.0" stroke="#f4f4f4" stroke-width="1.1"/><line x1="6.5" y1="128.1" x2="6.5" y2="134.2" stroke="#f4f4f4" stroke-width="1.1"/><line x1="17.5" y1="134.8" x2="17.5" y2="140.8" stroke="#f4f4f4" stroke-width="1.1"/><line x1="4.9" y1="133.3" x2="4.9" y2="139.3" stroke="#f4f4f4" stroke-width="1.1"/><polyline points="2.5,120.0 10.5,124.0 24.5,121.5" fill="none" stroke="#f4f4f4" stroke-width="1.1"/><line x1="10.5" y1="124.0" x2="10.5" y2="142.5" stroke="#f4f4f4" stroke-width="1.1"/><line x1="6.5" y1="118.5" x2="19" y2="122.5" stroke="#f4f4f4" stroke-width="1"/><polygon points="0,151.30 16.50,154.80 33,151.30 33,189.00 16.50,192.50 0,189.00" fill="url(#bn)"/><ellipse cx="22" cy="174.3" rx="7" ry="4" fill="#000" opacity="0.12"/><rect x="5" y="161.3" width="18" height="20" rx="7" fill="#b3b3b3" stroke="#444" stroke-width="1.2" transform="rotate(-10 15 171.3)"/><rect x="10" y="165.3" width="1.5" height="5" fill="#333"/><rect x="17" y="164.3" width="1.5" height="5" fill="#333"/><circle cx="14" cy="175.3" r="2" fill="#333"/><polygon points="0,193.30 16.50,196.80 33,193.30 33,231.00 16.50,234.50 0,231.00" fill="url(#bn)"/><polygon points="24.5,212.8 29.5,211.9 24.5,223.5" fill="#a9aaa7"/><polygon points="2.00,204.30 4.93,206.03 4.93,211.63 2.00,210.03" fill="#8e8e8e" stroke="#555" stroke-width="0.7"/><polygon points="4.93,206.03 7.87,207.77 7.87,213.23 4.93,211.63" fill="#8e8e8e" stroke="#555" stroke-width="0.7"/><polygon points="7.87,207.77 10.80,209.50 10.80,214.83 7.87,213.23" fill="#f2f2f2" stroke="#555" stroke-width="0.7"/><polygon points="2.00,210.03 4.93,211.63 4.93,217.23 2.00,215.77" fill="#8e8e8e" stroke="#555" stroke-width="0.7"/><polygon points="4.93,211.63 7.87,213.23 7.87,218.70 4.93,217.23" fill="#8e8e8e" stroke="#555" stroke-width="0.7"/><polygon points="7.87,213.23 10.80,214.83 10.80,220.17 7.87,218.70" fill="#f2f2f2" stroke="#555" stroke-width="0.7"/><polygon points="2.00,215.77 4.93,217.23 4.93,222.83 2.00,221.50" fill="#8e8e8e" stroke="#555" stroke-width="0.7"/><polygon points="4.93,217.23 7.87,218.70 7.87,224.17 4.93,222.83" fill="#8e8e8e" stroke="#555" stroke-width="0.7"/><polygon points="7.87,218.70 10.80,220.17 10.80,225.50 7.87,224.17" fill="#5e5e5e" stroke="#555" stroke-width="0.7"/><polygon points="10.80,209.50 15.37,208.67 15.37,214.06 10.80,214.83" fill="#f2f2f2" stroke="#555" stroke-width="0.7"/><polygon points="15.37,208.67 19.93,207.83 19.93,213.28 15.37,214.06" fill="#f2f2f2" stroke="#555" stroke-width="0.7"/><polygon points="19.93,207.83 24.50,207.00 24.50,212.50 19.93,213.28" fill="#f2f2f2" stroke="#555" stroke-width="0.7"/><polygon points="10.80,214.83 15.37,214.06 15.37,219.44 10.80,220.17" fill="#f2f2f2" stroke="#555" stroke-width="0.7"/><polygon points="15.37,214.06 19.93,213.28 19.93,218.72 15.37,219.44" fill="#5e5e5e" stroke="#555" stroke-width="0.7"/><polygon points="19.93,213.28 24.50,212.50 24.50,218.00 19.93,218.72" fill="#f2f2f2" stroke="#555" stroke-width="0.7"/><polygon points="10.80,220.17 15.37,219.44 15.37,224.83 10.80,225.50" fill="#5e5e5e" stroke="#555" stroke-width="0.7"/><polygon points="15.37,219.44 19.93,218.72 19.93,224.17 15.37,224.83" fill="#f2f2f2" stroke="#555" stroke-width="0.7"/><polygon points="19.93,218.72 24.50,218.00 24.50,223.50 19.93,224.17" fill="#f2f2f2" stroke="#555" stroke-width="0.7"/><polygon points="16.00,202.00 18.83,203.67 14.20,204.46 11.33,202.77" fill="#f2f2f2" stroke="#555" stroke-width="0.7"/><polygon points="18.83,203.67 21.67,205.33 17.07,206.14 14.20,204.46" fill="#f2f2f2" stroke="#555" stroke-width="0.7"/><polygon points="21.67,205.33 24.50,207.00 19.93,207.83 17.07,206.14" fill="#f2f2f2" stroke="#555" stroke-width="0.7"/><polygon points="11.33,202.77 14.20,204.46 9.57,205.24 6.67,203.53" fill="#f2f2f2" stroke="#555" stroke-width="0.7"/><polygon points="14.20,204.46 17.07,206.14 12.47,206.96 9.57,205.24" fill="#f2f2f2" stroke="#555" stroke-width="0.7"/><polygon points="17.07,206.14 19.93,207.83 15.37,208.67 12.47,206.96" fill="#f2f2f2" stroke="#555" stroke-width="0.7"/><polygon points="6.67,203.53 9.57,205.24 4.93,206.03 2.00,204.30" fill="#f2f2f2" stroke="#555" stroke-width="0.7"/><polygon points="9.57,205.24 12.47,206.96 7.87,207.77 4.93,206.03" fill="#f2f2f2" stroke="#555" stroke-width="0.7"/><polygon points="12.47,206.96 15.37,208.67 10.80,209.50 7.87,207.77" fill="#f2f2f2" stroke="#555" stroke-width="0.7"/><polygon points="0,235.30 16.50,238.80 33,235.30 33,273.00 16.50,276.50 0,273.00" fill="url(#bn)"/><polygon points="26,250.8 32,249.8 26,261.8" fill="#b4b5b2"/><polygon points="3,244.8 25,243.8 25.5,264.3 4.5,267.3" fill="#cfcfcf" stroke="#555" stroke-width="1"/><polygon points="9.5,247.3 23,246.3 23,262.3 9.5,264.8" fill="#d9d9d9" stroke="#333" stroke-width="1.3"/><line x1="4.5" y1="245.3" x2="6" y2="266.8" stroke="#777" stroke-width="1.5"/><polyline points="9.5,256.3 16.5,255.8 16.5,246.8" fill="none" stroke="#333" stroke-width="1.3"/><polyline points="19.5,254.8 23,254.8" fill="none" stroke="#333" stroke-width="1.3"/><path d="M12,264.5 Q17,263.8 19,259.8 L23,258.8" fill="none" stroke="#333" stroke-width="1.2"/><polygon points="0,277.30 16.50,280.80 33,277.30 33,315.00 16.50,318.50 0,315.00" fill="url(#bn)"/><polygon points="25,298.0 31,299.0 24,308.0" fill="#b1b2af"/><path d="M2,290.0 Q5,287.0 9,286.0 L9,310.5 L2,307.0 Z" fill="#6d6d6d"/><path d="M8.5,289.0 Q14,284.0 21,287.0 L23.5,291.0 L23.5,307.0 L8.5,310.5 Z" fill="#e4e4e4" stroke="#9a9a9a" stroke-width="0.5"/><path d="M8.5,289.0 Q14,284.0 21,287.0 L19,290.0 Q13,288.0 8.5,291.0 Z" fill="#b9b9b9"/><rect x="10.0" y="292.5" width="1.3" height="1.5" fill="#444"/><rect x="12.7" y="292.4" width="1.3" height="1.5" fill="#444"/><rect x="15.4" y="292.2" width="1.3" height="1.5" fill="#444"/><rect x="18.1" y="292.1" width="1.3" height="1.5" fill="#444"/><rect x="20.8" y="291.9" width="1.3" height="1.5" fill="#444"/><rect x="10.0" y="295.2" width="1.3" height="1.5" fill="#444"/><rect x="12.7" y="295.1" width="1.3" height="1.5" fill="#444"/><rect x="15.4" y="294.9" width="1.3" height="1.5" fill="#444"/><rect x="18.1" y="294.8" width="1.3" height="1.5" fill="#444"/><rect x="20.8" y="294.6" width="1.3" height="1.5" fill="#444"/><rect x="10.0" y="297.9" width="1.3" height="1.5" fill="#444"/><rect x="12.7" y="297.8" width="1.3" height="1.5" fill="#444"/><rect x="15.4" y="297.6" width="1.3" height="1.5" fill="#444"/><rect x="18.1" y="297.4" width="1.3" height="1.5" fill="#444"/><rect x="20.8" y="297.3" width="1.3" height="1.5" fill="#444"/><rect x="10.0" y="300.6" width="1.3" height="1.5" fill="#444"/><rect x="12.7" y="300.5" width="1.3" height="1.5" fill="#444"/><rect x="15.4" y="300.3" width="1.3" height="1.5" fill="#444"/><rect x="18.1" y="300.2" width="1.3" height="1.5" fill="#444"/><rect x="20.8" y="300.0" width="1.3" height="1.5" fill="#444"/><rect x="10.0" y="303.3" width="1.3" height="1.5" fill="#444"/><rect x="12.7" y="303.2" width="1.3" height="1.5" fill="#444"/><rect x="15.4" y="303.0" width="1.3" height="1.5" fill="#444"/><rect x="18.1" y="302.9" width="1.3" height="1.5" fill="#444"/><rect x="20.8" y="302.7" width="1.3" height="1.5" fill="#444"/><rect x="10.0" y="306.0" width="1.3" height="1.5" fill="#444"/><rect x="12.7" y="305.9" width="1.3" height="1.5" fill="#444"/><rect x="15.4" y="305.7" width="1.3" height="1.5" fill="#444"/><rect x="18.1" y="305.6" width="1.3" height="1.5" fill="#444"/><rect x="20.8" y="305.4" width="1.3" height="1.5" fill="#444"/><polygon points="0,319.30 16.50,322.80 33,319.30 33,357.00 16.50,360.50 0,357.00" fill="url(#bn)"/><polygon points="24,339.0 28,341.0 24,345.0" fill="#b1b2af"/><polygon points="3.5,337.5 15,332.5 25,336.5 11.5,341.5" fill="#d6d6d6" stroke="#666" stroke-width="0.6"/><polygon points="3.5,337.5 11.5,341.5 11.5,348.0 3.5,344.0" fill="#a9a9a9" stroke="#666" stroke-width="0.6"/><polygon points="11.5,341.5 25,336.5 24.5,344.0 11.5,348.0" fill="#c4c4c4" stroke="#666" stroke-width="0.6"/><polygon points="0,361.30 16.50,364.80 33,361.30 33,399.00 16.50,402.50 0,399.00" fill="url(#bn)"/><polygon points="24.8,381.4 29.8,380.6 24.8,392.5" fill="#a9aaa7"/><polygon points="3.00,373.30 7.30,375.30 7.30,384.27 3.00,382.65" fill="#cfcfcf" stroke="#555" stroke-width="0.7"/><polygon points="7.30,375.30 11.60,377.30 11.60,385.90 7.30,384.27" fill="#cfcfcf" stroke="#555" stroke-width="0.7"/><polygon points="3.00,382.65 7.30,384.27 7.30,393.25 3.00,392.00" fill="#cfcfcf" stroke="#555" stroke-width="0.7"/><polygon points="7.30,384.27 11.60,385.90 11.60,394.50 7.30,393.25" fill="#3e4346" stroke="#555" stroke-width="0.7"/><polygon points="11.60,377.30 18.20,376.40 18.20,384.95 11.60,385.90" fill="#ececec" stroke="#555" stroke-width="0.7"/><polygon points="18.20,376.40 24.80,375.50 24.80,384.00 18.20,384.95" fill="#ececec" stroke="#555" stroke-width="0.7"/><polygon points="11.60,385.90 18.20,384.95 18.20,393.50 11.60,394.50" fill="#676767" stroke="#555" stroke-width="0.7"/><polygon points="18.20,384.95 24.80,384.00 24.80,392.50 18.20,393.50" fill="#ececec" stroke="#555" stroke-width="0.7"/><polygon points="17.50,371.00 21.15,373.25 14.22,374.27 10.25,372.15" fill="#f4f4f4" stroke="#555" stroke-width="0.7"/><polygon points="21.15,373.25 24.80,375.50 18.20,376.40 14.22,374.27" fill="#f4f4f4" stroke="#555" stroke-width="0.7"/><polygon points="10.25,372.15 14.22,374.27 7.30,375.30 3.00,373.30" fill="#f4f4f4" stroke="#555" stroke-width="0.7"/><polygon points="14.22,374.27 18.20,376.40 11.60,377.30 7.30,375.30" fill="#f4f4f4" stroke="#555" stroke-width="0.7"/><polygon points="0,403.30 16.50,406.80 33,403.30 33,441.00 16.50,444.50 0,441.00" fill="url(#bn)"/><ellipse cx="22" cy="426.3" rx="7" ry="4" fill="#000" opacity="0.12"/><polyline points="13,416.3 4,416.3 4,431.3 11,431.3" fill="none" stroke="#666" stroke-width="2.4"/><polyline points="18,431.3 27,431.3 27,416.3 20,416.3" fill="none" stroke="#666" stroke-width="2.4"/><polygon points="12,412.3 18,416.3 12,420.3" fill="#111"/><polygon points="18,427.3 12,431.3 18,435.3" fill="#111"/><polygon points="0,445.30 16.50,448.80 33,445.30 33,483.00 16.50,486.50 0,483.00" fill="url(#bn)"/><ellipse cx="22" cy="468.3" rx="7" ry="4" fill="#000" opacity="0.12"/><path d="M4,459.3 C11,453.3 12,469.3 19,474.3" fill="none" stroke="#5f5f5f" stroke-width="3.5"/><path d="M6,474.3 C12,467.3 17,455.3 26,457.3" fill="none" stroke="#777" stroke-width="3.2"/><polygon points="0,487.30 16.50,490.80 33,487.30 33,525.00 16.50,528.50 0,525.00" fill="url(#bn)"/><ellipse cx="22" cy="510.3" rx="7" ry="4" fill="#000" opacity="0.12"/><path d="M14.00,496.80 L16.05,497.00 L16.87,500.37 L18.17,501.06 L21.42,499.88 L22.73,501.47 L20.93,504.43 L21.36,505.84 L24.50,507.30 L24.30,509.35 L20.93,510.17 L20.24,511.47 L21.42,514.72 L19.83,516.03 L16.87,514.23 L15.46,514.66 L14.00,517.80 L11.95,517.60 L11.13,514.23 L9.83,513.54 L6.58,514.72 L5.27,513.13 L7.07,510.17 L6.64,508.76 L3.50,507.30 L3.70,505.25 L7.07,504.43 L7.76,503.13 L6.58,499.88 L8.17,498.57 L11.13,500.37 L12.54,499.94Z" fill="#8d8d8d" stroke="#555" stroke-width="0.6"/><circle cx="14" cy="507.3" r="3" fill="#eee"/><polygon points="0,529.30 16.50,532.80 33,529.30 33,567.00 16.50,570.50 0,567.00" fill="url(#bn)"/><ellipse cx="22" cy="552.3" rx="7" ry="4" fill="#000" opacity="0.12"/><path d="M4,539.3 L21,538.3 C19,545.3 20,551.3 22,554.3 L9,559.3 C6,553.3 5,545.3 4,539.3Z" fill="#a8a8a8" stroke="#666" stroke-width="0.8"/><ellipse cx="18" cy="556.3" rx="6" ry="3" fill="#d8d8d8" stroke="#666" stroke-width="0.8"/><polygon points="0,571.30 16.50,574.80 33,571.30 33,609.00 16.50,612.50 0,609.00" fill="url(#bn)"/><ellipse cx="22" cy="594.3" rx="7" ry="4" fill="#000" opacity="0.12"/><circle cx="15" cy="591.3" r="10.5" fill="url(#gr)" stroke="#444" stroke-width="1.4"/><polygon points="11,585.3 21,591.3 11,597.3" fill="#e6e6e6" stroke="#777" stroke-width="0.6"/><polygon points="0,613.30 16.50,616.80 33,613.30 33,651.00 16.50,654.50 0,651.00" fill="url(#bn)"/><polygon points="19,628.3 28,628.3 21,640.3" fill="#a8a8a8"/><rect x="5" y="624.3" width="17" height="17" fill="#d5d5d5" stroke="#555" stroke-width="1.2"/><rect x="8.0" y="637.3" width="2" height="4" fill="#555"/><rect x="11.8" y="634.3" width="2" height="7" fill="#555"/><rect x="15.6" y="631.3" width="2" height="10" fill="#555"/><rect x="19.4" y="627.3" width="2" height="14" fill="#555"/></svg>
<div style="left:37px;top:18px;width:986px;height:25px;background:linear-gradient(90deg,#8fb2df 0%,#7fa6d6 15%,#6b9ccd 35%,#6894c5 55%,#5e8cc0 75%,#4d82b8 100%);"></div>
<div style="left:37px;top:43px;width:7px;height:974px;background:#8fb1de;"></div>
<div style="left:44.50px;top:27.00px;font-family:'Liberation Sans', sans-serif;font-size:13.3px;line-height:13.3px;font-weight:normal;color:#eaf0f8;white-space:nowrap;-webkit-text-stroke:0px #eaf0f8;transform:scaleX(1.0548);transform-origin:0 0;">Schedules</div>
<div style="left:114px;top:23px;width:100px;height:21px;background:#b8cde8;border:1px solid #000;border-bottom:none;box-sizing:border-box"></div>
<div style="left:125.30px;top:27.88px;font-family:'Liberation Sans', sans-serif;font-size:12.5px;line-height:12.5px;font-weight:normal;color:#1a1a1a;white-space:nowrap;-webkit-text-stroke:0.25px #1a1a1a;transform:scaleX(0.9553);transform-origin:0 0;">Schedule Sets</div>
<div style="left:313px;top:23px;width:115px;height:21px;background:#b8cde8;border:1px solid #000;border-bottom:none;box-sizing:border-box"></div>
<div style="left:324.00px;top:27.88px;font-family:'Liberation Sans', sans-serif;font-size:12.5px;line-height:12.5px;font-weight:normal;color:#1a1a1a;white-space:nowrap;-webkit-text-stroke:0.25px #1a1a1a;transform:scaleX(0.9936);transform-origin:0 0;">Other Schedules</div>
<div style="left:44px;top:43px;width:979px;height:975px;background:#e6e8e4;border-left:1px solid #000;border-top:1px solid #000;border-top-left-radius:6px;box-sizing:border-box"></div>
<div style="left:224px;top:23px;width:79px;height:22px;background:#e6e8e4;border:1px solid #000;border-bottom:none;box-sizing:border-box"></div>
<div style="left:235.00px;top:29.18px;font-family:'Liberation Sans', sans-serif;font-size:12.5px;line-height:12.5px;font-weight:normal;color:#1a1a1a;white-space:nowrap;-webkit-text-stroke:0.25px #1a1a1a;transform:scaleX(0.9675);transform-origin:0 0;">Schedules</div>
<div style="left:51px;top:53px;width:972px;height:1px;background:#000;"></div>
<div style="left:51px;top:53px;width:1px;height:964px;background:#000;"></div>
<div style="left:242px;top:54px;width:2px;height:963px;background:#3a4141;"></div>
<div style="left:52px;top:54px;width:190px;height:50px;background:#cfd0cd;"></div>
<div style="left:52px;top:104px;width:190px;height:2px;background:#000;"></div>
<div style="left:57.40px;top:73.97px;font-family:'Liberation Sans', sans-serif;font-size:12.5px;line-height:12.5px;font-weight:normal;color:#1a1a1a;white-space:nowrap;-webkit-text-stroke:0.25px #1a1a1a;transform:scaleX(1.0187);transform-origin:0 0;">Office Activity</div>
<svg style="position:absolute;left:226px;top:73.5px;" width="11" height="11" viewBox="0 0 11 11"><polygon points="10.5,0.5 10.5,10.5 0.5,5.5" fill="#7a7b79"/></svg>
<div style="left:52px;top:106px;width:190px;height:6px;background:#646462;"></div>
<div style="left:52px;top:112px;width:190px;height:44px;background:#a3a4a1;"></div>
<div style="left:52px;top:156px;width:190px;height:1px;background:#000;"></div>
<div style="left:57.40px;top:126.17px;font-family:'Liberation Sans', sans-serif;font-size:12.5px;line-height:12.5px;font-weight:normal;color:#1a1a1a;white-space:nowrap;-webkit-text-stroke:0.25px #1a1a1a;transform:scaleX(0.9917);transform-origin:0 0;">Office Bldg Equip</div>
<svg style="position:absolute;left:226px;top:126px;" width="11" height="11" viewBox="0 0 11 11"><polygon points="0.5,0.5 10.5,0.5 5.5,10.5" fill="#7a7b79"/></svg>
<div style="left:57.40px;top:165.68px;font-family:'Liberation Sans', sans-serif;font-size:12.5px;line-height:12.5px;font-weight:normal;color:#1a1a1a;white-space:nowrap;-webkit-text-stroke:0.25px #1a1a1a;transform:scaleX(0.9669);transform-origin:0 0;">Special Day Profiles</div>
<div style="left:57px;top:184px;width:180px;height:1.1999999999999886px;background:#000;"></div>
<div style="left:57px;top:208px;width:180px;height:1.1999999999999886px;background:#000;"></div>
<div style="left:57px;top:214px;width:180px;height:1.1999999999999886px;background:#000;"></div>
<div style="left:57px;top:238px;width:180px;height:1.1999999999999886px;background:#000;"></div>
<div style="left:57px;top:244px;width:180px;height:1.1999999999999886px;background:#000;"></div>
<div style="left:57px;top:268px;width:180px;height:1.1999999999999886px;background:#000;"></div>
<div style="left:67.00px;top:191.18px;font-family:'Liberation Sans', sans-serif;font-size:12.5px;line-height:12.5px;font-weight:normal;color:#1a1a1a;white-space:nowrap;-webkit-text-stroke:0.25px #1a1a1a;transform:scaleX(0.9948);transform-origin:0 0;">Summer Design Day</div>
<div style="left:67.00px;top:220.58px;font-family:'Liberation Sans', sans-serif;font-size:12.5px;line-height:12.5px;font-weight:normal;color:#1a1a1a;white-space:nowrap;-webkit-text-stroke:0.25px #1a1a1a;transform:scaleX(1.0077);transform-origin:0 0;">Winter Design Day</div>
<div style="left:67.00px;top:250.38px;font-family:'Liberation Sans', sans-serif;font-size:12.5px;line-height:12.5px;font-weight:normal;color:#1a1a1a;white-space:nowrap;-webkit-text-stroke:0.25px #1a1a1a;transform:scaleX(1.0192);transform-origin:0 0;">Holiday</div>
<div style="left:67.00px;top:277.18px;font-family:'Liberation Sans', sans-serif;font-size:12.5px;line-height:12.5px;font-weight:normal;color:#1a1a1a;white-space:nowrap;-webkit-text-stroke:0.25px #1a1a1a;">Run Period Profiles</div>
<svg style="position:absolute;left:219px;top:276px;" width="16" height="16" viewBox="0 0 16 16"><defs><radialGradient id="g8fd88f" cx="0.35" cy="0.25" r="0.8"><stop offset="0" stop-color="#8fd88f"/><stop offset="0.55" stop-color="#3ea33e"/><stop offset="1" stop-color="#2a7a2a"/></radialGradient><clipPath id="cg8fd88f"><circle cx="8" cy="8" r="5.8"/></clipPath></defs><circle cx="8" cy="8" r="7" fill="url(#g8fd88f)"/><rect x="3.5" y="6.6" width="9" height="2.8" fill="#fff"/><rect x="6.6" y="3.5" width="2.8" height="9" fill="#fff"/></svg>
<div style="left:57px;top:299.1px;width:180px;height:1.1999999999999886px;background:#000;"></div>
<div style="left:57px;top:299.6px;width:1px;height:23.599999999999966px;background:#000;"></div>
<div style="left:58px;top:299.6px;width:4px;height:23.599999999999966px;background:#aa4499;"></div>
<div style="left:62px;top:299.6px;width:1px;height:23.599999999999966px;background:#000;"></div>
<div style="left:57px;top:322.7px;width:180px;height:1.1999999999999886px;background:#000;"></div>
<div style="left:67.00px;top:305.68px;font-family:'Liberation Sans', sans-serif;font-size:12.5px;line-height:12.5px;font-weight:normal;color:#1a1a1a;white-space:nowrap;-webkit-text-stroke:0.25px #1a1a1a;">Priority 1</div>
<div style="left:57px;top:323.2px;width:1px;height:25.100000000000023px;background:#000;"></div>
<div style="left:58px;top:323.2px;width:4px;height:25.100000000000023px;background:#332288;"></div>
<div style="left:62px;top:323.2px;width:1px;height:25.100000000000023px;background:#000;"></div>
<div style="left:57px;top:347.8px;width:180px;height:1.1999999999999886px;background:#000;"></div>
<div style="left:67.00px;top:331.18px;font-family:'Liberation Sans', sans-serif;font-size:12.5px;line-height:12.5px;font-weight:normal;color:#1a1a1a;white-space:nowrap;-webkit-text-stroke:0.25px #1a1a1a;">Priority 2</div>
<div style="left:57px;top:353.9px;width:180px;height:1.1999999999999886px;background:#000;"></div>
<div style="left:57px;top:354.4px;width:1px;height:23.80000000000001px;background:#000;"></div>
<div style="left:58px;top:354.4px;width:4px;height:23.80000000000001px;background:#88ccee;"></div>
<div style="left:62px;top:354.4px;width:1px;height:23.80000000000001px;background:#000;"></div>
<div style="left:57px;top:377.7px;width:180px;height:1.1999999999999886px;background:#000;"></div>
<div style="left:67.00px;top:361.18px;font-family:'Liberation Sans', sans-serif;font-size:12.5px;line-height:12.5px;font-weight:normal;color:#1a1a1a;white-space:nowrap;-webkit-text-stroke:0.25px #1a1a1a;">Default</div>
<div style="left:52px;top:383.5px;width:190px;height:1.5px;background:#000;"></div>
<div style="left:52px;top:385px;width:190px;height:50px;background:#cfd0cd;"></div>
<div style="left:52px;top:435px;width:190px;height:2px;background:#000;"></div>
<div style="left:57.40px;top:404.18px;font-family:'Liberation Sans', sans-serif;font-size:12.5px;line-height:12.5px;font-weight:normal;color:#1a1a1a;white-space:nowrap;-webkit-text-stroke:0.25px #1a1a1a;transform:scaleX(1.0186);transform-origin:0 0;">Office Bldg Light</div>
<svg style="position:absolute;left:226px;top:403.7px;" width="11" height="11" viewBox="0 0 11 11"><polygon points="10.5,0.5 10.5,10.5 0.5,5.5" fill="#7a7b79"/></svg>
<div style="left:52px;top:437px;width:190px;height:50px;background:#cfd0cd;"></div>
<div style="left:52px;top:487px;width:190px;height:2px;background:#000;"></div>
<div style="left:57.40px;top:456.98px;font-family:'Liberation Sans', sans-serif;font-size:12.5px;line-height:12.5px;font-weight:normal;color:#1a1a1a;white-space:nowrap;-webkit-text-stroke:0.25px #1a1a1a;transform:scaleX(1.0305);transform-origin:0 0;">Office Infil Quarter On</div>
<svg style="position:absolute;left:226px;top:456.5px;" width="11" height="11" viewBox="0 0 11 11"><polygon points="10.5,0.5 10.5,10.5 0.5,5.5" fill="#7a7b79"/></svg>
<div style="left:52px;top:489px;width:190px;height:50px;background:#cfd0cd;"></div>
<div style="left:52px;top:539px;width:190px;height:2px;background:#000;"></div>
<div style="left:57.40px;top:508.78px;font-family:'Liberation Sans', sans-serif;font-size:12.5px;line-height:12.5px;font-weight:normal;color:#1a1a1a;white-space:nowrap;-webkit-text-stroke:0.25px #1a1a1a;">Office Work Occ</div>
<svg style="position:absolute;left:226px;top:508.3px;" width="11" height="11" viewBox="0 0 11 11"><polygon points="10.5,0.5 10.5,10.5 0.5,5.5" fill="#7a7b79"/></svg>
<div style="left:52px;top:873px;width:190px;height:1px;background:#000;"></div>
<div style="left:62.3px;top:883.7px;width:169.5px;height:78.59999999999991px;background:#cfd0cd;border:2px dashed #7f807d;border-radius:8px;box-sizing:border-box"></div>
<div style="left:92.60px;top:916.57px;font-family:'Liberation Sans', sans-serif;font-size:12.5px;line-height:12.5px;font-weight:bold;color:#8c8d8b;white-space:nowrap;-webkit-text-stroke:0px #8c8d8b;transform:scaleX(0.9927);transform-origin:0 0;">Drag From Library</div>
<div style="left:52px;top:973px;width:190px;height:1px;background:#000;"></div>
<div style="left:52px;top:974px;width:190px;height:43px;background:#7f807d;"></div>
<svg style="position:absolute;left:62px;top:983px;" width="24" height="24" viewBox="0 0 24 24"><defs><radialGradient id="gb4e49a" cx="0.35" cy="0.25" r="0.8"><stop offset="0" stop-color="#b4e49a"/><stop offset="0.55" stop-color="#6cbc4a"/><stop offset="1" stop-color="#3faa55"/></radialGradient><clipPath id="cgb4e49a"><circle cx="12" cy="12" r="9.8"/></clipPath></defs><circle cx="12" cy="12" r="11" fill="url(#gb4e49a)"/><rect x="1" y="15.5" width="22" height="11" fill="#2e7a38" clip-path="url(#cgb4e49a)"/><rect x="5.5" y="10" width="13" height="4.2" fill="#fff"/><rect x="9.9" y="5.5" width="4.2" height="13" fill="#fff"/></svg>
<svg style="position:absolute;left:91px;top:983px;" width="24" height="24" viewBox="0 0 24 24"><defs><radialGradient id="g8fd0f4" cx="0.35" cy="0.25" r="0.8"><stop offset="0" stop-color="#8fd0f4"/><stop offset="0.55" stop-color="#3a8fd8"/><stop offset="1" stop-color="#1f5fc0"/></radialGradient><clipPath id="cg8fd0f4"><circle cx="12" cy="12" r="9.8"/></clipPath></defs><circle cx="12" cy="12" r="11" fill="url(#g8fd0f4)"/><rect x="1" y="16.8" width="22" height="11" fill="#1e3f7a" clip-path="url(#cg8fd0f4)"/><path d="M5.5,7.5 L11,16 M11,7.5 L5.5,16" stroke="#fff" stroke-width="2.6"/><path d="M12.3,9.6 Q13,7.2 15.5,7.2 Q18.3,7.3 18.2,9.8 Q18,11.8 15,13.5 L12.6,15 L18.8,15" fill="none" stroke="#fff" stroke-width="2.3" stroke-linejoin="round"/></svg>
<svg style="position:absolute;left:120px;top:983px;" width="24" height="24" viewBox="0 0 24 24"><defs><radialGradient id="gffb080" cx="0.35" cy="0.25" r="0.8"><stop offset="0" stop-color="#ffb080"/><stop offset="0.55" stop-color="#f06a38"/><stop offset="1" stop-color="#e8501e"/></radialGradient><clipPath id="cgffb080"><circle cx="12" cy="12" r="9.8"/></clipPath></defs><circle cx="12" cy="12" r="11" fill="url(#gffb080)"/><rect x="1" y="17" width="22" height="11" fill="#c42a20" clip-path="url(#cgffb080)"/><path d="M8.8,8.8 L15.5,15.5 M15.5,8.8 L8.8,15.5" stroke="#fff" stroke-width="3.4" stroke-linecap="round"/></svg>
<svg style="position:absolute;left:209px;top:983px;" width="22" height="24" viewBox="0 0 22 24"><defs><clipPath id="tbody"><path d="M1.8,4 L20.2,4 L18.6,22.5 Q11,24 3.4,22.5 Z"/></clipPath></defs><path d="M1.8,4 L20.2,4 L18.6,22.5 Q11,24 3.4,22.5 Z" fill="#f25a22"/><rect x="0" y="18.5" width="22" height="6" fill="#c8281e" clip-path="url(#tbody)"/><ellipse cx="11" cy="3.6" rx="9.6" ry="2.9" fill="#c9cac8"/><ellipse cx="11" cy="3.4" rx="8.2" ry="1.9" fill="#3a3a3a"/><g transform="rotate(-20 11 13.6)"><circle cx="11" cy="13.6" r="4.9" fill="none" stroke="#f6f6f6" stroke-width="3.6" stroke-dasharray="7.2 3.06"/></g><polygon points="8,8.5 12.5,7.8 10.5,11.5" fill="#f6f6f6"/><polygon points="16.5,13 15.5,17.8 12.8,15" fill="#f6f6f6"/><polygon points="5.5,16.5 5.8,11.8 8.8,14.3" fill="#f6f6f6"/></svg>
<div style="left:254.10px;top:71.08px;font-family:'Liberation Sans', sans-serif;font-size:12.5px;line-height:12.5px;font-weight:bold;color:#1a1a1a;white-space:nowrap;-webkit-text-stroke:0px #1a1a1a;transform:scaleX(0.9836);transform-origin:0 0;">Schedule Name:</div>
<div style="left:361.4px;top:64.4px;width:107.10000000000002px;height:24.0px;background:#f8f9f7;border:1px solid #b9bab7;border-radius:3px;box-sizing:border-box"></div>
<div style="left:365.50px;top:71.08px;font-family:'Liberation Sans', sans-serif;font-size:12.5px;line-height:12.5px;font-weight:normal;color:#1a1a1a;white-space:nowrap;-webkit-text-stroke:0.25px #1a1a1a;transform:scaleX(0.9855);transform-origin:0 0;">Office Bldg Equip</div>
<div style="left:479.00px;top:71.08px;font-family:'Liberation Sans', sans-serif;font-size:12.5px;line-height:12.5px;font-weight:bold;color:#1a1a1a;white-space:nowrap;-webkit-text-stroke:0px #1a1a1a;transform:scaleX(0.9661);transform-origin:0 0;">Schedule Type:</div>
<div style="left:578.30px;top:71.08px;font-family:'Liberation Sans', sans-serif;font-size:12.5px;line-height:12.5px;font-weight:normal;color:#1a1a1a;white-space:nowrap;-webkit-text-stroke:0.25px #1a1a1a;transform:scaleX(0.9889);transform-origin:0 0;">Fraction</div>
<div style="left:254px;top:99px;width:477px;height:1.2000000000000028px;background:#a3a4a1;"></div>
<div style="left:314.50px;top:114.17px;font-family:'Liberation Sans', sans-serif;font-size:12.5px;line-height:12.5px;font-weight:bold;color:#1a1a1a;white-space:nowrap;-webkit-text-stroke:0px #1a1a1a;transform:scaleX(1.0107);transform-origin:0 0;">Default day profile.</div>
<div style="left:314.50px;top:156.18px;font-family:'Liberation Sans', sans-serif;font-size:12.5px;line-height:12.5px;font-weight:normal;color:#1a1a1a;white-space:nowrap;-webkit-text-stroke:0.25px #1a1a1a;transform:scaleX(0.9721);transform-origin:0 0;">Schedule Day Name:</div>
<div style="left:440.4px;top:149.6px;width:199.30000000000007px;height:23.80000000000001px;background:#f8f9f7;border:1px solid #b9bab7;border-radius:3px;box-sizing:border-box;border-right:none"></div>
<div style="left:443.50px;top:156.18px;font-family:'Liberation Sans', sans-serif;font-size:12.5px;line-height:12.5px;font-weight:normal;color:#1a1a1a;white-space:nowrap;-webkit-text-stroke:0.25px #1a1a1a;overflow:hidden">Office Bldg Equip Default Schedule</div>
<div style="left:314.50px;top:191.48px;font-family:'Liberation Sans', sans-serif;font-size:12.5px;line-height:12.5px;font-weight:normal;color:#1a1a1a;white-space:nowrap;-webkit-text-stroke:0.25px #1a1a1a;transform:scaleX(1.0059);transform-origin:0 0;">Lower Limit:</div>
<div style="left:386px;top:185.3px;width:99.69999999999999px;height:22.899999999999977px;background:#f8f9f7;border:1px solid #b9bab7;border-radius:3px;box-sizing:border-box"></div>
<div style="left:471.3px;top:186.3px;width:1.0px;height:20.899999999999977px;background:#c4c5c2;"></div>
<div style="left:390.50px;top:191.48px;font-family:'Liberation Sans', sans-serif;font-size:12.5px;line-height:12.5px;font-weight:normal;color:#1a1a1a;white-space:nowrap;-webkit-text-stroke:0.25px #1a1a1a;">0.00</div>
<svg style="position:absolute;left:472.5px;top:188.3px;" width="10" height="17" viewBox="0 0 10 17"><polygon points="1,6 9,6 5,1.5" fill="#555"/><polygon points="1,11 9,11 5,15.5" fill="#555"/></svg>
<div style="left:506.80px;top:191.48px;font-family:'Liberation Sans', sans-serif;font-size:12.5px;line-height:12.5px;font-weight:normal;color:#1a1a1a;white-space:nowrap;-webkit-text-stroke:0.25px #1a1a1a;transform:scaleX(1.0119);transform-origin:0 0;">Upper Limit:</div>
<div style="left:579.2px;top:185.3px;width:99.39999999999998px;height:22.899999999999977px;background:#f8f9f7;border:1px solid #b9bab7;border-radius:3px;box-sizing:border-box"></div>
<div style="left:664.4px;top:186.3px;width:1.0px;height:20.899999999999977px;background:#c4c5c2;"></div>
<div style="left:583.70px;top:191.48px;font-family:'Liberation Sans', sans-serif;font-size:12.5px;line-height:12.5px;font-weight:normal;color:#1a1a1a;white-space:nowrap;-webkit-text-stroke:0.25px #1a1a1a;">1.00</div>
<svg style="position:absolute;left:665.5px;top:188.3px;" width="10" height="17" viewBox="0 0 10 17"><polygon points="1,6 9,6 5,1.5" fill="#555"/><polygon points="1,11 9,11 5,15.5" fill="#555"/></svg>
<div style="left:313px;top:238px;width:399px;height:596.5px;background:#f8faf7;border:1.5px solid #000;border-right-width:1.3px;box-sizing:border-box"></div>
<div style="left:307px;top:832.9px;width:6px;height:1.2000000000000455px;background:#000;"></div>
<div style="left:298.60px;top:828.70px;font-family:'Liberation Sans', sans-serif;font-size:12px;line-height:12px;font-weight:normal;color:#111;white-space:nowrap;-webkit-text-stroke:0.25px #111;">0</div>
<div style="left:307px;top:748.0428571428571px;width:6px;height:1.2000000000000455px;background:#000;"></div>
<div style="left:281.90px;top:743.84px;font-family:'Liberation Sans', sans-serif;font-size:12px;line-height:12px;font-weight:normal;color:#111;white-space:nowrap;-webkit-text-stroke:0.25px #111;">0.14</div>
<div style="left:307px;top:663.1857142857143px;width:6px;height:1.2000000000000455px;background:#000;"></div>
<div style="left:281.90px;top:658.99px;font-family:'Liberation Sans', sans-serif;font-size:12px;line-height:12px;font-weight:normal;color:#111;white-space:nowrap;-webkit-text-stroke:0.25px #111;">0.29</div>
<div style="left:307px;top:578.3285714285714px;width:6px;height:1.2000000000000455px;background:#000;"></div>
<div style="left:281.90px;top:574.13px;font-family:'Liberation Sans', sans-serif;font-size:12px;line-height:12px;font-weight:normal;color:#111;white-space:nowrap;-webkit-text-stroke:0.25px #111;">0.43</div>
<div style="left:307px;top:493.4714285714286px;width:6px;height:1.2000000000000455px;background:#000;"></div>
<div style="left:281.90px;top:489.27px;font-family:'Liberation Sans', sans-serif;font-size:12px;line-height:12px;font-weight:normal;color:#111;white-space:nowrap;-webkit-text-stroke:0.25px #111;">0.57</div>
<div style="left:307px;top:408.6142857142857px;width:6px;height:1.2000000000000455px;background:#000;"></div>
<div style="left:281.90px;top:404.41px;font-family:'Liberation Sans', sans-serif;font-size:12px;line-height:12px;font-weight:normal;color:#111;white-space:nowrap;-webkit-text-stroke:0.25px #111;">0.71</div>
<div style="left:307px;top:323.75714285714287px;width:6px;height:1.2000000000000455px;background:#000;"></div>
<div style="left:281.90px;top:319.56px;font-family:'Liberation Sans', sans-serif;font-size:12px;line-height:12px;font-weight:normal;color:#111;white-space:nowrap;-webkit-text-stroke:0.25px #111;">0.86</div>
<div style="left:307px;top:238.9px;width:6px;height:1.1999999999999886px;background:#000;"></div>
<div style="left:298.60px;top:234.70px;font-family:'Liberation Sans', sans-serif;font-size:12px;line-height:12px;font-weight:normal;color:#111;white-space:nowrap;-webkit-text-stroke:0.25px #111;">1</div>
<div style="left:312.5px;top:834px;width:2.0px;height:6.5px;background:#000;"></div>
<div style="left:301.80px;top:843.30px;font-family:'Liberation Sans', sans-serif;font-size:12px;line-height:12px;font-weight:normal;color:#111;white-space:nowrap;-webkit-text-stroke:0.25px #111;">0:00</div>
<div style="left:378.8333333333333px;top:834px;width:2.0px;height:6.5px;background:#000;"></div>
<div style="left:368.13px;top:843.30px;font-family:'Liberation Sans', sans-serif;font-size:12px;line-height:12px;font-weight:normal;color:#111;white-space:nowrap;-webkit-text-stroke:0.25px #111;">4:00</div>
<div style="left:445.16666666666663px;top:834px;width:2.0px;height:6.5px;background:#000;"></div>
<div style="left:434.47px;top:843.30px;font-family:'Liberation Sans', sans-serif;font-size:12px;line-height:12px;font-weight:normal;color:#111;white-space:nowrap;-webkit-text-stroke:0.25px #111;">8:00</div>
<div style="left:511.5px;top:834px;width:2.0px;height:6.5px;background:#000;"></div>
<div style="left:497.50px;top:843.30px;font-family:'Liberation Sans', sans-serif;font-size:12px;line-height:12px;font-weight:normal;color:#111;white-space:nowrap;-webkit-text-stroke:0.25px #111;">12:00</div>
<div style="left:577.8333333333333px;top:834px;width:2.0px;height:6.5px;background:#000;"></div>
<div style="left:563.83px;top:843.30px;font-family:'Liberation Sans', sans-serif;font-size:12px;line-height:12px;font-weight:normal;color:#111;white-space:nowrap;-webkit-text-stroke:0.25px #111;">16:00</div>
<div style="left:644.1666666666667px;top:834px;width:2.0px;height:6.5px;background:#000;"></div>
<div style="left:630.17px;top:843.30px;font-family:'Liberation Sans', sans-serif;font-size:12px;line-height:12px;font-weight:normal;color:#111;white-space:nowrap;-webkit-text-stroke:0.25px #111;">20:00</div>
<div style="left:710.5px;top:834px;width:2.0px;height:6.5px;background:#000;"></div>
<div style="left:696.50px;top:843.30px;font-family:'Liberation Sans', sans-serif;font-size:12px;line-height:12px;font-weight:normal;color:#111;white-space:nowrap;-webkit-text-stroke:0.25px #111;">24:00</div>
<svg style="position:absolute;left:313px;top:238px;overflow:visible" width="400" height="597" viewBox="0 0 400 597"><rect x="126.20" y="60.00" width="13.8" height="296" fill="#2400ec"/><line x1="2.30" y1="356.00" x2="133.18" y2="356.00" stroke="#000" stroke-width="2.4"/><line x1="133.18" y1="61.00" x2="198.62" y2="61.00" stroke="#000" stroke-width="2.4"/><line x1="198.62" y1="120.00" x2="214.98" y2="120.00" stroke="#000" stroke-width="2.4"/><line x1="214.98" y1="61.00" x2="280.42" y2="61.00" stroke="#000" stroke-width="2.4"/><line x1="280.42" y1="120.00" x2="296.78" y2="120.00" stroke="#000" stroke-width="2.4"/><line x1="296.78" y1="238.00" x2="329.50" y2="238.00" stroke="#000" stroke-width="2.4"/><line x1="329.50" y1="297.00" x2="362.22" y2="297.00" stroke="#000" stroke-width="2.4"/><line x1="362.22" y1="356.00" x2="394.94" y2="356.00" stroke="#000" stroke-width="2.4"/><line x1="133.18" y1="59.00" x2="133.18" y2="358.00" stroke="#000" stroke-width="2.6"/><line x1="198.62" y1="59.00" x2="198.62" y2="122.00" stroke="#000" stroke-width="2.6"/><line x1="214.98" y1="59.00" x2="214.98" y2="122.00" stroke="#000" stroke-width="2.6"/><line x1="280.42" y1="59.00" x2="280.42" y2="122.00" stroke="#000" stroke-width="2.6"/><line x1="296.78" y1="118.00" x2="296.78" y2="240.00" stroke="#000" stroke-width="2.6"/><line x1="329.50" y1="236.00" x2="329.50" y2="299.00" stroke="#000" stroke-width="2.6"/><line x1="362.22" y1="295.00" x2="362.22" y2="358.00" stroke="#000" stroke-width="2.6"/><line x1="68" y1="227.60000000000002" x2="119.59999999999991" y2="227.60000000000002" stroke="#ff0a0a" stroke-width="3.6"/><polyline points="80,216.10000000000002 68.5,227.60000000000002 80,239.10000000000002" fill="none" stroke="#ff0a0a" stroke-width="3.6"/><line x1="143.70000000000005" y1="227.60000000000002" x2="195.5" y2="227.60000000000002" stroke="#ff0a0a" stroke-width="3.6"/><polyline points="184,216.10000000000002 195.5,227.60000000000002 184,239.10000000000002" fill="none" stroke="#ff0a0a" stroke-width="3.6"/></svg>
<div style="left:557.60px;top:222.18px;font-family:'Liberation Sans', sans-serif;font-size:12.5px;line-height:12.5px;font-weight:normal;color:#1a1a1a;white-space:nowrap;-webkit-text-stroke:0.25px #1a1a1a;transform:scaleX(1.0188);transform-origin:0 0;">Drag vertical line to adjust</div>
<div style="left:364.4px;top:873.5px;width:60.10000000000002px;height:23.0px;background:linear-gradient(#93b5e2,#5d89c0);border:1px solid #4f6f9c;border-radius:4px;box-sizing:border-box"></div>
<div style="left:376.50px;top:879.67px;font-family:'Liberation Sans', sans-serif;font-size:12.5px;line-height:12.5px;font-weight:normal;color:#1a1a1a;white-space:nowrap;-webkit-text-stroke:0.25px #1a1a1a;transform:scaleX(1.0221);transform-origin:0 0;">Hourly</div>
<div style="left:445.5px;top:873.5px;width:84.10000000000002px;height:23.0px;background:linear-gradient(#f3f3f1,#dcdddb);border:1px solid #a7a8a5;border-radius:4px;box-sizing:border-box"></div>
<div style="left:456.50px;top:879.67px;font-family:'Liberation Sans', sans-serif;font-size:12.5px;line-height:12.5px;font-weight:normal;color:#1a1a1a;white-space:nowrap;-webkit-text-stroke:0.25px #1a1a1a;transform:scaleX(1.0065);transform-origin:0 0;">15 Minutes</div>
<div style="left:550.2px;top:873.5px;width:71.39999999999998px;height:23.0px;background:linear-gradient(#f3f3f1,#dcdddb);border:1px solid #a7a8a5;border-radius:4px;box-sizing:border-box"></div>
<div style="left:561.80px;top:879.67px;font-family:'Liberation Sans', sans-serif;font-size:12.5px;line-height:12.5px;font-weight:normal;color:#1a1a1a;white-space:nowrap;-webkit-text-stroke:0.25px #1a1a1a;transform:scaleX(1.0230);transform-origin:0 0;">1 Minute</div>
<div style="left:314px;top:907.3px;width:396.5px;height:98.40000000000009px;background:#f8faf7;border:1.3px solid #000;box-sizing:border-box"></div>
<svg style="position:absolute;left:314px;top:907px;" width="397" height="99" viewBox="0 0 397 99"><rect x="125.10" y="11.90" width="13.9" height="48.10" fill="#2400ec"/><polyline points="0.50,59.38 132.08,59.38 132.08,11.48 197.52,11.48 197.52,21.06 213.88,21.06 213.88,11.48 279.32,11.48 279.32,21.06 295.68,21.06 295.68,40.22 328.40,40.22 328.40,49.80 361.12,49.80 361.12,59.38 394.30,59.38" fill="none" stroke="#000" stroke-width="3.2" stroke-linejoin="miter"/></svg>
<div style="left:741px;top:54px;width:2px;height:963px;background:#3a4141;"></div>
<div style="left:743px;top:54px;width:266.5px;height:22px;background:#eeefec;"></div>
<div style="left:865.90px;top:57.08px;font-family:'Liberation Sans', sans-serif;font-size:12.5px;line-height:12.5px;font-weight:normal;color:#1a1a1a;white-space:nowrap;-webkit-text-stroke:0.25px #1a1a1a;">Jan</div>
<div style="left:743px;top:76px;width:266.5px;height:21px;background:#f6f7f5;"></div>
<div style="left:758.25px;top:80.67px;font-family:'Liberation Sans', sans-serif;font-size:12.5px;line-height:12.5px;font-weight:normal;color:#ff1a1a;white-space:nowrap;-webkit-text-stroke:0.25px #ff1a1a;">S</div>
<div style="left:795.05px;top:80.67px;font-family:'Liberation Sans', sans-serif;font-size:12.5px;line-height:12.5px;font-weight:normal;color:#1a1a1a;white-space:nowrap;-webkit-text-stroke:0.25px #1a1a1a;">M</div>
<div style="left:834.35px;top:80.67px;font-family:'Liberation Sans', sans-serif;font-size:12.5px;line-height:12.5px;font-weight:normal;color:#1a1a1a;white-space:nowrap;-webkit-text-stroke:0.25px #1a1a1a;">T</div>
<div style="left:870.15px;top:80.67px;font-family:'Liberation Sans', sans-serif;font-size:12.5px;line-height:12.5px;font-weight:normal;color:#1a1a1a;white-space:nowrap;-webkit-text-stroke:0.25px #1a1a1a;">W</div>
<div style="left:910.15px;top:80.67px;font-family:'Liberation Sans', sans-serif;font-size:12.5px;line-height:12.5px;font-weight:normal;color:#1a1a1a;white-space:nowrap;-webkit-text-stroke:0.25px #1a1a1a;">T</div>
<div style="left:948.05px;top:80.67px;font-family:'Liberation Sans', sans-serif;font-size:12.5px;line-height:12.5px;font-weight:normal;color:#1a1a1a;white-space:nowrap;-webkit-text-stroke:0.25px #1a1a1a;">F</div>
<div style="left:985.90px;top:80.67px;font-family:'Liberation Sans', sans-serif;font-size:12.5px;line-height:12.5px;font-weight:normal;color:#ff1a1a;white-space:nowrap;-webkit-text-stroke:0.25px #ff1a1a;">S</div>
<div style="left:743px;top:97px;width:266.5px;height:1px;background:#000;"></div>
<div style="left:744.0px;top:98px;width:36.799999999999955px;height:20px;background:#e6e7e4;"></div>
<div style="left:781.8px;top:98px;width:36.90000000000009px;height:20px;background:#e6e7e4;"></div>
<div style="left:819.7px;top:98px;width:36.89999999999998px;height:20px;background:#e6e7e4;"></div>
<div style="left:857.6px;top:98px;width:36.89999999999998px;height:20px;background:#e6e7e4;"></div>
<div style="left:895.5px;top:98px;width:36.89999999999998px;height:20px;background:#e6e7e4;"></div>
<div style="left:933.4px;top:98px;width:36.89999999999998px;height:20px;background:#e6e7e4;"></div>
<div style="left:971.3px;top:98px;width:38.0px;height:20px;background:#e6e7e4;"></div>
<div style="left:743px;top:118px;width:266.5px;height:1px;background:#000;"></div>
<div style="left:744.0px;top:119px;width:36.799999999999955px;height:20px;background:#aa4499;"></div>
<div style="left:758.90px;top:123.48px;font-family:'Liberation Sans', sans-serif;font-size:12.5px;line-height:12.5px;font-weight:normal;color:#141414;white-space:nowrap;-webkit-text-stroke:0.25px #141414;">1</div>
<div style="left:781.8px;top:119px;width:36.90000000000009px;height:20px;background:#88ccee;"></div>
<div style="left:796.75px;top:123.48px;font-family:'Liberation Sans', sans-serif;font-size:12.5px;line-height:12.5px;font-weight:normal;color:#141414;white-space:nowrap;-webkit-text-stroke:0.25px #141414;">2</div>
<div style="left:819.7px;top:119px;width:36.89999999999998px;height:20px;background:#88ccee;"></div>
<div style="left:834.65px;top:123.48px;font-family:'Liberation Sans', sans-serif;font-size:12.5px;line-height:12.5px;font-weight:normal;color:#141414;white-space:nowrap;-webkit-text-stroke:0.25px #141414;">3</div>
<div style="left:857.6px;top:119px;width:36.89999999999998px;height:20px;background:#88ccee;"></div>
<div style="left:872.55px;top:123.48px;font-family:'Liberation Sans', sans-serif;font-size:12.5px;line-height:12.5px;font-weight:normal;color:#141414;white-space:nowrap;-webkit-text-stroke:0.25px #141414;">4</div>
<div style="left:895.5px;top:119px;width:36.89999999999998px;height:20px;background:#88ccee;"></div>
<div style="left:910.45px;top:123.48px;font-family:'Liberation Sans', sans-serif;font-size:12.5px;line-height:12.5px;font-weight:normal;color:#141414;white-space:nowrap;-webkit-text-stroke:0.25px #141414;">5</div>
<div style="left:933.4px;top:119px;width:36.89999999999998px;height:20px;background:#88ccee;"></div>
<div style="left:948.35px;top:123.48px;font-family:'Liberation Sans', sans-serif;font-size:12.5px;line-height:12.5px;font-weight:normal;color:#141414;white-space:nowrap;-webkit-text-stroke:0.25px #141414;">6</div>
<div style="left:971.3px;top:119px;width:38.0px;height:20px;background:#332288;"></div>
<div style="left:986.55px;top:123.48px;font-family:'Liberation Sans', sans-serif;font-size:12.5px;line-height:12.5px;font-weight:normal;color:#141414;white-space:nowrap;-webkit-text-stroke:0.25px #141414;">7</div>
<div style="left:743px;top:139px;width:266.5px;height:1px;background:#000;"></div>
<div style="left:744.0px;top:140px;width:36.799999999999955px;height:20px;background:#aa4499;"></div>
<div style="left:758.90px;top:144.48px;font-family:'Liberation Sans', sans-serif;font-size:12.5px;line-height:12.5px;font-weight:normal;color:#141414;white-space:nowrap;-webkit-text-stroke:0.25px #141414;">8</div>
<div style="left:781.8px;top:140px;width:36.90000000000009px;height:20px;background:#88ccee;"></div>
<div style="left:796.75px;top:144.48px;font-family:'Liberation Sans', sans-serif;font-size:12.5px;line-height:12.5px;font-weight:normal;color:#141414;white-space:nowrap;-webkit-text-stroke:0.25px #141414;">9</div>
<div style="left:819.7px;top:140px;width:36.89999999999998px;height:20px;background:#88ccee;"></div>
<div style="left:831.20px;top:144.48px;font-family:'Liberation Sans', sans-serif;font-size:12.5px;line-height:12.5px;font-weight:normal;color:#141414;white-space:nowrap;-webkit-text-stroke:0.25px #141414;">10</div>
<div style="left:857.6px;top:140px;width:36.89999999999998px;height:20px;background:#88ccee;"></div>
<div style="left:869.55px;top:144.48px;font-family:'Liberation Sans', sans-serif;font-size:12.5px;line-height:12.5px;font-weight:normal;color:#141414;white-space:nowrap;-webkit-text-stroke:0.25px #141414;">11</div>
<div style="left:895.5px;top:140px;width:36.89999999999998px;height:20px;background:#88ccee;"></div>
<div style="left:907.00px;top:144.48px;font-family:'Liberation Sans', sans-serif;font-size:12.5px;line-height:12.5px;font-weight:normal;color:#141414;white-space:nowrap;-webkit-text-stroke:0.25px #141414;">12</div>
<div style="left:933.4px;top:140px;width:36.89999999999998px;height:20px;background:#88ccee;"></div>
<div style="left:944.90px;top:144.48px;font-family:'Liberation Sans', sans-serif;font-size:12.5px;line-height:12.5px;font-weight:normal;color:#141414;white-space:nowrap;-webkit-text-stroke:0.25px #141414;">13</div>
<div style="left:971.3px;top:140px;width:38.0px;height:20px;background:#332288;"></div>
<div style="left:983.10px;top:144.48px;font-family:'Liberation Sans', sans-serif;font-size:12.5px;line-height:12.5px;font-weight:normal;color:#141414;white-space:nowrap;-webkit-text-stroke:0.25px #141414;">14</div>
<div style="left:743px;top:160px;width:266.5px;height:1px;background:#000;"></div>
<div style="left:744.0px;top:161px;width:36.799999999999955px;height:20px;background:#aa4499;"></div>
<div style="left:755.45px;top:165.48px;font-family:'Liberation Sans', sans-serif;font-size:12.5px;line-height:12.5px;font-weight:normal;color:#141414;white-space:nowrap;-webkit-text-stroke:0.25px #141414;">15</div>
<div style="left:781.8px;top:161px;width:36.90000000000009px;height:20px;background:#88ccee;"></div>
<div style="left:793.30px;top:165.48px;font-family:'Liberation Sans', sans-serif;font-size:12.5px;line-height:12.5px;font-weight:normal;color:#141414;white-space:nowrap;-webkit-text-stroke:0.25px #141414;">16</div>
<div style="left:819.7px;top:161px;width:36.89999999999998px;height:20px;background:#88ccee;"></div>
<div style="left:831.20px;top:165.48px;font-family:'Liberation Sans', sans-serif;font-size:12.5px;line-height:12.5px;font-weight:normal;color:#141414;white-space:nowrap;-webkit-text-stroke:0.25px #141414;">17</div>
<div style="left:857.6px;top:161px;width:36.89999999999998px;height:20px;background:#88ccee;"></div>
<div style="left:869.10px;top:165.48px;font-family:'Liberation Sans', sans-serif;font-size:12.5px;line-height:12.5px;font-weight:normal;color:#141414;white-space:nowrap;-webkit-text-stroke:0.25px #141414;">18</div>
<div style="left:895.5px;top:161px;width:36.89999999999998px;height:20px;background:#88ccee;"></div>
<div style="left:907.00px;top:165.48px;font-family:'Liberation Sans', sans-serif;font-size:12.5px;line-height:12.5px;font-weight:normal;color:#141414;white-space:nowrap;-webkit-text-stroke:0.25px #141414;">19</div>
<div style="left:933.4px;top:161px;width:36.89999999999998px;height:20px;background:#88ccee;"></div>
<div style="left:944.90px;top:165.48px;font-family:'Liberation Sans', sans-serif;font-size:12.5px;line-height:12.5px;font-weight:normal;color:#141414;white-space:nowrap;-webkit-text-stroke:0.25px #141414;">20</div>
<div style="left:971.3px;top:161px;width:38.0px;height:20px;background:#332288;"></div>
<div style="left:983.10px;top:165.48px;font-family:'Liberation Sans', sans-serif;font-size:12.5px;line-height:12.5px;font-weight:normal;color:#141414;white-space:nowrap;-webkit-text-stroke:0.25px #141414;">21</div>
<div style="left:743px;top:181px;width:266.5px;height:1px;background:#000;"></div>
<div style="left:744.0px;top:182px;width:36.799999999999955px;height:20px;background:#aa4499;"></div>
<div style="left:755.45px;top:186.48px;font-family:'Liberation Sans', sans-serif;font-size:12.5px;line-height:12.5px;font-weight:normal;color:#141414;white-space:nowrap;-webkit-text-stroke:0.25px #141414;">22</div>
<div style="left:781.8px;top:182px;width:36.90000000000009px;height:20px;background:#88ccee;"></div>
<div style="left:793.30px;top:186.48px;font-family:'Liberation Sans', sans-serif;font-size:12.5px;line-height:12.5px;font-weight:normal;color:#141414;white-space:nowrap;-webkit-text-stroke:0.25px #141414;">23</div>
<div style="left:819.7px;top:182px;width:36.89999999999998px;height:20px;background:#88ccee;"></div>
<div style="left:831.20px;top:186.48px;font-family:'Liberation Sans', sans-serif;font-size:12.5px;line-height:12.5px;font-weight:normal;color:#141414;white-space:nowrap;-webkit-text-stroke:0.25px #141414;">24</div>
<div style="left:857.6px;top:182px;width:36.89999999999998px;height:20px;background:#88ccee;"></div>
<div style="left:869.10px;top:186.48px;font-family:'Liberation Sans', sans-serif;font-size:12.5px;line-height:12.5px;font-weight:normal;color:#141414;white-space:nowrap;-webkit-text-stroke:0.25px #141414;">25</div>
<div style="left:895.5px;top:182px;width:36.89999999999998px;height:20px;background:#88ccee;"></div>
<div style="left:907.00px;top:186.48px;font-family:'Liberation Sans', sans-serif;font-size:12.5px;line-height:12.5px;font-weight:normal;color:#141414;white-space:nowrap;-webkit-text-stroke:0.25px #141414;">26</div>
<div style="left:933.4px;top:182px;width:36.89999999999998px;height:20px;background:#88ccee;"></div>
<div style="left:944.90px;top:186.48px;font-family:'Liberation Sans', sans-serif;font-size:12.5px;line-height:12.5px;font-weight:normal;color:#141414;white-space:nowrap;-webkit-text-stroke:0.25px #141414;">27</div>
<div style="left:971.3px;top:182px;width:38.0px;height:20px;background:#332288;"></div>
<div style="left:983.10px;top:186.48px;font-family:'Liberation Sans', sans-serif;font-size:12.5px;line-height:12.5px;font-weight:normal;color:#141414;white-space:nowrap;-webkit-text-stroke:0.25px #141414;">28</div>
<div style="left:743px;top:202px;width:266.5px;height:1px;background:#000;"></div>
<div style="left:744.0px;top:203px;width:36.799999999999955px;height:20px;background:#aa4499;"></div>
<div style="left:755.45px;top:207.48px;font-family:'Liberation Sans', sans-serif;font-size:12.5px;line-height:12.5px;font-weight:normal;color:#141414;white-space:nowrap;-webkit-text-stroke:0.25px #141414;">29</div>
<div style="left:781.8px;top:203px;width:36.90000000000009px;height:20px;background:#88ccee;"></div>
<div style="left:793.30px;top:207.48px;font-family:'Liberation Sans', sans-serif;font-size:12.5px;line-height:12.5px;font-weight:normal;color:#141414;white-space:nowrap;-webkit-text-stroke:0.25px #141414;">30</div>
<div style="left:819.7px;top:203px;width:36.89999999999998px;height:20px;background:#88ccee;"></div>
<div style="left:831.20px;top:207.48px;font-family:'Liberation Sans', sans-serif;font-size:12.5px;line-height:12.5px;font-weight:normal;color:#141414;white-space:nowrap;-webkit-text-stroke:0.25px #141414;">31</div>
<div style="left:857.6px;top:203px;width:36.89999999999998px;height:20px;background:#e6e7e4;"></div>
<div style="left:895.5px;top:203px;width:36.89999999999998px;height:20px;background:#e6e7e4;"></div>
<div style="left:933.4px;top:203px;width:36.89999999999998px;height:20px;background:#e6e7e4;"></div>
<div style="left:971.3px;top:203px;width:38.0px;height:20px;background:#e6e7e4;"></div>
<div style="left:743px;top:223px;width:266.5px;height:1px;background:#000;"></div>
<div style="left:780.8px;top:98px;width:1.2999999999999545px;height:126px;background:#000;"></div>
<div style="left:818.7px;top:98px;width:1.2999999999999545px;height:126px;background:#000;"></div>
<div style="left:856.6px;top:98px;width:1.2999999999999545px;height:126px;background:#000;"></div>
<div style="left:894.5px;top:98px;width:1.2999999999999545px;height:126px;background:#000;"></div>
<div style="left:932.4px;top:98px;width:1.2999999999999545px;height:126px;background:#000;"></div>
<div style="left:970.3px;top:98px;width:1.2999999999999545px;height:126px;background:#000;"></div>
<div style="left:743px;top:98px;width:1.2000000000000455px;height:126px;background:#000;"></div>
<div style="left:743px;top:224px;width:266.5px;height:28px;background:#eeefec;"></div>
<div style="left:865.25px;top:233.08px;font-family:'Liberation Sans', sans-serif;font-size:12.5px;line-height:12.5px;font-weight:normal;color:#1a1a1a;white-space:nowrap;-webkit-text-stroke:0.25px #1a1a1a;">Feb</div>
<div style="left:743px;top:252px;width:266.5px;height:21px;background:#f6f7f5;"></div>
<div style="left:758.25px;top:256.68px;font-family:'Liberation Sans', sans-serif;font-size:12.5px;line-height:12.5px;font-weight:normal;color:#ff1a1a;white-space:nowrap;-webkit-text-stroke:0.25px #ff1a1a;">S</div>
<div style="left:795.05px;top:256.68px;font-family:'Liberation Sans', sans-serif;font-size:12.5px;line-height:12.5px;font-weight:normal;color:#1a1a1a;white-space:nowrap;-webkit-text-stroke:0.25px #1a1a1a;">M</div>
<div style="left:834.35px;top:256.68px;font-family:'Liberation Sans', sans-serif;font-size:12.5px;line-height:12.5px;font-weight:normal;color:#1a1a1a;white-space:nowrap;-webkit-text-stroke:0.25px #1a1a1a;">T</div>
<div style="left:870.15px;top:256.68px;font-family:'Liberation Sans', sans-serif;font-size:12.5px;line-height:12.5px;font-weight:normal;color:#1a1a1a;white-space:nowrap;-webkit-text-stroke:0.25px #1a1a1a;">W</div>
<div style="left:910.15px;top:256.68px;font-family:'Liberation Sans', sans-serif;font-size:12.5px;line-height:12.5px;font-weight:normal;color:#1a1a1a;white-space:nowrap;-webkit-text-stroke:0.25px #1a1a1a;">T</div>
<div style="left:948.05px;top:256.68px;font-family:'Liberation Sans', sans-serif;font-size:12.5px;line-height:12.5px;font-weight:normal;color:#1a1a1a;white-space:nowrap;-webkit-text-stroke:0.25px #1a1a1a;">F</div>
<div style="left:985.90px;top:256.68px;font-family:'Liberation Sans', sans-serif;font-size:12.5px;line-height:12.5px;font-weight:normal;color:#ff1a1a;white-space:nowrap;-webkit-text-stroke:0.25px #ff1a1a;">S</div>
<div style="left:743px;top:273px;width:266.5px;height:1px;background:#000;"></div>
<div style="left:744.0px;top:274px;width:36.799999999999955px;height:20px;background:#e6e7e4;"></div>
<div style="left:781.8px;top:274px;width:36.90000000000009px;height:20px;background:#e6e7e4;"></div>
<div style="left:819.7px;top:274px;width:36.89999999999998px;height:20px;background:#e6e7e4;"></div>
<div style="left:857.6px;top:274px;width:36.89999999999998px;height:20px;background:#88ccee;"></div>
<div style="left:872.55px;top:278.48px;font-family:'Liberation Sans', sans-serif;font-size:12.5px;line-height:12.5px;font-weight:normal;color:#141414;white-space:nowrap;-webkit-text-stroke:0.25px #141414;">1</div>
<div style="left:895.5px;top:274px;width:36.89999999999998px;height:20px;background:#88ccee;"></div>
<div style="left:910.45px;top:278.48px;font-family:'Liberation Sans', sans-serif;font-size:12.5px;line-height:12.5px;font-weight:normal;color:#141414;white-space:nowrap;-webkit-text-stroke:0.25px #141414;">2</div>
<div style="left:933.4px;top:274px;width:36.89999999999998px;height:20px;background:#88ccee;"></div>
<div style="left:948.35px;top:278.48px;font-family:'Liberation Sans', sans-serif;font-size:12.5px;line-height:12.5px;font-weight:normal;color:#141414;white-space:nowrap;-webkit-text-stroke:0.25px #141414;">3</div>
<div style="left:971.3px;top:274px;width:38.0px;height:20px;background:#332288;"></div>
<div style="left:986.55px;top:278.48px;font-family:'Liberation Sans', sans-serif;font-size:12.5px;line-height:12.5px;font-weight:normal;color:#141414;white-space:nowrap;-webkit-text-stroke:0.25px #141414;">4</div>
<div style="left:743px;top:294px;width:266.5px;height:1px;background:#000;"></div>
<div style="left:744.0px;top:295px;width:36.799999999999955px;height:20px;background:#aa4499;"></div>
<div style="left:758.90px;top:299.48px;font-family:'Liberation Sans', sans-serif;font-size:12.5px;line-height:12.5px;font-weight:normal;color:#141414;white-space:nowrap;-webkit-text-stroke:0.25px #141414;">5</div>
<div style="left:781.8px;top:295px;width:36.90000000000009px;height:20px;background:#88ccee;"></div>
<div style="left:796.75px;top:299.48px;font-family:'Liberation Sans', sans-serif;font-size:12.5px;line-height:12.5px;font-weight:normal;color:#141414;white-space:nowrap;-webkit-text-stroke:0.25px #141414;">6</div>
<div style="left:819.7px;top:295px;width:36.89999999999998px;height:20px;background:#88ccee;"></div>
<div style="left:834.65px;top:299.48px;font-family:'Liberation Sans', sans-serif;font-size:12.5px;line-height:12.5px;font-weight:normal;color:#141414;white-space:nowrap;-webkit-text-stroke:0.25px #141414;">7</div>
<div style="left:857.6px;top:295px;width:36.89999999999998px;height:20px;background:#88ccee;"></div>
<div style="left:872.55px;top:299.48px;font-family:'Liberation Sans', sans-serif;font-size:12.5px;line-height:12.5px;font-weight:normal;color:#141414;white-space:nowrap;-webkit-text-stroke:0.25px #141414;">8</div>
<div style="left:895.5px;top:295px;width:36.89999999999998px;height:20px;background:#88ccee;"></div>
<div style="left:910.45px;top:299.48px;font-family:'Liberation Sans', sans-serif;font-size:12.5px;line-height:12.5px;font-weight:normal;color:#141414;white-space:nowrap;-webkit-text-stroke:0.25px #141414;">9</div>
<div style="left:933.4px;top:295px;width:36.89999999999998px;height:20px;background:#88ccee;"></div>
<div style="left:944.90px;top:299.48px;font-family:'Liberation Sans', sans-serif;font-size:12.5px;line-height:12.5px;font-weight:normal;color:#141414;white-space:nowrap;-webkit-text-stroke:0.25px #141414;">10</div>
<div style="left:971.3px;top:295px;width:38.0px;height:20px;background:#332288;"></div>
<div style="left:983.55px;top:299.48px;font-family:'Liberation Sans', sans-serif;font-size:12.5px;line-height:12.5px;font-weight:normal;color:#141414;white-space:nowrap;-webkit-text-stroke:0.25px #141414;">11</div>
<div style="left:743px;top:315px;width:266.5px;height:1px;background:#000;"></div>
<div style="left:744.0px;top:316px;width:36.799999999999955px;height:20px;background:#aa4499;"></div>
<div style="left:755.45px;top:320.48px;font-family:'Liberation Sans', sans-serif;font-size:12.5px;line-height:12.5px;font-weight:normal;color:#141414;white-space:nowrap;-webkit-text-stroke:0.25px #141414;">12</div>
<div style="left:781.8px;top:316px;width:36.90000000000009px;height:20px;background:#88ccee;"></div>
<div style="left:793.30px;top:320.48px;font-family:'Liberation Sans', sans-serif;font-size:12.5px;line-height:12.5px;font-weight:normal;color:#141414;white-space:nowrap;-webkit-text-stroke:0.25px #141414;">13</div>
<div style="left:819.7px;top:316px;width:36.89999999999998px;height:20px;background:#88ccee;"></div>
<div style="left:831.20px;top:320.48px;font-family:'Liberation Sans', sans-serif;font-size:12.5px;line-height:12.5px;font-weight:normal;color:#141414;white-space:nowrap;-webkit-text-stroke:0.25px #141414;">14</div>
<div style="left:857.6px;top:316px;width:36.89999999999998px;height:20px;background:#88ccee;"></div>
<div style="left:869.10px;top:320.48px;font-family:'Liberation Sans', sans-serif;font-size:12.5px;line-height:12.5px;font-weight:normal;color:#141414;white-space:nowrap;-webkit-text-stroke:0.25px #141414;">15</div>
<div style="left:895.5px;top:316px;width:36.89999999999998px;height:20px;background:#88ccee;"></div>
<div style="left:907.00px;top:320.48px;font-family:'Liberation Sans', sans-serif;font-size:12.5px;line-height:12.5px;font-weight:normal;color:#141414;white-space:nowrap;-webkit-text-stroke:0.25px #141414;">16</div>
<div style="left:933.4px;top:316px;width:36.89999999999998px;height:20px;background:#88ccee;"></div>
<div style="left:944.90px;top:320.48px;font-family:'Liberation Sans', sans-serif;font-size:12.5px;line-height:12.5px;font-weight:normal;color:#141414;white-space:nowrap;-webkit-text-stroke:0.25px #141414;">17</div>
<div style="left:971.3px;top:316px;width:38.0px;height:20px;background:#332288;"></div>
<div style="left:983.10px;top:320.48px;font-family:'Liberation Sans', sans-serif;font-size:12.5px;line-height:12.5px;font-weight:normal;color:#141414;white-space:nowrap;-webkit-text-stroke:0.25px #141414;">18</div>
<div style="left:743px;top:336px;width:266.5px;height:1px;background:#000;"></div>
<div style="left:744.0px;top:337px;width:36.799999999999955px;height:20px;background:#aa4499;"></div>
<div style="left:755.45px;top:341.48px;font-family:'Liberation Sans', sans-serif;font-size:12.5px;line-height:12.5px;font-weight:normal;color:#141414;white-space:nowrap;-webkit-text-stroke:0.25px #141414;">19</div>
<div style="left:781.8px;top:337px;width:36.90000000000009px;height:20px;background:#88ccee;"></div>
<div style="left:793.30px;top:341.48px;font-family:'Liberation Sans', sans-serif;font-size:12.5px;line-height:12.5px;font-weight:normal;color:#141414;white-space:nowrap;-webkit-text-stroke:0.25px #141414;">20</div>
<div style="left:819.7px;top:337px;width:36.89999999999998px;height:20px;background:#88ccee;"></div>
<div style="left:831.20px;top:341.48px;font-family:'Liberation Sans', sans-serif;font-size:12.5px;line-height:12.5px;font-weight:normal;color:#141414;white-space:nowrap;-webkit-text-stroke:0.25px #141414;">21</div>
<div style="left:857.6px;top:337px;width:36.89999999999998px;height:20px;background:#88ccee;"></div>
<div style="left:869.10px;top:341.48px;font-family:'Liberation Sans', sans-serif;font-size:12.5px;line-height:12.5px;font-weight:normal;color:#141414;white-space:nowrap;-webkit-text-stroke:0.25px #141414;">22</div>
<div style="left:895.5px;top:337px;width:36.89999999999998px;height:20px;background:#88ccee;"></div>
<div style="left:907.00px;top:341.48px;font-family:'Liberation Sans', sans-serif;font-size:12.5px;line-height:12.5px;font-weight:normal;color:#141414;white-space:nowrap;-webkit-text-stroke:0.25px #141414;">23</div>
<div style="left:933.4px;top:337px;width:36.89999999999998px;height:20px;background:#88ccee;"></div>
<div style="left:944.90px;top:341.48px;font-family:'Liberation Sans', sans-serif;font-size:12.5px;line-height:12.5px;font-weight:normal;color:#141414;white-space:nowrap;-webkit-text-stroke:0.25px #141414;">24</div>
<div style="left:971.3px;top:337px;width:38.0px;height:20px;background:#332288;"></div>
<div style="left:983.10px;top:341.48px;font-family:'Liberation Sans', sans-serif;font-size:12.5px;line-height:12.5px;font-weight:normal;color:#141414;white-space:nowrap;-webkit-text-stroke:0.25px #141414;">25</div>
<div style="left:743px;top:357px;width:266.5px;height:1px;background:#000;"></div>
<div style="left:744.0px;top:358px;width:36.799999999999955px;height:20px;background:#aa4499;"></div>
<div style="left:755.45px;top:362.48px;font-family:'Liberation Sans', sans-serif;font-size:12.5px;line-height:12.5px;font-weight:normal;color:#141414;white-space:nowrap;-webkit-text-stroke:0.25px #141414;">26</div>
<div style="left:781.8px;top:358px;width:36.90000000000009px;height:20px;background:#88ccee;"></div>
<div style="left:793.30px;top:362.48px;font-family:'Liberation Sans', sans-serif;font-size:12.5px;line-height:12.5px;font-weight:normal;color:#141414;white-space:nowrap;-webkit-text-stroke:0.25px #141414;">27</div>
<div style="left:819.7px;top:358px;width:36.89999999999998px;height:20px;background:#88ccee;"></div>
<div style="left:831.20px;top:362.48px;font-family:'Liberation Sans', sans-serif;font-size:12.5px;line-height:12.5px;font-weight:normal;color:#141414;white-space:nowrap;-webkit-text-stroke:0.25px #141414;">28</div>
<div style="left:857.6px;top:358px;width:36.89999999999998px;height:20px;background:#e6e7e4;"></div>
<div style="left:895.5px;top:358px;width:36.89999999999998px;height:20px;background:#e6e7e4;"></div>
<div style="left:933.4px;top:358px;width:36.89999999999998px;height:20px;background:#e6e7e4;"></div>
<div style="left:971.3px;top:358px;width:38.0px;height:20px;background:#e6e7e4;"></div>
<div style="left:743px;top:378px;width:266.5px;height:1px;background:#000;"></div>
<div style="left:744.0px;top:379px;width:36.799999999999955px;height:20px;background:#e6e7e4;"></div>
<div style="left:781.8px;top:379px;width:36.90000000000009px;height:20px;background:#e6e7e4;"></div>
<div style="left:819.7px;top:379px;width:36.89999999999998px;height:20px;background:#e6e7e4;"></div>
<div style="left:857.6px;top:379px;width:36.89999999999998px;height:20px;background:#e6e7e4;"></div>
<div style="left:895.5px;top:379px;width:36.89999999999998px;height:20px;background:#e6e7e4;"></div>
<div style="left:933.4px;top:379px;width:36.89999999999998px;height:20px;background:#e6e7e4;"></div>
<div style="left:971.3px;top:379px;width:38.0px;height:20px;background:#e6e7e4;"></div>
<div style="left:743px;top:399px;width:266.5px;height:1px;background:#000;"></div>
<div style="left:780.8px;top:274px;width:1.2999999999999545px;height:126px;background:#000;"></div>
<div style="left:818.7px;top:274px;width:1.2999999999999545px;height:126px;background:#000;"></div>
<div style="left:856.6px;top:274px;width:1.2999999999999545px;height:126px;background:#000;"></div>
<div style="left:894.5px;top:274px;width:1.2999999999999545px;height:126px;background:#000;"></div>
<div style="left:932.4px;top:274px;width:1.2999999999999545px;height:126px;background:#000;"></div>
<div style="left:970.3px;top:274px;width:1.2999999999999545px;height:126px;background:#000;"></div>
<div style="left:743px;top:274px;width:1.2000000000000455px;height:126px;background:#000;"></div>
<div style="left:743px;top:400px;width:266.5px;height:28px;background:#eeefec;"></div>
<div style="left:865.25px;top:409.07px;font-family:'Liberation Sans', sans-serif;font-size:12.5px;line-height:12.5px;font-weight:normal;color:#1a1a1a;white-space:nowrap;-webkit-text-stroke:0.25px #1a1a1a;">Mar</div>
<div style="left:743px;top:428px;width:266.5px;height:21px;background:#f6f7f5;"></div>
<div style="left:758.25px;top:432.68px;font-family:'Liberation Sans', sans-serif;font-size:12.5px;line-height:12.5px;font-weight:normal;color:#ff1a1a;white-space:nowrap;-webkit-text-stroke:0.25px #ff1a1a;">S</div>
<div style="left:795.05px;top:432.68px;font-family:'Liberation Sans', sans-serif;font-size:12.5px;line-height:12.5px;font-weight:normal;color:#1a1a1a;white-space:nowrap;-webkit-text-stroke:0.25px #1a1a1a;">M</div>
<div style="left:834.35px;top:432.68px;font-family:'Liberation Sans', sans-serif;font-size:12.5px;line-height:12.5px;font-weight:normal;color:#1a1a1a;white-space:nowrap;-webkit-text-stroke:0.25px #1a1a1a;">T</div>
<div style="left:870.15px;top:432.68px;font-family:'Liberation Sans', sans-serif;font-size:12.5px;line-height:12.5px;font-weight:normal;color:#1a1a1a;white-space:nowrap;-webkit-text-stroke:0.25px #1a1a1a;">W</div>
<div style="left:910.15px;top:432.68px;font-family:'Liberation Sans', sans-serif;font-size:12.5px;line-height:12.5px;font-weight:normal;color:#1a1a1a;white-space:nowrap;-webkit-text-stroke:0.25px #1a1a1a;">T</div>
<div style="left:948.05px;top:432.68px;font-family:'Liberation Sans', sans-serif;font-size:12.5px;line-height:12.5px;font-weight:normal;color:#1a1a1a;white-space:nowrap;-webkit-text-stroke:0.25px #1a1a1a;">F</div>
<div style="left:985.90px;top:432.68px;font-family:'Liberation Sans', sans-serif;font-size:12.5px;line-height:12.5px;font-weight:normal;color:#ff1a1a;white-space:nowrap;-webkit-text-stroke:0.25px #ff1a1a;">S</div>
<div style="left:743px;top:449px;width:266.5px;height:1px;background:#000;"></div>
<div style="left:744.0px;top:450px;width:36.799999999999955px;height:20px;background:#e6e7e4;"></div>
<div style="left:781.8px;top:450px;width:36.90000000000009px;height:20px;background:#e6e7e4;"></div>
<div style="left:819.7px;top:450px;width:36.89999999999998px;height:20px;background:#e6e7e4;"></div>
<div style="left:857.6px;top:450px;width:36.89999999999998px;height:20px;background:#88ccee;"></div>
<div style="left:872.55px;top:454.48px;font-family:'Liberation Sans', sans-serif;font-size:12.5px;line-height:12.5px;font-weight:normal;color:#141414;white-space:nowrap;-webkit-text-stroke:0.25px #141414;">1</div>
<div style="left:895.5px;top:450px;width:36.89999999999998px;height:20px;background:#88ccee;"></div>
<div style="left:910.45px;top:454.48px;font-family:'Liberation Sans', sans-serif;font-size:12.5px;line-height:12.5px;font-weight:normal;color:#141414;white-space:nowrap;-webkit-text-stroke:0.25px #141414;">2</div>
<div style="left:933.4px;top:450px;width:36.89999999999998px;height:20px;background:#88ccee;"></div>
<div style="left:948.35px;top:454.48px;font-family:'Liberation Sans', sans-serif;font-size:12.5px;line-height:12.5px;font-weight:normal;color:#141414;white-space:nowrap;-webkit-text-stroke:0.25px #141414;">3</div>
<div style="left:971.3px;top:450px;width:38.0px;height:20px;background:#332288;"></div>
<div style="left:986.55px;top:454.48px;font-family:'Liberation Sans', sans-serif;font-size:12.5px;line-height:12.5px;font-weight:normal;color:#141414;white-space:nowrap;-webkit-text-stroke:0.25px #141414;">4</div>
<div style="left:743px;top:470px;width:266.5px;height:1px;background:#000;"></div>
<div style="left:744.0px;top:471px;width:36.799999999999955px;height:20px;background:#aa4499;"></div>
<div style="left:758.90px;top:475.48px;font-family:'Liberation Sans', sans-serif;font-size:12.5px;line-height:12.5px;font-weight:normal;color:#141414;white-space:nowrap;-webkit-text-stroke:0.25px #141414;">5</div>
<div style="left:781.8px;top:471px;width:36.90000000000009px;height:20px;background:#88ccee;"></div>
<div style="left:796.75px;top:475.48px;font-family:'Liberation Sans', sans-serif;font-size:12.5px;line-height:12.5px;font-weight:normal;color:#141414;white-space:nowrap;-webkit-text-stroke:0.25px #141414;">6</div>
<div style="left:819.7px;top:471px;width:36.89999999999998px;height:20px;background:#88ccee;"></div>
<div style="left:834.65px;top:475.48px;font-family:'Liberation Sans', sans-serif;font-size:12.5px;line-height:12.5px;font-weight:normal;color:#141414;white-space:nowrap;-webkit-text-stroke:0.25px #141414;">7</div>
<div style="left:857.6px;top:471px;width:36.89999999999998px;height:20px;background:#88ccee;"></div>
<div style="left:872.55px;top:475.48px;font-family:'Liberation Sans', sans-serif;font-size:12.5px;line-height:12.5px;font-weight:normal;color:#141414;white-space:nowrap;-webkit-text-stroke:0.25px #141414;">8</div>
<div style="left:895.5px;top:471px;width:36.89999999999998px;height:20px;background:#88ccee;"></div>
<div style="left:910.45px;top:475.48px;font-family:'Liberation Sans', sans-serif;font-size:12.5px;line-height:12.5px;font-weight:normal;color:#141414;white-space:nowrap;-webkit-text-stroke:0.25px #141414;">9</div>
<div style="left:933.4px;top:471px;width:36.89999999999998px;height:20px;background:#88ccee;"></div>
<div style="left:944.90px;top:475.48px;font-family:'Liberation Sans', sans-serif;font-size:12.5px;line-height:12.5px;font-weight:normal;color:#141414;white-space:nowrap;-webkit-text-stroke:0.25px #141414;">10</div>
<div style="left:971.3px;top:471px;width:38.0px;height:20px;background:#332288;"></div>
<div style="left:983.55px;top:475.48px;font-family:'Liberation Sans', sans-serif;font-size:12.5px;line-height:12.5px;font-weight:normal;color:#141414;white-space:nowrap;-webkit-text-stroke:0.25px #141414;">11</div>
<div style="left:743px;top:491px;width:266.5px;height:1px;background:#000;"></div>
<div style="left:744.0px;top:492px;width:36.799999999999955px;height:20px;background:#aa4499;"></div>
<div style="left:755.45px;top:496.48px;font-family:'Liberation Sans', sans-serif;font-size:12.5px;line-height:12.5px;font-weight:normal;color:#141414;white-space:nowrap;-webkit-text-stroke:0.25px #141414;">12</div>
<div style="left:781.8px;top:492px;width:36.90000000000009px;height:20px;background:#88ccee;"></div>
<div style="left:793.30px;top:496.48px;font-family:'Liberation Sans', sans-serif;font-size:12.5px;line-height:12.5px;font-weight:normal;color:#141414;white-space:nowrap;-webkit-text-stroke:0.25px #141414;">13</div>
<div style="left:819.7px;top:492px;width:36.89999999999998px;height:20px;background:#88ccee;"></div>
<div style="left:831.20px;top:496.48px;font-family:'Liberation Sans', sans-serif;font-size:12.5px;line-height:12.5px;font-weight:normal;color:#141414;white-space:nowrap;-webkit-text-stroke:0.25px #141414;">14</div>
<div style="left:857.6px;top:492px;width:36.89999999999998px;height:20px;background:#88ccee;"></div>
<div style="left:869.10px;top:496.48px;font-family:'Liberation Sans', sans-serif;font-size:12.5px;line-height:12.5px;font-weight:normal;color:#141414;white-space:nowrap;-webkit-text-stroke:0.25px #141414;">15</div>
<div style="left:895.5px;top:492px;width:36.89999999999998px;height:20px;background:#88ccee;"></div>
<div style="left:907.00px;top:496.48px;font-family:'Liberation Sans', sans-serif;font-size:12.5px;line-height:12.5px;font-weight:normal;color:#141414;white-space:nowrap;-webkit-text-stroke:0.25px #141414;">16</div>
<div style="left:933.4px;top:492px;width:36.89999999999998px;height:20px;background:#88ccee;"></div>
<div style="left:944.90px;top:496.48px;font-family:'Liberation Sans', sans-serif;font-size:12.5px;line-height:12.5px;font-weight:normal;color:#141414;white-space:nowrap;-webkit-text-stroke:0.25px #141414;">17</div>
<div style="left:971.3px;top:492px;width:38.0px;height:20px;background:#332288;"></div>
<div style="left:983.10px;top:496.48px;font-family:'Liberation Sans', sans-serif;font-size:12.5px;line-height:12.5px;font-weight:normal;color:#141414;white-space:nowrap;-webkit-text-stroke:0.25px #141414;">18</div>
<div style="left:743px;top:512px;width:266.5px;height:1px;background:#000;"></div>
<div style="left:744.0px;top:513px;width:36.799999999999955px;height:20px;background:#aa4499;"></div>
<div style="left:755.45px;top:517.47px;font-family:'Liberation Sans', sans-serif;font-size:12.5px;line-height:12.5px;font-weight:normal;color:#141414;white-space:nowrap;-webkit-text-stroke:0.25px #141414;">19</div>
<div style="left:781.8px;top:513px;width:36.90000000000009px;height:20px;background:#88ccee;"></div>
<div style="left:793.30px;top:517.47px;font-family:'Liberation Sans', sans-serif;font-size:12.5px;line-height:12.5px;font-weight:normal;color:#141414;white-space:nowrap;-webkit-text-stroke:0.25px #141414;">20</div>
<div style="left:819.7px;top:513px;width:36.89999999999998px;height:20px;background:#88ccee;"></div>
<div style="left:831.20px;top:517.47px;font-family:'Liberation Sans', sans-serif;font-size:12.5px;line-height:12.5px;font-weight:normal;color:#141414;white-space:nowrap;-webkit-text-stroke:0.25px #141414;">21</div>
<div style="left:857.6px;top:513px;width:36.89999999999998px;height:20px;background:#88ccee;"></div>
<div style="left:869.10px;top:517.47px;font-family:'Liberation Sans', sans-serif;font-size:12.5px;line-height:12.5px;font-weight:normal;color:#141414;white-space:nowrap;-webkit-text-stroke:0.25px #141414;">22</div>
<div style="left:895.5px;top:513px;width:36.89999999999998px;height:20px;background:#88ccee;"></div>
<div style="left:907.00px;top:517.47px;font-family:'Liberation Sans', sans-serif;font-size:12.5px;line-height:12.5px;font-weight:normal;color:#141414;white-space:nowrap;-webkit-text-stroke:0.25px #141414;">23</div>
<div style="left:933.4px;top:513px;width:36.89999999999998px;height:20px;background:#88ccee;"></div>
<div style="left:944.90px;top:517.47px;font-family:'Liberation Sans', sans-serif;font-size:12.5px;line-height:12.5px;font-weight:normal;color:#141414;white-space:nowrap;-webkit-text-stroke:0.25px #141414;">24</div>
<div style="left:971.3px;top:513px;width:38.0px;height:20px;background:#332288;"></div>
<div style="left:983.10px;top:517.47px;font-family:'Liberation Sans', sans-serif;font-size:12.5px;line-height:12.5px;font-weight:normal;color:#141414;white-space:nowrap;-webkit-text-stroke:0.25px #141414;">25</div>
<div style="left:743px;top:533px;width:266.5px;height:1px;background:#000;"></div>
<div style="left:744.0px;top:534px;width:36.799999999999955px;height:20px;background:#aa4499;"></div>
<div style="left:755.45px;top:538.47px;font-family:'Liberation Sans', sans-serif;font-size:12.5px;line-height:12.5px;font-weight:normal;color:#141414;white-space:nowrap;-webkit-text-stroke:0.25px #141414;">26</div>
<div style="left:781.8px;top:534px;width:36.90000000000009px;height:20px;background:#88ccee;"></div>
<div style="left:793.30px;top:538.47px;font-family:'Liberation Sans', sans-serif;font-size:12.5px;line-height:12.5px;font-weight:normal;color:#141414;white-space:nowrap;-webkit-text-stroke:0.25px #141414;">27</div>
<div style="left:819.7px;top:534px;width:36.89999999999998px;height:20px;background:#88ccee;"></div>
<div style="left:831.20px;top:538.47px;font-family:'Liberation Sans', sans-serif;font-size:12.5px;line-height:12.5px;font-weight:normal;color:#141414;white-space:nowrap;-webkit-text-stroke:0.25px #141414;">28</div>
<div style="left:857.6px;top:534px;width:36.89999999999998px;height:20px;background:#88ccee;"></div>
<div style="left:869.10px;top:538.47px;font-family:'Liberation Sans', sans-serif;font-size:12.5px;line-height:12.5px;font-weight:normal;color:#141414;white-space:nowrap;-webkit-text-stroke:0.25px #141414;">29</div>
<div style="left:895.5px;top:534px;width:36.89999999999998px;height:20px;background:#88ccee;"></div>
<div style="left:907.00px;top:538.47px;font-family:'Liberation Sans', sans-serif;font-size:12.5px;line-height:12.5px;font-weight:normal;color:#141414;white-space:nowrap;-webkit-text-stroke:0.25px #141414;">30</div>
<div style="left:933.4px;top:534px;width:36.89999999999998px;height:20px;background:#88ccee;"></div>
<div style="left:944.90px;top:538.47px;font-family:'Liberation Sans', sans-serif;font-size:12.5px;line-height:12.5px;font-weight:normal;color:#141414;white-space:nowrap;-webkit-text-stroke:0.25px #141414;">31</div>
<div style="left:971.3px;top:534px;width:38.0px;height:20px;background:#e6e7e4;"></div>
<div style="left:743px;top:554px;width:266.5px;height:1px;background:#000;"></div>
<div style="left:744.0px;top:555px;width:36.799999999999955px;height:20px;background:#e6e7e4;"></div>
<div style="left:781.8px;top:555px;width:36.90000000000009px;height:20px;background:#e6e7e4;"></div>
<div style="left:819.7px;top:555px;width:36.89999999999998px;height:20px;background:#e6e7e4;"></div>
<div style="left:857.6px;top:555px;width:36.89999999999998px;height:20px;background:#e6e7e4;"></div>
<div style="left:895.5px;top:555px;width:36.89999999999998px;height:20px;background:#e6e7e4;"></div>
<div style="left:933.4px;top:555px;width:36.89999999999998px;height:20px;background:#e6e7e4;"></div>
<div style="left:971.3px;top:555px;width:38.0px;height:20px;background:#e6e7e4;"></div>
<div style="left:743px;top:575px;width:266.5px;height:1px;background:#000;"></div>
<div style="left:780.8px;top:450px;width:1.2999999999999545px;height:126px;background:#000;"></div>
<div style="left:818.7px;top:450px;width:1.2999999999999545px;height:126px;background:#000;"></div>
<div style="left:856.6px;top:450px;width:1.2999999999999545px;height:126px;background:#000;"></div>
<div style="left:894.5px;top:450px;width:1.2999999999999545px;height:126px;background:#000;"></div>
<div style="left:932.4px;top:450px;width:1.2999999999999545px;height:126px;background:#000;"></div>
<div style="left:970.3px;top:450px;width:1.2999999999999545px;height:126px;background:#000;"></div>
<div style="left:743px;top:450px;width:1.2000000000000455px;height:126px;background:#000;"></div>
<div style="left:743px;top:576px;width:266.5px;height:28px;background:#eeefec;"></div>
<div style="left:866.25px;top:585.07px;font-family:'Liberation Sans', sans-serif;font-size:12.5px;line-height:12.5px;font-weight:normal;color:#1a1a1a;white-space:nowrap;-webkit-text-stroke:0.25px #1a1a1a;">Apr</div>
<div style="left:743px;top:604px;width:266.5px;height:21px;background:#f6f7f5;"></div>
<div style="left:758.25px;top:608.67px;font-family:'Liberation Sans', sans-serif;font-size:12.5px;line-height:12.5px;font-weight:normal;color:#ff1a1a;white-space:nowrap;-webkit-text-stroke:0.25px #ff1a1a;">S</div>
<div style="left:795.05px;top:608.67px;font-family:'Liberation Sans', sans-serif;font-size:12.5px;line-height:12.5px;font-weight:normal;color:#1a1a1a;white-space:nowrap;-webkit-text-stroke:0.25px #1a1a1a;">M</div>
<div style="left:834.35px;top:608.67px;font-family:'Liberation Sans', sans-serif;font-size:12.5px;line-height:12.5px;font-weight:normal;color:#1a1a1a;white-space:nowrap;-webkit-text-stroke:0.25px #1a1a1a;">T</div>
<div style="left:870.15px;top:608.67px;font-family:'Liberation Sans', sans-serif;font-size:12.5px;line-height:12.5px;font-weight:normal;color:#1a1a1a;white-space:nowrap;-webkit-text-stroke:0.25px #1a1a1a;">W</div>
<div style="left:910.15px;top:608.67px;font-family:'Liberation Sans', sans-serif;font-size:12.5px;line-height:12.5px;font-weight:normal;color:#1a1a1a;white-space:nowrap;-webkit-text-stroke:0.25px #1a1a1a;">T</div>
<div style="left:948.05px;top:608.67px;font-family:'Liberation Sans', sans-serif;font-size:12.5px;line-height:12.5px;font-weight:normal;color:#1a1a1a;white-space:nowrap;-webkit-text-stroke:0.25px #1a1a1a;">F</div>
<div style="left:985.90px;top:608.67px;font-family:'Liberation Sans', sans-serif;font-size:12.5px;line-height:12.5px;font-weight:normal;color:#ff1a1a;white-space:nowrap;-webkit-text-stroke:0.25px #ff1a1a;">S</div>
<div style="left:743px;top:625px;width:266.5px;height:1px;background:#000;"></div>
<div style="left:744.0px;top:626px;width:36.799999999999955px;height:20px;background:#e6e7e4;"></div>
<div style="left:781.8px;top:626px;width:36.90000000000009px;height:20px;background:#e6e7e4;"></div>
<div style="left:819.7px;top:626px;width:36.89999999999998px;height:20px;background:#e6e7e4;"></div>
<div style="left:857.6px;top:626px;width:36.89999999999998px;height:20px;background:#e6e7e4;"></div>
<div style="left:895.5px;top:626px;width:36.89999999999998px;height:20px;background:#e6e7e4;"></div>
<div style="left:933.4px;top:626px;width:36.89999999999998px;height:20px;background:#e6e7e4;"></div>
<div style="left:971.3px;top:626px;width:38.0px;height:20px;background:#332288;"></div>
<div style="left:986.55px;top:630.47px;font-family:'Liberation Sans', sans-serif;font-size:12.5px;line-height:12.5px;font-weight:normal;color:#141414;white-space:nowrap;-webkit-text-stroke:0.25px #141414;">1</div>
<div style="left:743px;top:646px;width:266.5px;height:1px;background:#000;"></div>
<div style="left:744.0px;top:647px;width:36.799999999999955px;height:20px;background:#aa4499;"></div>
<div style="left:758.90px;top:651.47px;font-family:'Liberation Sans', sans-serif;font-size:12.5px;line-height:12.5px;font-weight:normal;color:#141414;white-space:nowrap;-webkit-text-stroke:0.25px #141414;">2</div>
<div style="left:781.8px;top:647px;width:36.90000000000009px;height:20px;background:#88ccee;"></div>
<div style="left:796.75px;top:651.47px;font-family:'Liberation Sans', sans-serif;font-size:12.5px;line-height:12.5px;font-weight:normal;color:#141414;white-space:nowrap;-webkit-text-stroke:0.25px #141414;">3</div>
<div style="left:819.7px;top:647px;width:36.89999999999998px;height:20px;background:#88ccee;"></div>
<div style="left:834.65px;top:651.47px;font-family:'Liberation Sans', sans-serif;font-size:12.5px;line-height:12.5px;font-weight:normal;color:#141414;white-space:nowrap;-webkit-text-stroke:0.25px #141414;">4</div>
<div style="left:857.6px;top:647px;width:36.89999999999998px;height:20px;background:#88ccee;"></div>
<div style="left:872.55px;top:651.47px;font-family:'Liberation Sans', sans-serif;font-size:12.5px;line-height:12.5px;font-weight:normal;color:#141414;white-space:nowrap;-webkit-text-stroke:0.25px #141414;">5</div>
<div style="left:895.5px;top:647px;width:36.89999999999998px;height:20px;background:#88ccee;"></div>
<div style="left:910.45px;top:651.47px;font-family:'Liberation Sans', sans-serif;font-size:12.5px;line-height:12.5px;font-weight:normal;color:#141414;white-space:nowrap;-webkit-text-stroke:0.25px #141414;">6</div>
<div style="left:933.4px;top:647px;width:36.89999999999998px;height:20px;background:#88ccee;"></div>
<div style="left:948.35px;top:651.47px;font-family:'Liberation Sans', sans-serif;font-size:12.5px;line-height:12.5px;font-weight:normal;color:#141414;white-space:nowrap;-webkit-text-stroke:0.25px #141414;">7</div>
<div style="left:971.3px;top:647px;width:38.0px;height:20px;background:#332288;"></div>
<div style="left:986.55px;top:651.47px;font-family:'Liberation Sans', sans-serif;font-size:12.5px;line-height:12.5px;font-weight:normal;color:#141414;white-space:nowrap;-webkit-text-stroke:0.25px #141414;">8</div>
<div style="left:743px;top:667px;width:266.5px;height:1px;background:#000;"></div>
<div style="left:744.0px;top:668px;width:36.799999999999955px;height:20px;background:#aa4499;"></div>
<div style="left:758.90px;top:672.47px;font-family:'Liberation Sans', sans-serif;font-size:12.5px;line-height:12.5px;font-weight:normal;color:#141414;white-space:nowrap;-webkit-text-stroke:0.25px #141414;">9</div>
<div style="left:781.8px;top:668px;width:36.90000000000009px;height:20px;background:#88ccee;"></div>
<div style="left:793.30px;top:672.47px;font-family:'Liberation Sans', sans-serif;font-size:12.5px;line-height:12.5px;font-weight:normal;color:#141414;white-space:nowrap;-webkit-text-stroke:0.25px #141414;">10</div>
<div style="left:819.7px;top:668px;width:36.89999999999998px;height:20px;background:#88ccee;"></div>
<div style="left:831.65px;top:672.47px;font-family:'Liberation Sans', sans-serif;font-size:12.5px;line-height:12.5px;font-weight:normal;color:#141414;white-space:nowrap;-webkit-text-stroke:0.25px #141414;">11</div>
<div style="left:857.6px;top:668px;width:36.89999999999998px;height:20px;background:#88ccee;"></div>
<div style="left:869.10px;top:672.47px;font-family:'Liberation Sans', sans-serif;font-size:12.5px;line-height:12.5px;font-weight:normal;color:#141414;white-space:nowrap;-webkit-text-stroke:0.25px #141414;">12</div>
<div style="left:895.5px;top:668px;width:36.89999999999998px;height:20px;background:#88ccee;"></div>
<div style="left:907.00px;top:672.47px;font-family:'Liberation Sans', sans-serif;font-size:12.5px;line-height:12.5px;font-weight:normal;color:#141414;white-space:nowrap;-webkit-text-stroke:0.25px #141414;">13</div>
<div style="left:933.4px;top:668px;width:36.89999999999998px;height:20px;background:#88ccee;"></div>
<div style="left:944.90px;top:672.47px;font-family:'Liberation Sans', sans-serif;font-size:12.5px;line-height:12.5px;font-weight:normal;color:#141414;white-space:nowrap;-webkit-text-stroke:0.25px #141414;">14</div>
<div style="left:971.3px;top:668px;width:38.0px;height:20px;background:#332288;"></div>
<div style="left:983.10px;top:672.47px;font-family:'Liberation Sans', sans-serif;font-size:12.5px;line-height:12.5px;font-weight:normal;color:#141414;white-space:nowrap;-webkit-text-stroke:0.25px #141414;">15</div>
<div style="left:743px;top:688px;width:266.5px;height:1px;background:#000;"></div>
<div style="left:744.0px;top:689px;width:36.799999999999955px;height:20px;background:#aa4499;"></div>
<div style="left:755.45px;top:693.47px;font-family:'Liberation Sans', sans-serif;font-size:12.5px;line-height:12.5px;font-weight:normal;color:#141414;white-space:nowrap;-webkit-text-stroke:0.25px #141414;">16</div>
<div style="left:781.8px;top:689px;width:36.90000000000009px;height:20px;background:#88ccee;"></div>
<div style="left:793.30px;top:693.47px;font-family:'Liberation Sans', sans-serif;font-size:12.5px;line-height:12.5px;font-weight:normal;color:#141414;white-space:nowrap;-webkit-text-stroke:0.25px #141414;">17</div>
<div style="left:819.7px;top:689px;width:36.89999999999998px;height:20px;background:#88ccee;"></div>
<div style="left:831.20px;top:693.47px;font-family:'Liberation Sans', sans-serif;font-size:12.5px;line-height:12.5px;font-weight:normal;color:#141414;white-space:nowrap;-webkit-text-stroke:0.25px #141414;">18</div>
<div style="left:857.6px;top:689px;width:36.89999999999998px;height:20px;background:#88ccee;"></div>
<div style="left:869.10px;top:693.47px;font-family:'Liberation Sans', sans-serif;font-size:12.5px;line-height:12.5px;font-weight:normal;color:#141414;white-space:nowrap;-webkit-text-stroke:0.25px #141414;">19</div>
<div style="left:895.5px;top:689px;width:36.89999999999998px;height:20px;background:#88ccee;"></div>
<div style="left:907.00px;top:693.47px;font-family:'Liberation Sans', sans-serif;font-size:12.5px;line-height:12.5px;font-weight:normal;color:#141414;white-space:nowrap;-webkit-text-stroke:0.25px #141414;">20</div>
<div style="left:933.4px;top:689px;width:36.89999999999998px;height:20px;background:#88ccee;"></div>
<div style="left:944.90px;top:693.47px;font-family:'Liberation Sans', sans-serif;font-size:12.5px;line-height:12.5px;font-weight:normal;color:#141414;white-space:nowrap;-webkit-text-stroke:0.25px #141414;">21</div>
<div style="left:971.3px;top:689px;width:38.0px;height:20px;background:#332288;"></div>
<div style="left:983.10px;top:693.47px;font-family:'Liberation Sans', sans-serif;font-size:12.5px;line-height:12.5px;font-weight:normal;color:#141414;white-space:nowrap;-webkit-text-stroke:0.25px #141414;">22</div>
<div style="left:743px;top:709px;width:266.5px;height:1px;background:#000;"></div>
<div style="left:744.0px;top:710px;width:36.799999999999955px;height:20px;background:#aa4499;"></div>
<div style="left:755.45px;top:714.47px;font-family:'Liberation Sans', sans-serif;font-size:12.5px;line-height:12.5px;font-weight:normal;color:#141414;white-space:nowrap;-webkit-text-stroke:0.25px #141414;">23</div>
<div style="left:781.8px;top:710px;width:36.90000000000009px;height:20px;background:#88ccee;"></div>
<div style="left:793.30px;top:714.47px;font-family:'Liberation Sans', sans-serif;font-size:12.5px;line-height:12.5px;font-weight:normal;color:#141414;white-space:nowrap;-webkit-text-stroke:0.25px #141414;">24</div>
<div style="left:819.7px;top:710px;width:36.89999999999998px;height:20px;background:#88ccee;"></div>
<div style="left:831.20px;top:714.47px;font-family:'Liberation Sans', sans-serif;font-size:12.5px;line-height:12.5px;font-weight:normal;color:#141414;white-space:nowrap;-webkit-text-stroke:0.25px #141414;">25</div>
<div style="left:857.6px;top:710px;width:36.89999999999998px;height:20px;background:#88ccee;"></div>
<div style="left:869.10px;top:714.47px;font-family:'Liberation Sans', sans-serif;font-size:12.5px;line-height:12.5px;font-weight:normal;color:#141414;white-space:nowrap;-webkit-text-stroke:0.25px #141414;">26</div>
<div style="left:895.5px;top:710px;width:36.89999999999998px;height:20px;background:#88ccee;"></div>
<div style="left:907.00px;top:714.47px;font-family:'Liberation Sans', sans-serif;font-size:12.5px;line-height:12.5px;font-weight:normal;color:#141414;white-space:nowrap;-webkit-text-stroke:0.25px #141414;">27</div>
<div style="left:933.4px;top:710px;width:36.89999999999998px;height:20px;background:#88ccee;"></div>
<div style="left:944.90px;top:714.47px;font-family:'Liberation Sans', sans-serif;font-size:12.5px;line-height:12.5px;font-weight:normal;color:#141414;white-space:nowrap;-webkit-text-stroke:0.25px #141414;">28</div>
<div style="left:971.3px;top:710px;width:38.0px;height:20px;background:#332288;"></div>
<div style="left:983.10px;top:714.47px;font-family:'Liberation Sans', sans-serif;font-size:12.5px;line-height:12.5px;font-weight:normal;color:#141414;white-space:nowrap;-webkit-text-stroke:0.25px #141414;">29</div>
<div style="left:743px;top:730px;width:266.5px;height:1px;background:#000;"></div>
<div style="left:744.0px;top:731px;width:36.799999999999955px;height:20px;background:#aa4499;"></div>
<div style="left:755.45px;top:735.47px;font-family:'Liberation Sans', sans-serif;font-size:12.5px;line-height:12.5px;font-weight:normal;color:#141414;white-space:nowrap;-webkit-text-stroke:0.25px #141414;">30</div>
<div style="left:781.8px;top:731px;width:36.90000000000009px;height:20px;background:#e6e7e4;"></div>
<div style="left:819.7px;top:731px;width:36.89999999999998px;height:20px;background:#e6e7e4;"></div>
<div style="left:857.6px;top:731px;width:36.89999999999998px;height:20px;background:#e6e7e4;"></div>
<div style="left:895.5px;top:731px;width:36.89999999999998px;height:20px;background:#e6e7e4;"></div>
<div style="left:933.4px;top:731px;width:36.89999999999998px;height:20px;background:#e6e7e4;"></div>
<div style="left:971.3px;top:731px;width:38.0px;height:20px;background:#e6e7e4;"></div>
<div style="left:743px;top:751px;width:266.5px;height:1px;background:#000;"></div>
<div style="left:780.8px;top:626px;width:1.2999999999999545px;height:126px;background:#000;"></div>
<div style="left:818.7px;top:626px;width:1.2999999999999545px;height:126px;background:#000;"></div>
<div style="left:856.6px;top:626px;width:1.2999999999999545px;height:126px;background:#000;"></div>
<div style="left:894.5px;top:626px;width:1.2999999999999545px;height:126px;background:#000;"></div>
<div style="left:932.4px;top:626px;width:1.2999999999999545px;height:126px;background:#000;"></div>
<div style="left:970.3px;top:626px;width:1.2999999999999545px;height:126px;background:#000;"></div>
<div style="left:743px;top:626px;width:1.2000000000000455px;height:126px;background:#000;"></div>
<div style="left:743px;top:752px;width:266.5px;height:28px;background:#eeefec;"></div>
<div style="left:864.15px;top:761.07px;font-family:'Liberation Sans', sans-serif;font-size:12.5px;line-height:12.5px;font-weight:normal;color:#1a1a1a;white-space:nowrap;-webkit-text-stroke:0.25px #1a1a1a;">May</div>
<div style="left:743px;top:780px;width:266.5px;height:21px;background:#f6f7f5;"></div>
<div style="left:758.25px;top:784.67px;font-family:'Liberation Sans', sans-serif;font-size:12.5px;line-height:12.5px;font-weight:normal;color:#ff1a1a;white-space:nowrap;-webkit-text-stroke:0.25px #ff1a1a;">S</div>
<div style="left:795.05px;top:784.67px;font-family:'Liberation Sans', sans-serif;font-size:12.5px;line-height:12.5px;font-weight:normal;color:#1a1a1a;white-space:nowrap;-webkit-text-stroke:0.25px #1a1a1a;">M</div>
<div style="left:834.35px;top:784.67px;font-family:'Liberation Sans', sans-serif;font-size:12.5px;line-height:12.5px;font-weight:normal;color:#1a1a1a;white-space:nowrap;-webkit-text-stroke:0.25px #1a1a1a;">T</div>
<div style="left:870.15px;top:784.67px;font-family:'Liberation Sans', sans-serif;font-size:12.5px;line-height:12.5px;font-weight:normal;color:#1a1a1a;white-space:nowrap;-webkit-text-stroke:0.25px #1a1a1a;">W</div>
<div style="left:910.15px;top:784.67px;font-family:'Liberation Sans', sans-serif;font-size:12.5px;line-height:12.5px;font-weight:normal;color:#1a1a1a;white-space:nowrap;-webkit-text-stroke:0.25px #1a1a1a;">T</div>
<div style="left:948.05px;top:784.67px;font-family:'Liberation Sans', sans-serif;font-size:12.5px;line-height:12.5px;font-weight:normal;color:#1a1a1a;white-space:nowrap;-webkit-text-stroke:0.25px #1a1a1a;">F</div>
<div style="left:985.90px;top:784.67px;font-family:'Liberation Sans', sans-serif;font-size:12.5px;line-height:12.5px;font-weight:normal;color:#ff1a1a;white-space:nowrap;-webkit-text-stroke:0.25px #ff1a1a;">S</div>
<div style="left:743px;top:801px;width:266.5px;height:1px;background:#000;"></div>
<div style="left:744.0px;top:802px;width:36.799999999999955px;height:20px;background:#e6e7e4;"></div>
<div style="left:781.8px;top:802px;width:36.90000000000009px;height:20px;background:#88ccee;"></div>
<div style="left:796.75px;top:806.47px;font-family:'Liberation Sans', sans-serif;font-size:12.5px;line-height:12.5px;font-weight:normal;color:#141414;white-space:nowrap;-webkit-text-stroke:0.25px #141414;">1</div>
<div style="left:819.7px;top:802px;width:36.89999999999998px;height:20px;background:#88ccee;"></div>
<div style="left:834.65px;top:806.47px;font-family:'Liberation Sans', sans-serif;font-size:12.5px;line-height:12.5px;font-weight:normal;color:#141414;white-space:nowrap;-webkit-text-stroke:0.25px #141414;">2</div>
<div style="left:857.6px;top:802px;width:36.89999999999998px;height:20px;background:#88ccee;"></div>
<div style="left:872.55px;top:806.47px;font-family:'Liberation Sans', sans-serif;font-size:12.5px;line-height:12.5px;font-weight:normal;color:#141414;white-space:nowrap;-webkit-text-stroke:0.25px #141414;">3</div>
<div style="left:895.5px;top:802px;width:36.89999999999998px;height:20px;background:#88ccee;"></div>
<div style="left:910.45px;top:806.47px;font-family:'Liberation Sans', sans-serif;font-size:12.5px;line-height:12.5px;font-weight:normal;color:#141414;white-space:nowrap;-webkit-text-stroke:0.25px #141414;">4</div>
<div style="left:933.4px;top:802px;width:36.89999999999998px;height:20px;background:#88ccee;"></div>
<div style="left:948.35px;top:806.47px;font-family:'Liberation Sans', sans-serif;font-size:12.5px;line-height:12.5px;font-weight:normal;color:#141414;white-space:nowrap;-webkit-text-stroke:0.25px #141414;">5</div>
<div style="left:971.3px;top:802px;width:38.0px;height:20px;background:#332288;"></div>
<div style="left:986.55px;top:806.47px;font-family:'Liberation Sans', sans-serif;font-size:12.5px;line-height:12.5px;font-weight:normal;color:#141414;white-space:nowrap;-webkit-text-stroke:0.25px #141414;">6</div>
<div style="left:743px;top:822px;width:266.5px;height:1px;background:#000;"></div>
<div style="left:744.0px;top:823px;width:36.799999999999955px;height:20px;background:#aa4499;"></div>
<div style="left:758.90px;top:827.47px;font-family:'Liberation Sans', sans-serif;font-size:12.5px;line-height:12.5px;font-weight:normal;color:#141414;white-space:nowrap;-webkit-text-stroke:0.25px #141414;">7</div>
<div style="left:781.8px;top:823px;width:36.90000000000009px;height:20px;background:#88ccee;"></div>
<div style="left:796.75px;top:827.47px;font-family:'Liberation Sans', sans-serif;font-size:12.5px;line-height:12.5px;font-weight:normal;color:#141414;white-space:nowrap;-webkit-text-stroke:0.25px #141414;">8</div>
<div style="left:819.7px;top:823px;width:36.89999999999998px;height:20px;background:#88ccee;"></div>
<div style="left:834.65px;top:827.47px;font-family:'Liberation Sans', sans-serif;font-size:12.5px;line-height:12.5px;font-weight:normal;color:#141414;white-space:nowrap;-webkit-text-stroke:0.25px #141414;">9</div>
<div style="left:857.6px;top:823px;width:36.89999999999998px;height:20px;background:#88ccee;"></div>
<div style="left:869.10px;top:827.47px;font-family:'Liberation Sans', sans-serif;font-size:12.5px;line-height:12.5px;font-weight:normal;color:#141414;white-space:nowrap;-webkit-text-stroke:0.25px #141414;">10</div>
<div style="left:895.5px;top:823px;width:36.89999999999998px;height:20px;background:#88ccee;"></div>
<div style="left:907.45px;top:827.47px;font-family:'Liberation Sans', sans-serif;font-size:12.5px;line-height:12.5px;font-weight:normal;color:#141414;white-space:nowrap;-webkit-text-stroke:0.25px #141414;">11</div>
<div style="left:933.4px;top:823px;width:36.89999999999998px;height:20px;background:#88ccee;"></div>
<div style="left:944.90px;top:827.47px;font-family:'Liberation Sans', sans-serif;font-size:12.5px;line-height:12.5px;font-weight:normal;color:#141414;white-space:nowrap;-webkit-text-stroke:0.25px #141414;">12</div>
<div style="left:971.3px;top:823px;width:38.0px;height:20px;background:#332288;"></div>
<div style="left:983.10px;top:827.47px;font-family:'Liberation Sans', sans-serif;font-size:12.5px;line-height:12.5px;font-weight:normal;color:#141414;white-space:nowrap;-webkit-text-stroke:0.25px #141414;">13</div>
<div style="left:743px;top:843px;width:266.5px;height:1px;background:#000;"></div>
<div style="left:744.0px;top:844px;width:36.799999999999955px;height:20px;background:#aa4499;"></div>
<div style="left:755.45px;top:848.47px;font-family:'Liberation Sans', sans-serif;font-size:12.5px;line-height:12.5px;font-weight:normal;color:#141414;white-space:nowrap;-webkit-text-stroke:0.25px #141414;">14</div>
<div style="left:781.8px;top:844px;width:36.90000000000009px;height:20px;background:#88ccee;"></div>
<div style="left:793.30px;top:848.47px;font-family:'Liberation Sans', sans-serif;font-size:12.5px;line-height:12.5px;font-weight:normal;color:#141414;white-space:nowrap;-webkit-text-stroke:0.25px #141414;">15</div>
<div style="left:819.7px;top:844px;width:36.89999999999998px;height:20px;background:#88ccee;"></div>
<div style="left:831.20px;top:848.47px;font-family:'Liberation Sans', sans-serif;font-size:12.5px;line-height:12.5px;font-weight:normal;color:#141414;white-space:nowrap;-webkit-text-stroke:0.25px #141414;">16</div>
<div style="left:857.6px;top:844px;width:36.89999999999998px;height:20px;background:#88ccee;"></div>
<div style="left:869.10px;top:848.47px;font-family:'Liberation Sans', sans-serif;font-size:12.5px;line-height:12.5px;font-weight:normal;color:#141414;white-space:nowrap;-webkit-text-stroke:0.25px #141414;">17</div>
<div style="left:895.5px;top:844px;width:36.89999999999998px;height:20px;background:#88ccee;"></div>
<div style="left:907.00px;top:848.47px;font-family:'Liberation Sans', sans-serif;font-size:12.5px;line-height:12.5px;font-weight:normal;color:#141414;white-space:nowrap;-webkit-text-stroke:0.25px #141414;">18</div>
<div style="left:933.4px;top:844px;width:36.89999999999998px;height:20px;background:#88ccee;"></div>
<div style="left:944.90px;top:848.47px;font-family:'Liberation Sans', sans-serif;font-size:12.5px;line-height:12.5px;font-weight:normal;color:#141414;white-space:nowrap;-webkit-text-stroke:0.25px #141414;">19</div>
<div style="left:971.3px;top:844px;width:38.0px;height:20px;background:#332288;"></div>
<div style="left:983.10px;top:848.47px;font-family:'Liberation Sans', sans-serif;font-size:12.5px;line-height:12.5px;font-weight:normal;color:#141414;white-space:nowrap;-webkit-text-stroke:0.25px #141414;">20</div>
<div style="left:743px;top:864px;width:266.5px;height:1px;background:#000;"></div>
<div style="left:744.0px;top:865px;width:36.799999999999955px;height:20px;background:#aa4499;"></div>
<div style="left:755.45px;top:869.47px;font-family:'Liberation Sans', sans-serif;font-size:12.5px;line-height:12.5px;font-weight:normal;color:#141414;white-space:nowrap;-webkit-text-stroke:0.25px #141414;">21</div>
<div style="left:781.8px;top:865px;width:36.90000000000009px;height:20px;background:#88ccee;"></div>
<div style="left:793.30px;top:869.47px;font-family:'Liberation Sans', sans-serif;font-size:12.5px;line-height:12.5px;font-weight:normal;color:#141414;white-space:nowrap;-webkit-text-stroke:0.25px #141414;">22</div>
<div style="left:819.7px;top:865px;width:36.89999999999998px;height:20px;background:#88ccee;"></div>
<div style="left:831.20px;top:869.47px;font-family:'Liberation Sans', sans-serif;font-size:12.5px;line-height:12.5px;font-weight:normal;color:#141414;white-space:nowrap;-webkit-text-stroke:0.25px #141414;">23</div>
<div style="left:857.6px;top:865px;width:36.89999999999998px;height:20px;background:#88ccee;"></div>
<div style="left:869.10px;top:869.47px;font-family:'Liberation Sans', sans-serif;font-size:12.5px;line-height:12.5px;font-weight:normal;color:#141414;white-space:nowrap;-webkit-text-stroke:0.25px #141414;">24</div>
<div style="left:895.5px;top:865px;width:36.89999999999998px;height:20px;background:#88ccee;"></div>
<div style="left:907.00px;top:869.47px;font-family:'Liberation Sans', sans-serif;font-size:12.5px;line-height:12.5px;font-weight:normal;color:#141414;white-space:nowrap;-webkit-text-stroke:0.25px #141414;">25</div>
<div style="left:933.4px;top:865px;width:36.89999999999998px;height:20px;background:#88ccee;"></div>
<div style="left:944.90px;top:869.47px;font-family:'Liberation Sans', sans-serif;font-size:12.5px;line-height:12.5px;font-weight:normal;color:#141414;white-space:nowrap;-webkit-text-stroke:0.25px #141414;">26</div>
<div style="left:971.3px;top:865px;width:38.0px;height:20px;background:#332288;"></div>
<div style="left:983.10px;top:869.47px;font-family:'Liberation Sans', sans-serif;font-size:12.5px;line-height:12.5px;font-weight:normal;color:#141414;white-space:nowrap;-webkit-text-stroke:0.25px #141414;">27</div>
<div style="left:743px;top:885px;width:266.5px;height:1px;background:#000;"></div>
<div style="left:744.0px;top:886px;width:36.799999999999955px;height:20px;background:#aa4499;"></div>
<div style="left:755.45px;top:890.47px;font-family:'Liberation Sans', sans-serif;font-size:12.5px;line-height:12.5px;font-weight:normal;color:#141414;white-space:nowrap;-webkit-text-stroke:0.25px #141414;">28</div>
<div style="left:781.8px;top:886px;width:36.90000000000009px;height:20px;background:#88ccee;"></div>
<div style="left:793.30px;top:890.47px;font-family:'Liberation Sans', sans-serif;font-size:12.5px;line-height:12.5px;font-weight:normal;color:#141414;white-space:nowrap;-webkit-text-stroke:0.25px #141414;">29</div>
<div style="left:819.7px;top:886px;width:36.89999999999998px;height:20px;background:#88ccee;"></div>
<div style="left:831.20px;top:890.47px;font-family:'Liberation Sans', sans-serif;font-size:12.5px;line-height:12.5px;font-weight:normal;color:#141414;white-space:nowrap;-webkit-text-stroke:0.25px #141414;">30</div>
<div style="left:857.6px;top:886px;width:36.89999999999998px;height:20px;background:#88ccee;"></div>
<div style="left:869.10px;top:890.47px;font-family:'Liberation Sans', sans-serif;font-size:12.5px;line-height:12.5px;font-weight:normal;color:#141414;white-space:nowrap;-webkit-text-stroke:0.25px #141414;">31</div>
<div style="left:895.5px;top:886px;width:36.89999999999998px;height:20px;background:#e6e7e4;"></div>
<div style="left:933.4px;top:886px;width:36.89999999999998px;height:20px;background:#e6e7e4;"></div>
<div style="left:971.3px;top:886px;width:38.0px;height:20px;background:#e6e7e4;"></div>
<div style="left:743px;top:906px;width:266.5px;height:1px;background:#000;"></div>
<div style="left:744.0px;top:907px;width:36.799999999999955px;height:20px;background:#e6e7e4;"></div>
<div style="left:781.8px;top:907px;width:36.90000000000009px;height:20px;background:#e6e7e4;"></div>
<div style="left:819.7px;top:907px;width:36.89999999999998px;height:20px;background:#e6e7e4;"></div>
<div style="left:857.6px;top:907px;width:36.89999999999998px;height:20px;background:#e6e7e4;"></div>
<div style="left:895.5px;top:907px;width:36.89999999999998px;height:20px;background:#e6e7e4;"></div>
<div style="left:933.4px;top:907px;width:36.89999999999998px;height:20px;background:#e6e7e4;"></div>
<div style="left:971.3px;top:907px;width:38.0px;height:20px;background:#e6e7e4;"></div>
<div style="left:743px;top:927px;width:266.5px;height:1px;background:#000;"></div>
<div style="left:780.8px;top:802px;width:1.2999999999999545px;height:126px;background:#000;"></div>
<div style="left:818.7px;top:802px;width:1.2999999999999545px;height:126px;background:#000;"></div>
<div style="left:856.6px;top:802px;width:1.2999999999999545px;height:126px;background:#000;"></div>
<div style="left:894.5px;top:802px;width:1.2999999999999545px;height:126px;background:#000;"></div>
<div style="left:932.4px;top:802px;width:1.2999999999999545px;height:126px;background:#000;"></div>
<div style="left:970.3px;top:802px;width:1.2999999999999545px;height:126px;background:#000;"></div>
<div style="left:743px;top:802px;width:1.2000000000000455px;height:126px;background:#000;"></div>
<div style="left:743px;top:928px;width:266.5px;height:28px;background:#eeefec;"></div>
<div style="left:865.90px;top:937.07px;font-family:'Liberation Sans', sans-serif;font-size:12.5px;line-height:12.5px;font-weight:normal;color:#1a1a1a;white-space:nowrap;-webkit-text-stroke:0.25px #1a1a1a;">Jun</div>
<div style="left:743px;top:956px;width:266.5px;height:21px;background:#f6f7f5;"></div>
<div style="left:758.25px;top:960.67px;font-family:'Liberation Sans', sans-serif;font-size:12.5px;line-height:12.5px;font-weight:normal;color:#ff1a1a;white-space:nowrap;-webkit-text-stroke:0.25px #ff1a1a;">S</div>
<div style="left:795.05px;top:960.67px;font-family:'Liberation Sans', sans-serif;font-size:12.5px;line-height:12.5px;font-weight:normal;color:#1a1a1a;white-space:nowrap;-webkit-text-stroke:0.25px #1a1a1a;">M</div>
<div style="left:834.35px;top:960.67px;font-family:'Liberation Sans', sans-serif;font-size:12.5px;line-height:12.5px;font-weight:normal;color:#1a1a1a;white-space:nowrap;-webkit-text-stroke:0.25px #1a1a1a;">T</div>
<div style="left:870.15px;top:960.67px;font-family:'Liberation Sans', sans-serif;font-size:12.5px;line-height:12.5px;font-weight:normal;color:#1a1a1a;white-space:nowrap;-webkit-text-stroke:0.25px #1a1a1a;">W</div>
<div style="left:910.15px;top:960.67px;font-family:'Liberation Sans', sans-serif;font-size:12.5px;line-height:12.5px;font-weight:normal;color:#1a1a1a;white-space:nowrap;-webkit-text-stroke:0.25px #1a1a1a;">T</div>
<div style="left:948.05px;top:960.67px;font-family:'Liberation Sans', sans-serif;font-size:12.5px;line-height:12.5px;font-weight:normal;color:#1a1a1a;white-space:nowrap;-webkit-text-stroke:0.25px #1a1a1a;">F</div>
<div style="left:985.90px;top:960.67px;font-family:'Liberation Sans', sans-serif;font-size:12.5px;line-height:12.5px;font-weight:normal;color:#ff1a1a;white-space:nowrap;-webkit-text-stroke:0.25px #ff1a1a;">S</div>
<div style="left:743px;top:977px;width:266.5px;height:1px;background:#000;"></div>
<div style="left:744.0px;top:978px;width:36.799999999999955px;height:20px;background:#e6e7e4;"></div>
<div style="left:781.8px;top:978px;width:36.90000000000009px;height:20px;background:#e6e7e4;"></div>
<div style="left:819.7px;top:978px;width:36.89999999999998px;height:20px;background:#e6e7e4;"></div>
<div style="left:857.6px;top:978px;width:36.89999999999998px;height:20px;background:#e6e7e4;"></div>
<div style="left:895.5px;top:978px;width:36.89999999999998px;height:20px;background:#88ccee;"></div>
<div style="left:910.45px;top:982.47px;font-family:'Liberation Sans', sans-serif;font-size:12.5px;line-height:12.5px;font-weight:normal;color:#141414;white-space:nowrap;-webkit-text-stroke:0.25px #141414;">1</div>
<div style="left:933.4px;top:978px;width:36.89999999999998px;height:20px;background:#88ccee;"></div>
<div style="left:948.35px;top:982.47px;font-family:'Liberation Sans', sans-serif;font-size:12.5px;line-height:12.5px;font-weight:normal;color:#141414;white-space:nowrap;-webkit-text-stroke:0.25px #141414;">2</div>
<div style="left:971.3px;top:978px;width:38.0px;height:20px;background:#332288;"></div>
<div style="left:986.55px;top:982.47px;font-family:'Liberation Sans', sans-serif;font-size:12.5px;line-height:12.5px;font-weight:normal;color:#141414;white-space:nowrap;-webkit-text-stroke:0.25px #141414;">3</div>
<div style="left:743px;top:998px;width:266.5px;height:1px;background:#000;"></div>
<div style="left:744.0px;top:999px;width:36.799999999999955px;height:18px;background:#aa4499;"></div>
<div style="left:758.90px;top:1003.47px;font-family:'Liberation Sans', sans-serif;font-size:12.5px;line-height:12.5px;font-weight:normal;color:#141414;white-space:nowrap;-webkit-text-stroke:0.25px #141414;">4</div>
<div style="left:781.8px;top:999px;width:36.90000000000009px;height:18px;background:#88ccee;"></div>
<div style="left:796.75px;top:1003.47px;font-family:'Liberation Sans', sans-serif;font-size:12.5px;line-height:12.5px;font-weight:normal;color:#141414;white-space:nowrap;-webkit-text-stroke:0.25px #141414;">5</div>
<div style="left:819.7px;top:999px;width:36.89999999999998px;height:18px;background:#88ccee;"></div>
<div style="left:834.65px;top:1003.47px;font-family:'Liberation Sans', sans-serif;font-size:12.5px;line-height:12.5px;font-weight:normal;color:#141414;white-space:nowrap;-webkit-text-stroke:0.25px #141414;">6</div>
<div style="left:857.6px;top:999px;width:36.89999999999998px;height:18px;background:#88ccee;"></div>
<div style="left:872.55px;top:1003.47px;font-family:'Liberation Sans', sans-serif;font-size:12.5px;line-height:12.5px;font-weight:normal;color:#141414;white-space:nowrap;-webkit-text-stroke:0.25px #141414;">7</div>
<div style="left:895.5px;top:999px;width:36.89999999999998px;height:18px;background:#88ccee;"></div>
<div style="left:910.45px;top:1003.47px;font-family:'Liberation Sans', sans-serif;font-size:12.5px;line-height:12.5px;font-weight:normal;color:#141414;white-space:nowrap;-webkit-text-stroke:0.25px #141414;">8</div>
<div style="left:933.4px;top:999px;width:36.89999999999998px;height:18px;background:#88ccee;"></div>
<div style="left:948.35px;top:1003.47px;font-family:'Liberation Sans', sans-serif;font-size:12.5px;line-height:12.5px;font-weight:normal;color:#141414;white-space:nowrap;-webkit-text-stroke:0.25px #141414;">9</div>
<div style="left:971.3px;top:999px;width:38.0px;height:18px;background:#332288;"></div>
<div style="left:983.10px;top:1003.47px;font-family:'Liberation Sans', sans-serif;font-size:12.5px;line-height:12.5px;font-weight:normal;color:#141414;white-space:nowrap;-webkit-text-stroke:0.25px #141414;">10</div>
<div style="left:743px;top:1019px;width:266.5px;height:1px;background:#000;"></div>
<div style="left:780.8px;top:978px;width:1.2999999999999545px;height:39px;background:#000;"></div>
<div style="left:818.7px;top:978px;width:1.2999999999999545px;height:39px;background:#000;"></div>
<div style="left:856.6px;top:978px;width:1.2999999999999545px;height:39px;background:#000;"></div>
<div style="left:894.5px;top:978px;width:1.2999999999999545px;height:39px;background:#000;"></div>
<div style="left:932.4px;top:978px;width:1.2999999999999545px;height:39px;background:#000;"></div>
<div style="left:970.3px;top:978px;width:1.2999999999999545px;height:39px;background:#000;"></div>
<div style="left:743px;top:978px;width:1.2000000000000455px;height:39px;background:#000;"></div>
<div style="left:1009.5px;top:54px;width:13.5px;height:963px;background:#e3e4e1;border-left:1px solid #c9cac7;box-sizing:border-box"></div>
<div style="left:1009.5px;top:67px;width:13.5px;height:428.5px;background:#f5f6f4;border-left:1px solid #c9cac7;border-bottom:1px solid #c9cac7;box-sizing:border-box"></div>
<div style="left:1009.5px;top:54px;width:13.5px;height:13.5px;background:#f5f6f4;border-left:1px solid #c9cac7;border-bottom:1px solid #d0d1ce;box-sizing:border-box"></div>
<svg style="position:absolute;left:1011px;top:56px;" width="11" height="9" viewBox="0 0 11 9"><polygon points="1.5,7 9.5,7 5.5,3" fill="#555"/></svg>
<div style="left:1009.5px;top:1003.5px;width:13.5px;height:13.5px;background:#f5f6f4;border-left:1px solid #c9cac7;border-top:1px solid #d0d1ce;box-sizing:border-box"></div>
<svg style="position:absolute;left:1011px;top:1006px;" width="11" height="9" viewBox="0 0 11 9"><polygon points="1.5,3 9.5,3 5.5,7" fill="#555"/></svg>
<div style="left:1023px;top:18px;width:250px;height:999px;background:#2d3134;"></div>
<svg style="position:absolute;left:1026px;top:500.7px;" width="8" height="8" viewBox="0 0 8 8"><circle cx="4" cy="4" r="3.6" fill="#d2d3d0"/></svg>
<svg style="position:absolute;left:1026px;top:512.8px;" width="8" height="8" viewBox="0 0 8 8"><circle cx="4" cy="4" r="3.6" fill="#d2d3d0"/></svg>
<svg style="position:absolute;left:1026px;top:524.8px;" width="8" height="8" viewBox="0 0 8 8"><circle cx="4" cy="4" r="3.6" fill="#d2d3d0"/></svg>
<div style="left:1038px;top:19px;width:78px;height:26px;background:#7f807d;border-top:1.2px solid #000;border-top-right-radius:5px;box-sizing:border-box"></div>
<div style="left:1049.60px;top:28.97px;font-family:'Liberation Sans', sans-serif;font-size:12.5px;line-height:12.5px;font-weight:normal;color:#f2f2f0;white-space:nowrap;-webkit-text-stroke:0.25px #f2f2f0;transform:scaleX(1.0148);transform-origin:0 0;">My Model</div>
<div style="left:1116px;top:19px;width:1.5px;height:25px;background:#000;"></div>
<div style="left:1117.3px;top:19px;width:61.700000000000045px;height:26px;background:#7f807d;border-top:1.2px solid #000;border-top-left-radius:5px;border-top-right-radius:5px;box-sizing:border-box"></div>
<div style="left:1128.30px;top:28.97px;font-family:'Liberation Sans', sans-serif;font-size:12.5px;line-height:12.5px;font-weight:normal;color:#f2f2f0;white-space:nowrap;-webkit-text-stroke:0.25px #f2f2f0;transform:scaleX(1.0131);transform-origin:0 0;">Library</div>
<div style="left:1178.5px;top:30px;width:1.5px;height:15px;background:#000;"></div>
<div style="left:1180px;top:19px;width:43.09999999999991px;height:30px;background:#91b2dd;border-top-left-radius:6px;border-top-right-radius:6px"></div>
<div style="left:1191.30px;top:28.97px;font-family:'Liberation Sans', sans-serif;font-size:12.5px;line-height:12.5px;font-weight:normal;color:#f4f6fa;white-space:nowrap;-webkit-text-stroke:0.25px #f4f6fa;transform:scaleX(0.9767);transform-origin:0 0;">Edit</div>
<div style="left:1038px;top:44px;width:185.0999999999999px;height:5px;background:#91b2dd;"></div>
<div style="left:1038px;top:49px;width:235px;height:1px;background:#000;"></div>
<div style="left:1038px;top:50px;width:235px;height:28px;background:linear-gradient(#91b4e0 0%,#7ea5d6 35%,#6590c5 70%,#5282bb 100%);"></div>
<div style="left:1038px;top:55px;width:28.299999999999955px;height:21px;background:rgba(30,50,80,0.28);"></div>
<div style="left:1066.8px;top:54px;width:57.799999999999955px;height:22px;background:rgba(255,255,255,0.25);"></div>
<svg style="position:absolute;left:1038px;top:50px;" width="90" height="28" viewBox="0 0 90 28"><path d="M14.80,6.80 L16.07,6.91 L16.90,4.43 L20.08,5.75 L18.92,8.09 L19.89,8.91 L20.71,9.88 L23.05,8.72 L24.37,11.90 L21.89,12.73 L22.00,14.00 L21.89,15.27 L24.37,16.10 L23.05,19.28 L20.71,18.12 L19.89,19.09 L18.92,19.91 L20.08,22.25 L16.90,23.57 L16.07,21.09 L14.80,21.20 L13.53,21.09 L12.70,23.57 L9.52,22.25 L10.68,19.91 L9.71,19.09 L8.89,18.12 L6.55,19.28 L5.23,16.10 L7.71,15.27 L7.60,14.00 L7.71,12.73 L5.23,11.90 L6.55,8.72 L8.89,9.88 L9.71,8.91 L10.68,8.09 L9.52,5.75 L12.70,4.43 L13.53,6.91Z" fill="#f4f6f8"/><circle cx="14.8" cy="14" r="2.6" fill="#5a7ca6"/><line x1="30.5" y1="16" x2="56.5" y2="16" stroke="#3a66ac" stroke-width="1.3"/><circle cx="43.5" cy="16" r="8.6" fill="#f6f8fb" stroke="#2f5ea6" stroke-width="1.5"/><ellipse cx="44.0" cy="18.5" rx="6" ry="4.5" fill="#a7bfe3"/><circle cx="43.0" cy="14.5" r="5" fill="#fbfcfd"/><line x1="43.5" y1="4" x2="43.5" y2="7.5" stroke="#3562a8" stroke-width="1.5"/><line x1="34.5" y1="6" x2="37.0" y2="9" stroke="#3562a8" stroke-width="1.4"/><line x1="52.5" y1="6" x2="50.0" y2="9" stroke="#3562a8" stroke-width="1.4"/><line x1="59.5" y1="16" x2="85.5" y2="16" stroke="#3a66ac" stroke-width="1.3"/><circle cx="72.5" cy="16" r="8.6" fill="#f6f8fb" stroke="#2f5ea6" stroke-width="1.5"/><ellipse cx="73.0" cy="18.5" rx="6" ry="4.5" fill="#a7bfe3"/><circle cx="72.0" cy="14.5" r="5" fill="#fbfcfd"/><line x1="72.5" y1="4" x2="72.5" y2="7.5" stroke="#3562a8" stroke-width="1.5"/><line x1="63.5" y1="6" x2="66.0" y2="9" stroke="#3562a8" stroke-width="1.4"/><line x1="81.5" y1="6" x2="79.0" y2="9" stroke="#3562a8" stroke-width="1.4"/></svg>
<div style="left:1038px;top:78px;width:235px;height:1px;background:#000;"></div>
<div style="left:1038px;top:79px;width:221px;height:31.5px;background:#7f807d;"></div>
<div style="left:1041.30px;top:88.47px;font-family:'Liberation Sans', sans-serif;font-size:12.5px;line-height:12.5px;font-weight:bold;color:#0d0d0d;white-space:nowrap;-webkit-text-stroke:0px #0d0d0d;transform:scaleX(0.9485);transform-origin:0 0;">OS:Schedule:Day</div>
<div style="left:1038px;top:110.5px;width:221px;height:906.5px;background:#e6e8e4;"></div>
<div style="left:1038px;top:110px;width:107px;height:1px;background:#000;"></div>
<div style="left:1047.00px;top:122.98px;font-family:'Liberation Sans', sans-serif;font-size:12.5px;line-height:12.5px;font-weight:normal;color:#111;white-space:nowrap;-webkit-text-stroke:0.25px #111;">Name</div>
<div style="left:1047px;top:143.4px;width:202.79999999999995px;height:24.30000000000001px;background:#eff0ed;border:1px solid #aaaba8;border-radius:3px;box-sizing:border-box"></div>
<div style="left:1050.00px;top:150.18px;font-family:'Liberation Sans', sans-serif;font-size:12.5px;line-height:12.5px;font-weight:normal;color:#c3bfbf;white-space:nowrap;-webkit-text-stroke:0.25px #c3bfbf;">Office Bldg Equip Default Schedule</div>
<div style="left:1038px;top:177px;width:221px;height:1px;background:#7f807d;"></div>
<div style="left:1047.00px;top:189.90px;font-family:'Liberation Sans', sans-serif;font-size:12.5px;line-height:12.5px;font-weight:normal;color:#111;white-space:nowrap;-webkit-text-stroke:0.25px #111;">Schedule Type Limits Name</div>
<div style="left:1047px;top:210.32000000000002px;width:202.79999999999995px;height:24.30000000000001px;background:#eff0ed;border:1px solid #aaaba8;border-radius:3px;box-sizing:border-box"></div>
<div style="left:1050.00px;top:217.10px;font-family:'Liberation Sans', sans-serif;font-size:12.5px;line-height:12.5px;font-weight:normal;color:#c3bfbf;white-space:nowrap;-webkit-text-stroke:0.25px #c3bfbf;">Fraction</div>
<div style="left:1038px;top:244px;width:221px;height:1px;background:#7f807d;"></div>
<div style="left:1047.00px;top:256.81px;font-family:'Liberation Sans', sans-serif;font-size:12.5px;line-height:12.5px;font-weight:normal;color:#111;white-space:nowrap;-webkit-text-stroke:0.25px #111;">Interpolate to Timestep</div>
<div style="left:1047px;top:277.24px;width:202.79999999999995px;height:24.299999999999955px;background:#eff0ed;border:1px solid #aaaba8;border-radius:3px;box-sizing:border-box"></div>
<div style="left:1050.00px;top:284.01px;font-family:'Liberation Sans', sans-serif;font-size:12.5px;line-height:12.5px;font-weight:normal;color:#c3bfbf;white-space:nowrap;-webkit-text-stroke:0.25px #c3bfbf;">No</div>
<div style="left:1038px;top:311px;width:221px;height:1px;background:#7f807d;"></div>
<div style="left:1047.00px;top:323.74px;font-family:'Liberation Sans', sans-serif;font-size:12.5px;line-height:12.5px;font-weight:normal;color:#111;white-space:nowrap;-webkit-text-stroke:0.25px #111;">Hour</div>
<div style="left:1047px;top:344.16px;width:189.5999999999999px;height:24.299999999999955px;background:#eff0ed;border:1px solid #aaaba8;border-radius:3px;box-sizing:border-box"></div>
<div style="left:1050.00px;top:350.94px;font-family:'Liberation Sans', sans-serif;font-size:12.5px;line-height:12.5px;font-weight:normal;color:#c3bfbf;white-space:nowrap;-webkit-text-stroke:0.25px #c3bfbf;">8</div>
<div style="left:1038px;top:378px;width:221px;height:1px;background:#7f807d;"></div>
<div style="left:1047.00px;top:390.66px;font-family:'Liberation Sans', sans-serif;font-size:12.5px;line-height:12.5px;font-weight:normal;color:#111;white-space:nowrap;-webkit-text-stroke:0.25px #111;">Minute</div>
<div style="left:1047px;top:411.08000000000004px;width:189.5999999999999px;height:24.299999999999955px;background:#eff0ed;border:1px solid #aaaba8;border-radius:3px;box-sizing:border-box"></div>
<div style="left:1050.00px;top:417.86px;font-family:'Liberation Sans', sans-serif;font-size:12.5px;line-height:12.5px;font-weight:normal;color:#c3bfbf;white-space:nowrap;-webkit-text-stroke:0.25px #c3bfbf;">0</div>
<div style="left:1038px;top:445px;width:221px;height:1px;background:#7f807d;"></div>
<div style="left:1047.00px;top:457.58px;font-family:'Liberation Sans', sans-serif;font-size:12.5px;line-height:12.5px;font-weight:normal;color:#111;white-space:nowrap;-webkit-text-stroke:0.25px #111;">Value Until Time</div>
<div style="left:1047px;top:478.0000000000001px;width:189.5999999999999px;height:24.299999999999955px;background:#eff0ed;border:1px solid #aaaba8;border-radius:3px;box-sizing:border-box"></div>
<div style="left:1050.00px;top:484.78px;font-family:'Liberation Sans', sans-serif;font-size:12.5px;line-height:12.5px;font-weight:normal;color:#c3bfbf;white-space:nowrap;-webkit-text-stroke:0.25px #c3bfbf;">0.4</div>
<div style="left:1038px;top:512px;width:221px;height:1px;background:#7f807d;"></div>
<div style="left:1047.00px;top:524.49px;font-family:'Liberation Sans', sans-serif;font-size:12.5px;line-height:12.5px;font-weight:normal;color:#111;white-space:nowrap;-webkit-text-stroke:0.25px #111;">Hour</div>
<div style="left:1047px;top:544.92px;width:189.5999999999999px;height:24.299999999999955px;background:#eff0ed;border:1px solid #aaaba8;border-radius:3px;box-sizing:border-box"></div>
<div style="left:1050.00px;top:551.69px;font-family:'Liberation Sans', sans-serif;font-size:12.5px;line-height:12.5px;font-weight:normal;color:#c3bfbf;white-space:nowrap;-webkit-text-stroke:0.25px #c3bfbf;">12</div>
<div style="left:1038px;top:579px;width:221px;height:1px;background:#7f807d;"></div>
<div style="left:1047.00px;top:591.41px;font-family:'Liberation Sans', sans-serif;font-size:12.5px;line-height:12.5px;font-weight:normal;color:#111;white-space:nowrap;-webkit-text-stroke:0.25px #111;">Minute</div>
<div style="left:1047px;top:611.84px;width:189.5999999999999px;height:24.299999999999955px;background:#eff0ed;border:1px solid #aaaba8;border-radius:3px;box-sizing:border-box"></div>
<div style="left:1050.00px;top:618.62px;font-family:'Liberation Sans', sans-serif;font-size:12.5px;line-height:12.5px;font-weight:normal;color:#c3bfbf;white-space:nowrap;-webkit-text-stroke:0.25px #c3bfbf;">0</div>
<div style="left:1038px;top:646px;width:221px;height:1px;background:#7f807d;"></div>
<div style="left:1047.00px;top:658.34px;font-family:'Liberation Sans', sans-serif;font-size:12.5px;line-height:12.5px;font-weight:normal;color:#111;white-space:nowrap;-webkit-text-stroke:0.25px #111;">Value Until Time</div>
<div style="left:1047px;top:678.7600000000001px;width:189.5999999999999px;height:24.299999999999955px;background:#eff0ed;border:1px solid #aaaba8;border-radius:3px;box-sizing:border-box"></div>
<div style="left:1050.00px;top:685.54px;font-family:'Liberation Sans', sans-serif;font-size:12.5px;line-height:12.5px;font-weight:normal;color:#c3bfbf;white-space:nowrap;-webkit-text-stroke:0.25px #c3bfbf;">0.9</div>
<div style="left:1038px;top:713px;width:221px;height:1px;background:#7f807d;"></div>
<div style="left:1047.00px;top:725.25px;font-family:'Liberation Sans', sans-serif;font-size:12.5px;line-height:12.5px;font-weight:normal;color:#111;white-space:nowrap;-webkit-text-stroke:0.25px #111;">Hour</div>
<div style="left:1047px;top:745.68px;width:189.5999999999999px;height:24.299999999999955px;background:#eff0ed;border:1px solid #aaaba8;border-radius:3px;box-sizing:border-box"></div>
<div style="left:1050.00px;top:752.45px;font-family:'Liberation Sans', sans-serif;font-size:12.5px;line-height:12.5px;font-weight:normal;color:#c3bfbf;white-space:nowrap;-webkit-text-stroke:0.25px #c3bfbf;">13</div>
<div style="left:1038px;top:780px;width:221px;height:1px;background:#7f807d;"></div>
<div style="left:1047.00px;top:792.17px;font-family:'Liberation Sans', sans-serif;font-size:12.5px;line-height:12.5px;font-weight:normal;color:#111;white-space:nowrap;-webkit-text-stroke:0.25px #111;">Minute</div>
<div style="left:1047px;top:812.6px;width:189.5999999999999px;height:24.299999999999955px;background:#eff0ed;border:1px solid #aaaba8;border-radius:3px;box-sizing:border-box"></div>
<div style="left:1050.00px;top:819.38px;font-family:'Liberation Sans', sans-serif;font-size:12.5px;line-height:12.5px;font-weight:normal;color:#c3bfbf;white-space:nowrap;-webkit-text-stroke:0.25px #c3bfbf;">0</div>
<div style="left:1038px;top:847px;width:221px;height:1px;background:#7f807d;"></div>
<div style="left:1047.00px;top:859.10px;font-family:'Liberation Sans', sans-serif;font-size:12.5px;line-height:12.5px;font-weight:normal;color:#111;white-space:nowrap;-webkit-text-stroke:0.25px #111;">Value Until Time</div>
<div style="left:1047px;top:879.5200000000001px;width:189.5999999999999px;height:24.299999999999955px;background:#eff0ed;border:1px solid #aaaba8;border-radius:3px;box-sizing:border-box"></div>
<div style="left:1050.00px;top:886.30px;font-family:'Liberation Sans', sans-serif;font-size:12.5px;line-height:12.5px;font-weight:normal;color:#c3bfbf;white-space:nowrap;-webkit-text-stroke:0.25px #c3bfbf;">0.8</div>
<div style="left:1038px;top:913px;width:221px;height:1px;background:#7f807d;"></div>
<div style="left:1047.00px;top:926.01px;font-family:'Liberation Sans', sans-serif;font-size:12.5px;line-height:12.5px;font-weight:normal;color:#111;white-space:nowrap;-webkit-text-stroke:0.25px #111;">Hour</div>
<div style="left:1047px;top:946.4399999999999px;width:189.5999999999999px;height:24.299999999999955px;background:#eff0ed;border:1px solid #aaaba8;border-radius:3px;box-sizing:border-box"></div>
<div style="left:1050.00px;top:953.21px;font-family:'Liberation Sans', sans-serif;font-size:12.5px;line-height:12.5px;font-weight:normal;color:#c3bfbf;white-space:nowrap;-webkit-text-stroke:0.25px #c3bfbf;">17</div>
<div style="left:1038px;top:980px;width:221px;height:1px;background:#7f807d;"></div>
<div style="left:1047.00px;top:992.93px;font-family:'Liberation Sans', sans-serif;font-size:12.5px;line-height:12.5px;font-weight:normal;color:#111;white-space:nowrap;-webkit-text-stroke:0.25px #111;">Minute</div>
<div style="left:1047px;top:1013.36px;width:189.5999999999999px;height:24.300000000000068px;background:#eff0ed;border:1px solid #aaaba8;border-radius:3px;box-sizing:border-box"></div>
<div style="left:1038px;top:1047px;width:221px;height:1px;background:#7f807d;"></div>
<div style="left:1259px;top:79px;width:14.200000000000045px;height:938px;background:#e3e4e1;border-left:1px solid #c9cac7;box-sizing:border-box"></div>
<div style="left:1259px;top:92.5px;width:14.200000000000045px;height:463.5px;background:#f5f6f4;border-left:1px solid #c9cac7;border-bottom:1px solid #c9cac7;box-sizing:border-box"></div>
<div style="left:1259px;top:79px;width:14.200000000000045px;height:13.5px;background:#f5f6f4;border-left:1px solid #c9cac7;border-bottom:1px solid #d0d1ce;box-sizing:border-box"></div>
<svg style="position:absolute;left:1261px;top:81px;" width="11" height="9" viewBox="0 0 11 9"><polygon points="1.5,7 9.5,7 5.5,3" fill="#555"/></svg>
<div style="left:1259px;top:1003.5px;width:14.200000000000045px;height:13.5px;background:#f5f6f4;border-left:1px solid #c9cac7;border-top:1px solid #d0d1ce;box-sizing:border-box"></div>
<svg style="position:absolute;left:1261px;top:1006px;" width="11" height="9" viewBox="0 0 11 9"><polygon points="1.5,3 9.5,3 5.5,7" fill="#555"/></svg>
<div style="left:0px;top:1017px;width:1273.2px;height:1.2000000000000455px;background:#000;"></div>
<div style="left:0px;top:1018.2px;width:1273.2px;height:13.799999999999955px;background:#9fa09d;"></div>
<div style="left:1273.2px;top:0px;width:1.7999999999999545px;height:1032px;background:#e2e3e0;"></div>
</div>
</body></html>
